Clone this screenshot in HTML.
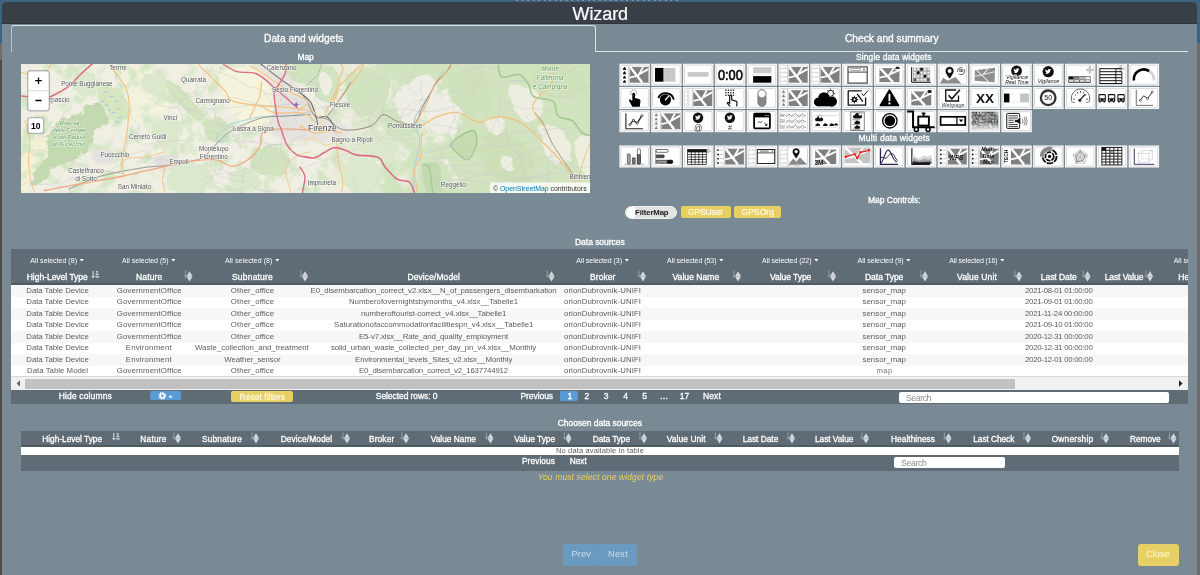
<!DOCTYPE html><html lang="en"><head><meta charset="utf-8"><title>Wizard</title><style>
html,body{margin:0;padding:0;}
body{width:1200px;height:575px;overflow:hidden;background:#4a4a4a;font-family:"Liberation Sans",sans-serif;}
#root{will-change:transform;position:absolute;left:0;top:0;width:1200px;height:575px;overflow:hidden;}
#root>div{position:absolute;}
#root>svg{position:absolute;}
span.t{position:absolute;white-space:nowrap;line-height:1;transform:translateY(-50%);}

</style></head><body>
<div id="root">
<div style="left:0px;top:0px;width:1200px;height:575px;background:#3c6482;"></div>
<div style="left:0px;top:43px;width:1200px;height:532px;background:#6d6d6d;"></div>
<div style="left:0px;top:60px;width:2px;height:515px;background:#4c4c4c;"></div>
<div style="left:2px;top:2px;width:1195px;height:580px;background:#798a94;border-radius:4px 4px 0 0;"></div>
<div style="left:2px;top:2px;width:1195px;height:22px;background:#393f47;border-radius:4px 4px 0 0;border-bottom:1px solid #2f343b;box-sizing:border-box;"></div>
<div style="left:516px;top:0px;width:164px;height:1.3px;background:repeating-linear-gradient(90deg,rgba(200,180,140,.55) 0 2px,transparent 2px 5.5px);"></div>
<div style="left:11px;top:25px;width:585px;height:27px;background:transparent;border:1px solid #dfe4e7;border-left-color:#b9c3c9;border-bottom:none;border-radius:3px 3px 0 0;box-sizing:border-box;"></div>
<div style="left:596px;top:51px;width:592px;height:1px;background:#dfe4e7;"></div>
<div style="left:625px;top:205.5px;width:52px;height:13.5px;background:#e2e2e2;border-radius:7px;border:1px solid #f2f2f2;box-sizing:border-box;"></div>
<div style="left:626.5px;top:206.8px;width:10.8px;height:10.8px;background:#fff;border-radius:50%;"></div>
<div style="left:680.5px;top:206px;width:50px;height:12px;background:#e8cf62;border-radius:2px;"></div>
<div style="left:734.3px;top:206px;width:47px;height:12px;background:#e8cf62;border-radius:2px;"></div>
<div style="left:11px;top:249px;width:1177px;height:36px;background:#5f6c75;border-bottom:2px solid #4f5b63;box-sizing:border-box;"></div>
<div style="left:11px;top:285px;width:1177px;height:92px;background:#fff;"></div>
<div style="left:11px;top:285.0px;width:1177px;height:11.5px;background:#f7f7f7;"></div>
<div style="left:11px;top:308.0px;width:1177px;height:11.5px;background:#f7f7f7;"></div>
<div style="left:11px;top:331.0px;width:1177px;height:11.5px;background:#f7f7f7;"></div>
<div style="left:11px;top:354.0px;width:1177px;height:11.5px;background:#f7f7f7;"></div>
<div style="left:11px;top:376px;width:1177px;height:1px;background:#d8d8d8;"></div>
<div style="left:11px;top:377px;width:1177px;height:13px;background:#f1f1f1;"></div>
<div style="left:25px;top:378.5px;width:990px;height:10.5px;background:#c1c1c1;"></div>
<div style="left:11px;top:390px;width:1177px;height:14px;background:#5f6c75;"></div>
<div style="left:150.3px;top:391.2px;width:31px;height:9.3px;background:#5b9bd5;border-radius:2px;"></div>
<div style="left:231.3px;top:391.3px;width:62px;height:11.2px;background:#e8cf62;border-radius:2px;"></div>
<div style="left:560px;top:391px;width:18px;height:10.3px;background:#5b9bd5;border-radius:2px;"></div>
<div style="left:898.7px;top:392px;width:270.6px;height:11.3px;background:#fff;border-radius:2px;"></div>
<div style="left:21px;top:430.8px;width:1157.7px;height:16px;background:#5f6c75;border-bottom:2px solid #4f5b63;box-sizing:border-box;"></div>
<div style="left:21px;top:446.8px;width:1157.7px;height:8.4px;background:#fff;"></div>
<div style="left:21px;top:455.2px;width:1157.7px;height:15.6px;background:#5f6c75;"></div>
<div style="left:894px;top:457.3px;width:111px;height:11px;background:#fff;border-radius:2px;"></div>
<div style="left:563px;top:543.5px;width:35.6px;height:22px;background:#6b9ac0;border-radius:3px;"></div>
<div style="left:598.5px;top:543.5px;width:38px;height:22px;background:#6b9ac0;border-radius:3px;"></div>
<div style="left:1138px;top:543.6px;width:41px;height:22.4px;background:#e8d066;border-radius:3px;"></div>
<svg style="left:11px;top:377px" width="1177" height="13" viewBox="0 0 1177 13"><path d="M9 3.2 L9 9.8 L5.6 6.5Z" fill="#666"/><path d="M1168 3.2 L1168 9.8 L1171.6 6.5Z" fill="#222"/></svg><svg style="left:0;top:0" width="1200" height="575" viewBox="0 0 1200 575"><path d="M79.7 259 h4.2 l-2.1 2.6z" fill="#fff"/><path d="M171.2 259 h4.2 l-2.1 2.6z" fill="#fff"/><path d="M275.2 259 h4.2 l-2.1 2.6z" fill="#fff"/><path d="M624.7 259 h4.2 l-2.1 2.6z" fill="#fff"/><path d="M719.2 259 h4.2 l-2.1 2.6z" fill="#fff"/><path d="M814.2 259 h4.2 l-2.1 2.6z" fill="#fff"/><path d="M906.2 259 h4.2 l-2.1 2.6z" fill="#fff"/><path d="M1000.2 259 h4.2 l-2.1 2.6z" fill="#fff"/><g fill="#c9d0d4"><rect x="92.5" y="271" width="1.2" height="6.5"/><path d="M91.3 276 h3.6 l-1.8 2.4z"/><rect x="95.89999999999999" y="271" width="2.2" height="1.6"/><rect x="95.7" y="273.4" width="2.8" height="1.6"/><rect x="95.5" y="275.8" width="3.4" height="1.8"/></g><g fill="#8f9aa1"><rect x="184.9" y="270.5" width="1.1" height="6"/><path d="M183.6 275.6 h3.7 l-1.85 2.2z"/></g><path d="M189.5 271.2 l3 5 h-6z M189.5 281.6 l3 -5 h-6z" fill="#d3d8dc"/><g fill="#8f9aa1"><rect x="300.4" y="270.5" width="1.1" height="6"/><path d="M299.1 275.6 h3.7 l-1.85 2.2z"/></g><path d="M305.0 271.2 l3 5 h-6z M305.0 281.6 l3 -5 h-6z" fill="#d3d8dc"/><g fill="#8f9aa1"><rect x="546.9" y="270.5" width="1.1" height="6"/><path d="M545.6 275.6 h3.7 l-1.85 2.2z"/></g><path d="M551.5 271.2 l3 5 h-6z M551.5 281.6 l3 -5 h-6z" fill="#d3d8dc"/><g fill="#8f9aa1"><rect x="638.4" y="270.5" width="1.1" height="6"/><path d="M637.1 275.6 h3.7 l-1.85 2.2z"/></g><path d="M643.0 271.2 l3 5 h-6z M643.0 281.6 l3 -5 h-6z" fill="#d3d8dc"/><g fill="#8f9aa1"><rect x="733.4" y="270.5" width="1.1" height="6"/><path d="M732.1 275.6 h3.7 l-1.85 2.2z"/></g><path d="M738.0 271.2 l3 5 h-6z M738.0 281.6 l3 -5 h-6z" fill="#d3d8dc"/><g fill="#8f9aa1"><rect x="828.4" y="270.5" width="1.1" height="6"/><path d="M827.1 275.6 h3.7 l-1.85 2.2z"/></g><path d="M833.0 271.2 l3 5 h-6z M833.0 281.6 l3 -5 h-6z" fill="#d3d8dc"/><g fill="#8f9aa1"><rect x="920.4" y="270.5" width="1.1" height="6"/><path d="M919.1 275.6 h3.7 l-1.85 2.2z"/></g><path d="M925.0 271.2 l3 5 h-6z M925.0 281.6 l3 -5 h-6z" fill="#d3d8dc"/><g fill="#8f9aa1"><rect x="1014.4" y="270.5" width="1.1" height="6"/><path d="M1013.1 275.6 h3.7 l-1.85 2.2z"/></g><path d="M1019.0 271.2 l3 5 h-6z M1019.0 281.6 l3 -5 h-6z" fill="#d3d8dc"/><g fill="#8f9aa1"><rect x="1082.9" y="270.5" width="1.1" height="6"/><path d="M1081.6 275.6 h3.7 l-1.85 2.2z"/></g><path d="M1087.5 271.2 l3 5 h-6z M1087.5 281.6 l3 -5 h-6z" fill="#d3d8dc"/><g fill="#8f9aa1"><rect x="1145.4" y="270.5" width="1.1" height="6"/><path d="M1144.1 275.6 h3.7 l-1.85 2.2z"/></g><path d="M1150.0 271.2 l3 5 h-6z M1150.0 281.6 l3 -5 h-6z" fill="#d3d8dc"/><g fill="#c9d0d4"><rect x="113.2" y="433" width="1.2" height="6.5"/><path d="M112 438 h3.6 l-1.8 2.4z"/><rect x="116.6" y="433" width="2.2" height="1.6"/><rect x="116.4" y="435.4" width="2.8" height="1.6"/><rect x="116.2" y="437.8" width="3.4" height="1.8"/></g><g fill="#8f9aa1"><rect x="173.4" y="432.5" width="1.1" height="6"/><path d="M172.1 437.6 h3.7 l-1.85 2.2z"/></g><path d="M178.0 433.2 l3 5 h-6z M178.0 443.6 l3 -5 h-6z" fill="#d3d8dc"/><g fill="#8f9aa1"><rect x="251.4" y="432.5" width="1.1" height="6"/><path d="M250.1 437.6 h3.7 l-1.85 2.2z"/></g><path d="M256.0 433.2 l3 5 h-6z M256.0 443.6 l3 -5 h-6z" fill="#d3d8dc"/><g fill="#8f9aa1"><rect x="342.4" y="432.5" width="1.1" height="6"/><path d="M341.1 437.6 h3.7 l-1.85 2.2z"/></g><path d="M347.0 433.2 l3 5 h-6z M347.0 443.6 l3 -5 h-6z" fill="#d3d8dc"/><g fill="#8f9aa1"><rect x="401.4" y="432.5" width="1.1" height="6"/><path d="M400.1 437.6 h3.7 l-1.85 2.2z"/></g><path d="M406.0 433.2 l3 5 h-6z M406.0 443.6 l3 -5 h-6z" fill="#d3d8dc"/><g fill="#8f9aa1"><rect x="485.9" y="432.5" width="1.1" height="6"/><path d="M484.6 437.6 h3.7 l-1.85 2.2z"/></g><path d="M490.5 433.2 l3 5 h-6z M490.5 443.6 l3 -5 h-6z" fill="#d3d8dc"/><g fill="#8f9aa1"><rect x="563.9" y="432.5" width="1.1" height="6"/><path d="M562.6 437.6 h3.7 l-1.85 2.2z"/></g><path d="M568.5 433.2 l3 5 h-6z M568.5 443.6 l3 -5 h-6z" fill="#d3d8dc"/><g fill="#8f9aa1"><rect x="639.4" y="432.5" width="1.1" height="6"/><path d="M638.1 437.6 h3.7 l-1.85 2.2z"/></g><path d="M644.0 433.2 l3 5 h-6z M644.0 443.6 l3 -5 h-6z" fill="#d3d8dc"/><g fill="#8f9aa1"><rect x="714.9" y="432.5" width="1.1" height="6"/><path d="M713.6 437.6 h3.7 l-1.85 2.2z"/></g><path d="M719.5 433.2 l3 5 h-6z M719.5 443.6 l3 -5 h-6z" fill="#d3d8dc"/><g fill="#8f9aa1"><rect x="787.4" y="432.5" width="1.1" height="6"/><path d="M786.1 437.6 h3.7 l-1.85 2.2z"/></g><path d="M792.0 433.2 l3 5 h-6z M792.0 443.6 l3 -5 h-6z" fill="#d3d8dc"/><g fill="#8f9aa1"><rect x="861.4" y="432.5" width="1.1" height="6"/><path d="M860.1 437.6 h3.7 l-1.85 2.2z"/></g><path d="M866.0 433.2 l3 5 h-6z M866.0 443.6 l3 -5 h-6z" fill="#d3d8dc"/><g fill="#8f9aa1"><rect x="943.9" y="432.5" width="1.1" height="6"/><path d="M942.6 437.6 h3.7 l-1.85 2.2z"/></g><path d="M948.5 433.2 l3 5 h-6z M948.5 443.6 l3 -5 h-6z" fill="#d3d8dc"/><g fill="#8f9aa1"><rect x="1023.4" y="432.5" width="1.1" height="6"/><path d="M1022.1 437.6 h3.7 l-1.85 2.2z"/></g><path d="M1028.0 433.2 l3 5 h-6z M1028.0 443.6 l3 -5 h-6z" fill="#d3d8dc"/><g fill="#8f9aa1"><rect x="1101.4" y="432.5" width="1.1" height="6"/><path d="M1100.1 437.6 h3.7 l-1.85 2.2z"/></g><path d="M1106.0 433.2 l3 5 h-6z M1106.0 443.6 l3 -5 h-6z" fill="#d3d8dc"/><g fill="#8f9aa1"><rect x="1168.9" y="432.5" width="1.1" height="6"/><path d="M1167.6 437.6 h3.7 l-1.85 2.2z"/></g><path d="M1173.5 433.2 l3 5 h-6z M1173.5 443.6 l3 -5 h-6z" fill="#d3d8dc"/><circle cx="162.3" cy="395.8" r="2.1" fill="none" stroke="#fff" stroke-width="1.5"/><circle cx="162.3" cy="395.8" r="3.3" fill="none" stroke="#fff" stroke-width="1.2" stroke-dasharray="1.3 1.29"/><path d="M168.6 397.4 h4 l-2 -2.4z" fill="#fff"/></svg><svg style="left:21px;top:64px" width="569" height="129" viewBox="0 0 569 129" font-family="Liberation Sans, sans-serif">
<filter id="bl"><feGaussianBlur stdDeviation="1.2"/></filter><filter id="bl2"><feGaussianBlur stdDeviation="0.5"/></filter>
<filter id="rg" x="-5%" y="-5%" width="110%" height="110%"><feTurbulence type="fractalNoise" baseFrequency="0.09" numOctaves="3" seed="4"/><feDisplacementMap in="SourceGraphic" scale="9"/><feGaussianBlur stdDeviation="0.6"/></filter>
<filter id="nz" color-interpolation-filters="sRGB" x="0" y="0" width="100%" height="100%"><feTurbulence type="fractalNoise" baseFrequency="0.075" numOctaves="4" seed="11"/><feColorMatrix values="0 0 0 0 0.83  0 0 0 0 0.90  0 0 0 0 0.77  0 0 4 0 -1.9"/></filter>
<filter id="nz2" color-interpolation-filters="sRGB" x="0" y="0" width="100%" height="100%"><feTurbulence type="fractalNoise" baseFrequency="0.05" numOctaves="4" seed="5"/><feColorMatrix values="0 0 0 0 0.82  0 0 0 0 0.89  0 0 0 0 0.75  0 0 5 0 -1.9"/></filter>
<linearGradient id="fade" x1="0" x2="1" y1="0" y2="0"><stop offset="0" stop-color="#fff" stop-opacity="0"/><stop offset="0.25" stop-color="#fff" stop-opacity="1"/></linearGradient><mask id="mk"><rect x="300" y="0" width="269" height="129" fill="url(#fade)"/></mask>
<rect width="569" height="129" fill="#f1efe4"/>
<path d="M-1.0 68.5 C1.4 60.0 8.3 75.7 13.5 75.7 C18.7 75.7 28.4 66.5 30.4 68.5 C32.4 70.5 27.6 82.2 25.6 87.8 C23.6 93.5 21.2 97.5 18.3 102.3 C15.5 107.2 11.9 112.8 8.7 116.8 C5.4 120.9 0.6 134.6 -1.0 126.5 C-2.6 118.4 -3.4 77.0 -1.0 68.5Z" fill="#f4f2d6" filter="url(#bl)"/>
<path d="M100.5 3.2 C105.3 -1.6 126.3 2.0 134.3 5.7 C142.4 9.3 147.2 17.7 148.8 25.0 C150.4 32.2 150.0 43.5 144.0 49.2 C138.0 54.8 119.0 61.2 112.6 58.8 C106.1 56.4 107.3 43.9 105.3 34.7 C103.3 25.4 95.7 8.1 100.5 3.2Z" fill="#f3f2dc" filter="url(#bl)"/>
<rect width="569" height="129" filter="url(#nz)"/>
<g mask="url(#mk)"><rect x="300" width="269" height="129" filter="url(#nz2)"/></g>
<path d="M64.2 41.9 C68.3 39.9 74.9 37.9 78.7 39.5 C82.6 41.1 86.6 48.2 87.2 51.6 C87.8 55.0 85.0 57.6 82.4 60.0 C79.8 62.5 73.5 62.3 71.5 66.1 C69.5 69.9 72.3 78.6 70.3 83.0 C68.3 87.4 64.0 89.8 59.4 92.7 C54.8 95.5 47.7 97.1 42.5 99.9 C37.3 102.7 32.8 106.0 28.0 109.6 C23.2 113.2 16.7 120.5 13.5 121.7 C10.3 122.9 7.9 120.1 8.7 116.8 C9.5 113.6 15.5 107.2 18.3 102.3 C21.2 97.5 23.6 93.5 25.6 87.8 C27.6 82.2 28.4 73.7 30.4 68.5 C32.4 63.3 33.6 59.2 37.7 56.4 C41.7 53.6 50.2 54.0 54.6 51.6 C59.0 49.2 60.2 43.9 64.2 41.9Z" fill="#c3d9b0" filter="url(#rg)"/>
<path d="M78.7 22.6 C82.1 21.1 91.2 21.1 95.7 23.1 C100.1 25.1 103.2 30.9 105.3 34.7 C107.4 38.4 108.8 40.9 108.2 45.5 C107.6 50.2 104.1 60.2 101.7 62.5 C99.3 64.8 95.9 61.5 93.7 59.3 C91.6 57.2 91.0 52.9 88.9 49.6 C86.8 46.4 83.3 42.9 81.2 40.0 C79.0 37.1 76.3 35.1 75.8 32.2 C75.4 29.3 75.4 24.1 78.7 22.6Z" fill="#d6e6c0" filter="url(#rg)"/>
<path d="M145.2 15.3 C146.8 14.5 152.1 16.9 156.1 20.2 C160.1 23.4 164.7 29.4 169.4 34.7 C174.0 39.9 182.3 47.8 183.9 51.6 C185.5 55.4 182.1 58.2 179.0 57.6 C176.0 57.0 170.0 51.8 165.7 48.0 C161.5 44.1 156.9 38.5 153.7 34.7 C150.4 30.8 147.8 28.2 146.4 25.0 C145.0 21.8 143.6 16.1 145.2 15.3Z" fill="#d2e3c0" filter="url(#rg)"/>
<path d="M124.7 10.5 C128.7 9.3 140.8 10.1 144.0 12.9 C147.2 15.7 146.4 24.6 144.0 27.4 C141.6 30.2 133.5 31.0 129.5 29.8 C125.5 28.6 120.6 23.4 119.8 20.2 C119.0 16.9 120.6 11.7 124.7 10.5Z" fill="#dbe8cc" filter="url(#rg)"/>
<path d="M134.3 56.4 C138.4 54.4 148.8 52.0 153.7 54.0 C158.5 56.0 163.3 63.7 163.3 68.5 C163.3 73.3 158.1 81.4 153.7 83.0 C149.2 84.6 140.8 81.0 136.7 78.2 C132.7 75.3 129.9 69.7 129.5 66.1 C129.1 62.5 130.3 58.4 134.3 56.4Z" fill="#dbe8cc" filter="url(#rg)"/>
<path d="M182.7 58.8 C184.7 55.2 195.1 52.8 199.6 54.0 C204.0 55.2 208.8 62.1 209.2 66.1 C209.6 70.1 205.6 76.6 202.0 78.2 C198.4 79.8 190.7 79.0 187.5 75.7 C184.3 72.5 180.6 62.5 182.7 58.8Z" fill="#d2e3c0" filter="url(#rg)"/>
<path d="M231.0 87.8 C235.4 85.0 248.7 81.4 255.2 83.0 C261.6 84.6 268.9 92.7 269.7 97.5 C270.5 102.3 265.2 110.0 260.0 112.0 C254.8 114.0 243.5 111.6 238.2 109.6 C233.0 107.6 229.8 103.5 228.6 99.9 C227.4 96.3 226.6 90.7 231.0 87.8Z" fill="#d2e3c0" filter="url(#rg)"/>
<path d="M153.7 99.9 C160.1 97.9 176.2 99.5 182.7 102.3 C189.1 105.2 192.3 112.6 192.3 116.8 C192.3 121.1 188.7 125.9 182.7 127.7 C176.6 129.5 162.5 129.9 156.1 127.7 C149.6 125.5 144.4 119.0 144.0 114.4 C143.6 109.8 147.2 101.9 153.7 99.9Z" fill="#dbe8cc" filter="url(#rg)"/>
<path d="M211.7 107.2 C214.9 103.3 226.2 102.3 231.0 104.7 C235.8 107.2 240.7 117.8 240.7 121.7 C240.7 125.5 235.8 126.7 231.0 127.7 C226.2 128.7 214.9 131.1 211.7 127.7 C208.4 124.3 208.4 111.0 211.7 107.2Z" fill="#dbe8cc" filter="url(#rg)"/>
<path d="M260.0 -1.6 C264.4 -3.2 284.2 -4.4 289.0 -1.6 C293.8 1.2 291.8 12.1 289.0 15.3 C286.2 18.6 276.5 19.0 272.1 17.7 C267.6 16.5 264.4 11.3 262.4 8.1 C260.4 4.9 255.6 0.0 260.0 -1.6Z" fill="#d2e3c0" filter="url(#rg)"/>
<path d="M54.6 10.5 C57.8 8.1 67.9 5.7 71.5 8.1 C75.1 10.5 77.9 21.0 76.3 25.0 C74.7 29.0 65.9 32.7 61.8 32.2 C57.8 31.8 53.4 26.2 52.2 22.6 C51.0 19.0 51.4 12.9 54.6 10.5Z" fill="#dbe8cc" filter="url(#rg)"/>
<path d="M202.0 0.8 C206.0 -0.4 219.7 0.4 223.7 3.2 C227.8 6.1 228.6 14.9 226.2 17.7 C223.7 20.6 213.7 21.4 209.2 20.2 C204.8 19.0 200.8 13.7 199.6 10.5 C198.4 7.3 198.0 2.0 202.0 0.8Z" fill="#dbe8cc" filter="url(#rg)"/>
<path d="M250.3 44.3 C252.3 41.5 262.0 39.9 264.8 41.9 C267.6 43.9 269.3 53.6 267.2 56.4 C265.2 59.2 255.6 60.8 252.7 58.8 C249.9 56.8 248.3 47.2 250.3 44.3Z" fill="#dbe8cc" filter="url(#rg)"/>
<path d="M13.5 54.0 C15.1 50.8 23.2 49.2 25.6 51.6 C28.0 54.0 29.6 65.3 28.0 68.5 C26.4 71.7 18.3 73.3 15.9 70.9 C13.5 68.5 11.9 57.2 13.5 54.0Z" fill="#dbe8cc" filter="url(#rg)"/>
<path d="M327.7 10.6 C332.9 5.3 352.0 4.1 359.3 5.7 C366.6 7.4 371.5 13.8 371.5 20.3 C371.5 26.8 364.6 39.4 359.3 44.7 C354.0 49.9 345.1 53.2 339.8 52.0 C334.6 50.7 329.7 44.3 327.7 37.4 C325.6 30.5 322.4 15.9 327.7 10.6Z" fill="#d2e3c0" filter="url(#rg)"/>
<path d="M371.5 -1.6 C379.6 -4.8 417.7 -4.8 425.0 -1.6 C432.3 1.7 420.5 13.0 415.3 17.9 C410.0 22.8 399.8 27.6 393.4 27.6 C386.9 27.6 380.0 22.8 376.3 17.9 C372.7 13.0 363.3 1.7 371.5 -1.6Z" fill="#d2e3c0" filter="url(#rg)"/>
<path d="M337.4 69.0 C341.4 66.6 352.8 64.5 359.3 66.6 C365.8 68.6 375.1 75.9 376.3 81.2 C377.5 86.4 371.5 96.2 366.6 98.2 C361.7 100.2 352.4 96.2 347.1 93.3 C341.9 90.5 336.6 85.2 335.0 81.2 C333.3 77.1 333.3 71.4 337.4 69.0Z" fill="#dbe8cc" filter="url(#rg)"/>
<path d="M427.4 -1.6 C451.7 -6.0 547.0 -23.3 571.0 -1.6 C594.9 20.1 591.2 106.9 571.0 128.6 C550.7 150.3 472.0 131.6 449.3 128.6 C426.6 125.6 438.8 117.0 434.7 110.4 C430.7 103.7 425.0 95.4 425.0 88.5 C425.0 81.6 430.7 74.3 434.7 69.0 C438.8 63.7 449.3 60.9 449.3 56.8 C449.3 52.8 438.8 49.9 434.7 44.7 C430.7 39.4 426.2 32.9 425.0 25.2 C423.8 17.5 403.1 2.9 427.4 -1.6Z" fill="#d2e3c0" filter="url(#rg)"/>
<path d="M429.9 10.6 C434.7 5.3 457.4 2.5 463.9 8.2 C470.4 13.8 471.2 37.4 468.8 44.7 C466.3 52.0 455.0 52.8 449.3 52.0 C443.6 51.2 438.0 46.7 434.7 39.8 C431.5 32.9 425.0 15.9 429.9 10.6Z" fill="#cfe1bb" filter="url(#rg)"/>
<path d="M512.6 0.9 C518.3 -3.6 542.6 -3.2 551.5 0.9 C560.4 4.9 566.9 19.5 566.1 25.2 C565.3 30.9 554.8 34.5 546.6 34.9 C538.5 35.3 523.1 33.3 517.4 27.6 C511.8 22.0 506.9 5.3 512.6 0.9Z" fill="#cfe1bb" filter="url(#rg)"/>
<path d="M400.7 98.2 C404.7 93.5 420.1 95.6 425.0 100.6 C429.9 105.7 433.9 123.9 429.9 128.6 C425.8 133.3 405.5 133.7 400.7 128.6 C395.8 123.5 396.6 102.9 400.7 98.2Z" fill="#d2e3c0" filter="url(#rg)"/>
<path d="M403.1 103.1 C405.1 98.4 414.8 96.4 417.7 100.6 C420.5 104.9 422.1 123.9 420.1 128.6 C418.1 133.3 408.4 132.9 405.5 128.6 C402.7 124.3 401.1 107.7 403.1 103.1Z" fill="#c3d9b0" filter="url(#rg)"/>
<path d="M468.8 69.0 C475.3 67.0 490.7 71.4 498.0 76.3 C505.3 81.2 512.6 91.3 512.6 98.2 C512.6 105.1 505.3 115.6 498.0 117.7 C490.7 119.7 475.3 115.2 468.8 110.4 C462.3 105.5 459.0 95.4 459.0 88.5 C459.0 81.6 462.3 71.0 468.8 69.0Z" fill="#cde0b8" filter="url(#rg)"/>
<path d="M322.8 98.2 C328.1 94.5 345.5 92.5 352.0 95.8 C358.5 99.0 363.3 112.2 361.7 117.7 C360.1 123.1 349.2 128.6 342.3 128.6 C335.4 128.6 323.6 122.7 320.4 117.7 C317.1 112.6 317.5 101.8 322.8 98.2Z" fill="#dbe8cc" filter="url(#rg)"/>
<path d="M488.2 22.8 C491.5 19.5 506.9 21.5 512.6 25.2 C518.3 28.8 523.1 39.0 522.3 44.7 C521.5 50.3 512.6 59.3 507.7 59.3 C502.8 59.3 496.4 50.7 493.1 44.7 C489.9 38.6 485.0 26.0 488.2 22.8Z" fill="#eeeee0" filter="url(#rg)"/>
<path d="M519.9 61.7 C523.1 59.3 536.9 61.3 541.8 66.6 C546.6 71.8 550.7 88.1 549.1 93.3 C547.5 98.6 536.5 100.2 532.0 98.2 C527.6 96.2 524.3 87.2 522.3 81.2 C520.3 75.1 516.6 64.1 519.9 61.7Z" fill="#eeeee0" filter="url(#rg)"/>
<path d="M553.9 76.3 C556.0 71.4 568.1 68.2 571.0 73.9 C573.8 79.5 573.0 105.5 571.0 110.4 C568.9 115.2 561.6 108.7 558.8 103.1 C556.0 97.4 551.9 81.2 553.9 76.3Z" fill="#eeeee0" filter="url(#rg)"/>
<path d="M463.9 56.8 C465.5 54.4 477.3 52.8 480.9 54.4 C484.6 56.0 487.4 64.1 485.8 66.6 C484.2 69.0 474.9 70.6 471.2 69.0 C467.6 67.4 462.3 59.3 463.9 56.8Z" fill="#eeeee0" filter="url(#rg)"/>
<path d="M480.9 93.3 C483.0 92.1 491.5 93.7 493.1 95.8 C494.7 97.8 492.7 104.3 490.7 105.5 C488.7 106.7 482.6 105.1 480.9 103.1 C479.3 101.0 478.9 94.5 480.9 93.3Z" fill="#eeeee0" filter="url(#rg)"/>
<path d="M378.8 25.2 C383.6 19.5 399.4 10.6 405.5 10.6 C411.6 10.6 415.3 19.5 415.3 25.2 C415.3 30.9 410.4 39.0 405.5 44.7 C400.7 50.3 390.9 59.3 386.1 59.3 C381.2 59.3 377.5 50.3 376.3 44.7 C375.1 39.0 373.9 30.9 378.8 25.2Z" fill="#efeee4" filter="url(#rg)"/>
<path d="M415.3 69.0 C420.1 71.0 430.7 70.6 434.7 66.6 C438.8 62.5 442.8 49.9 439.6 44.7 C436.3 39.4 420.9 33.3 415.3 34.9 C409.6 36.6 405.5 48.7 405.5 54.4 C405.5 60.1 410.4 67.0 415.3 69.0Z" fill="#efeee4" filter="url(#rg)"/>
<path d="M229.0 6.0 C231.5 0.7 253.0 4.0 262.0 8.0 C271.0 12.0 277.3 23.0 283.0 30.0 C288.7 37.0 288.2 44.3 296.0 50.0 C303.8 55.7 326.7 59.5 330.0 64.0 C333.3 68.5 324.5 74.8 316.0 77.0 C307.5 79.2 289.7 78.2 279.0 77.0 C268.3 75.8 257.3 76.2 252.0 70.0 C246.7 63.8 250.8 50.7 247.0 40.0 C243.2 29.3 226.5 11.3 229.0 6.0Z" fill="#e6e3de" filter="url(#bl)"/>
<path d="M200.0 8.0 C205.0 2.2 226.3 1.3 235.0 5.0 C243.7 8.7 249.8 21.2 252.0 30.0 C254.2 38.8 252.5 52.7 248.0 58.0 C243.5 63.3 232.2 65.0 225.0 62.0 C217.8 59.0 209.2 49.0 205.0 40.0 C200.8 31.0 195.0 13.8 200.0 8.0Z" fill="#f4f3dc" filter="url(#bl)"/>
<path d="M268.9 -0.8 C274.3 -3.0 294.0 -1.8 301.5 -0.8 C309.0 0.2 310.4 1.4 313.6 5.2 C316.8 9.1 322.0 16.7 320.8 22.2 C319.6 27.6 310.4 35.9 306.3 37.9 C302.3 39.9 299.9 36.9 296.7 34.2 C293.4 31.6 290.2 25.0 287.0 22.2 C283.8 19.3 280.4 18.9 277.3 17.3 C274.3 15.7 270.3 15.5 268.9 12.5 C267.5 9.5 263.4 1.4 268.9 -0.8Z" fill="#d2e3c0" filter="url(#rg)"/>
<path d="M296.7 12.5 C297.1 8.9 303.9 8.1 306.3 10.1 C308.7 12.1 311.6 21.0 311.2 24.6 C310.8 28.2 306.3 33.8 303.9 31.8 C301.5 29.8 296.3 16.1 296.7 12.5Z" fill="#eeeee2" filter="url(#rg)"/>
<path d="M134.3 92.7 C137.2 90.4 150.0 89.8 153.7 91.5 C157.3 93.1 158.9 100.1 156.1 102.3 C153.3 104.5 140.4 106.4 136.7 104.7 C133.1 103.1 131.5 94.9 134.3 92.7Z" fill="#e2e0dc" filter="url(#bl)"/>
<path d="M71.5 87.8 C73.9 85.4 86.8 83.8 90.8 85.4 C94.9 87.0 98.1 95.1 95.7 97.5 C93.2 99.9 80.4 101.5 76.3 99.9 C72.3 98.3 69.1 90.2 71.5 87.8Z" fill="#e4e2de" filter="url(#bl)"/>
<path d="M429.9 81.2 C430.3 78.1 435.7 73.8 439.6 71.4 C443.4 69.1 450.3 65.4 453.0 67.0 C455.6 68.7 456.4 76.4 455.4 81.2 C454.4 85.9 449.9 94.3 446.9 95.8 C443.8 97.2 440.0 92.1 437.2 89.7 C434.3 87.2 429.4 84.2 429.9 81.2Z" fill="#c6dbb0" stroke="#9cc388" stroke-width="1.2"/>
<path d="M477.3 0.9 C477.9 2.9 477.5 11.4 480.9 13.0 C484.4 14.7 493.5 9.4 498.0 10.6 C502.4 11.8 505.3 16.7 507.7 20.3 C510.1 24.0 508.5 29.7 512.6 32.5 C516.6 35.3 528.0 34.1 532.0 37.4 C536.1 40.6 533.7 48.7 536.9 52.0 C540.2 55.2 547.5 54.0 551.5 56.8 C555.6 59.7 558.0 66.5 561.2 69.0 C564.5 71.5 569.3 71.4 571.0 71.9" fill="none" stroke="#a3c88f" stroke-width="1.6"/>
<path d="M400.7 100.6 C401.9 101.0 406.1 98.4 408.0 103.1 C409.8 107.7 411.0 124.3 411.6 128.6" fill="none" stroke="#a3c88f" stroke-width="1.2"/>
<path d="M184.3 19.5 C184.0 17.7 182.3 11.7 182.7 9.0 C183.1 6.2 185.6 5.5 186.8 2.8 C188.0 0.1 189.3 -5.5 189.8 -7.2 M33.6 72.9 C35.7 72.4 42.0 71.4 46.1 69.9 C50.1 68.3 55.7 66.0 58.0 63.6 C60.3 61.1 59.7 56.7 60.0 55.3 M464.4 23.3 C462.1 23.0 454.6 21.0 450.6 21.2 C446.6 21.4 444.0 23.2 440.5 24.4 C437.1 25.6 433.2 26.9 429.6 28.4 C426.1 30.0 420.9 32.9 419.2 33.8 M397.7 31.5 C396.2 30.3 389.9 27.3 388.5 24.5 C387.2 21.8 388.6 18.3 389.4 15.2 C390.3 12.2 393.5 9.8 393.7 6.3 C393.9 2.9 391.4 -2.2 390.6 -5.6 C389.9 -9.0 388.8 -10.9 389.0 -14.0 C389.2 -17.2 391.3 -22.8 391.7 -24.5 M259.6 108.4 C261.0 108.2 264.5 108.3 268.3 107.5 C272.1 106.7 277.5 105.2 282.4 103.6 C287.3 102.1 292.5 100.1 297.6 98.3 C302.7 96.6 308.5 94.6 313.2 93.1 C317.8 91.6 321.5 91.2 325.5 89.6 C329.6 87.9 335.6 84.2 337.6 83.1 M521.7 64.0 C523.0 65.9 528.6 71.9 529.9 75.3 C531.1 78.7 528.9 80.8 529.3 84.6 C529.6 88.4 530.5 94.8 532.0 98.1 C533.4 101.5 535.0 102.5 538.0 104.5 C540.9 106.5 546.4 108.9 549.6 110.2 C552.9 111.5 556.2 112.0 557.5 112.3 M210.1 73.1 C213.0 72.3 222.1 69.2 227.4 68.3 C232.7 67.3 237.4 67.9 242.0 67.3 C246.7 66.8 253.1 65.4 255.4 65.0 M108.5 127.0 C107.3 127.6 103.2 128.5 101.3 130.4 C99.4 132.3 97.2 135.2 97.0 138.3 C96.9 141.4 99.8 147.2 100.3 149.0 M84.5 32.5 C83.7 33.9 82.4 39.0 79.4 40.9 C76.4 42.7 70.5 41.7 66.4 43.6 C62.3 45.5 58.6 49.6 54.9 52.3 C51.2 55.1 46.9 57.3 44.2 60.0 C41.4 62.7 39.3 67.1 38.4 68.5 M392.6 117.9 C394.7 116.5 401.9 111.8 404.7 109.2 C407.5 106.6 406.9 105.0 409.4 102.4 C411.8 99.8 416.8 96.9 419.3 93.6 C421.9 90.3 421.0 85.3 424.7 82.8 C428.4 80.2 438.9 79.1 441.7 78.3 M465.6 95.4 C466.1 96.4 466.9 98.8 468.5 101.3 C470.1 103.8 474.1 106.7 475.3 110.4 C476.5 114.2 477.5 120.5 475.5 123.9 C473.6 127.3 466.0 128.6 463.5 130.9 C461.0 133.3 460.8 134.8 460.6 138.2 C460.5 141.6 462.4 149.1 462.8 151.3 M478.2 61.9 C478.0 60.3 476.8 56.5 476.9 52.8 C476.9 49.2 478.0 43.2 478.4 39.9 C478.9 36.6 479.2 34.3 479.4 33.2 M538.4 93.1 C536.7 93.0 532.9 91.8 528.4 92.5 C523.8 93.3 515.8 94.8 511.0 97.5 C506.3 100.1 501.8 106.5 499.9 108.3 M374.0 45.2 C371.2 45.9 362.0 47.8 357.6 49.4 C353.1 51.1 350.7 53.6 347.3 55.1 C343.9 56.6 340.0 56.4 337.3 58.2 C334.5 60.0 331.8 64.7 330.7 66.1 M434.5 42.1 C431.9 42.8 424.2 45.5 418.6 46.4 C413.0 47.3 406.8 47.8 400.9 47.5 C395.1 47.3 388.7 45.2 383.5 45.1 C378.3 45.0 371.8 46.6 369.5 46.9 M441.8 78.5 C441.2 76.6 438.9 70.8 437.8 67.2 C436.7 63.7 436.1 60.1 435.2 57.3 C434.4 54.5 433.3 53.0 432.8 50.5 C432.3 48.0 432.3 43.7 432.2 42.3 M439.4 65.5 C437.0 65.0 429.8 63.5 424.8 62.5 C419.8 61.4 414.0 60.7 409.3 59.4 C404.6 58.1 398.6 55.3 396.5 54.5 M397.9 113.1 C400.9 113.4 410.9 114.3 416.1 114.8 C421.3 115.3 424.1 116.1 428.9 116.2 C433.7 116.2 440.6 115.9 444.9 115.2 C449.3 114.4 450.2 112.6 455.1 111.8 C460.0 111.0 471.0 110.7 474.2 110.4 M208.4 32.7 C211.2 33.3 219.8 35.2 225.7 36.8 C231.6 38.4 238.4 41.4 243.6 42.3 C248.7 43.2 252.9 42.5 256.7 42.1 C260.6 41.7 263.7 40.2 266.8 40.0 C269.8 39.8 272.3 40.6 275.0 40.7 C277.7 40.8 281.8 40.5 283.2 40.5 M355.0 66.1 C355.8 67.3 356.1 71.4 359.5 73.2 C362.9 74.9 370.5 76.2 375.4 76.5 C380.2 76.8 384.4 75.0 388.4 75.2 C392.3 75.4 397.1 77.2 398.8 77.6 M523.0 73.6 C521.3 72.6 514.6 69.6 512.7 67.5 C510.9 65.5 513.2 63.9 512.0 61.4 C510.7 59.0 506.4 54.2 505.3 52.7 M126.6 34.1 C128.6 35.3 135.5 39.5 139.1 41.0 C142.8 42.5 145.4 43.0 148.4 43.2 C151.5 43.3 156.1 42.2 157.7 42.1 M28.7 26.0 C27.9 27.5 26.2 31.6 24.3 34.7 C22.4 37.8 19.8 42.6 17.3 44.4 C14.7 46.3 13.6 45.1 9.0 45.7 C4.4 46.2 -5.2 46.4 -10.3 47.7 C-15.5 49.0 -19.8 52.6 -21.7 53.6 M369.9 84.7 C368.8 83.6 365.7 80.6 363.1 78.4 C360.5 76.2 356.8 74.4 354.3 71.4 C351.8 68.5 349.2 63.5 348.2 60.6 C347.1 57.8 347.5 57.1 348.0 54.5 C348.5 52.0 351.8 48.1 351.1 45.2 C350.4 42.3 345.2 38.4 344.1 37.1 M287.9 125.2 C286.2 125.3 280.9 124.4 277.7 125.4 C274.4 126.4 271.8 130.1 268.3 131.0 C264.8 132.0 260.0 131.8 256.4 131.3 C252.9 130.7 250.1 128.6 247.1 127.7 C244.1 126.7 239.9 125.8 238.4 125.5 M373.3 32.0 C373.0 30.5 373.0 25.4 371.8 22.9 C370.5 20.5 369.1 18.7 365.8 17.1 C362.5 15.5 354.2 13.9 351.9 13.3 M427.1 84.8 C427.5 83.2 429.6 77.8 429.6 75.0 C429.7 72.2 426.9 70.7 427.3 67.9 C427.8 65.1 430.9 61.5 432.3 58.3 C433.7 55.0 433.2 51.3 435.7 48.4 C438.3 45.6 444.4 42.9 447.7 41.0 C451.0 39.1 454.1 37.7 455.4 37.0 M454.0 91.7 C455.0 90.3 456.6 85.1 459.6 83.3 C462.6 81.6 468.9 82.9 471.8 81.3 C474.8 79.6 475.7 76.4 477.3 73.6 C478.9 70.8 480.6 66.1 481.3 64.6 M39.9 120.3 C41.2 119.5 45.5 117.2 47.9 115.4 C50.3 113.7 51.7 111.6 54.3 109.8 C56.9 108.0 62.2 105.5 63.7 104.6 M555.2 63.7 C553.3 63.9 547.5 64.6 543.9 64.8 C540.3 64.9 537.8 64.2 533.5 64.5 C529.2 64.9 522.2 66.5 518.1 67.0 C513.9 67.5 513.3 67.3 508.5 67.4 C503.6 67.6 494.2 66.9 488.8 67.9 C483.5 68.8 478.5 72.2 476.4 73.0 M162.5 60.1 C162.2 58.5 161.9 53.6 161.1 50.4 C160.2 47.3 157.0 44.4 157.2 41.4 C157.3 38.4 158.8 34.8 161.9 32.6 C165.0 30.3 173.6 28.8 175.9 28.1 M51.4 96.4 C52.7 97.9 58.0 102.7 59.0 105.5 C60.0 108.4 59.0 111.2 57.3 113.3 C55.7 115.5 50.2 115.8 48.9 118.3 C47.6 120.7 48.8 124.9 49.4 127.8 C50.0 130.8 51.9 134.8 52.4 136.2 M179.8 108.4 C181.2 109.4 184.6 112.6 188.2 114.7 C191.8 116.7 197.6 118.2 201.5 120.5 C205.5 122.8 208.7 126.1 212.0 128.5 C215.3 130.9 218.3 133.3 221.2 134.8 C224.0 136.3 227.7 137.1 229.0 137.5 M474.9 36.8 C477.1 37.2 483.3 37.7 487.7 39.0 C492.2 40.3 496.6 43.7 501.8 44.6 C507.0 45.4 513.9 43.7 518.9 44.3 C523.9 44.9 529.6 47.4 531.8 48.0 M45.8 120.4 C44.1 120.8 38.5 122.7 35.1 122.7 C31.8 122.7 29.4 120.8 25.9 120.4 C22.4 119.9 17.7 121.3 14.3 120.1 C11.0 118.9 7.1 114.2 5.7 113.0 M171.2 71.9 C169.8 72.6 167.0 75.6 163.2 76.4 C159.5 77.2 153.8 76.2 148.6 76.6 C143.4 77.1 136.6 78.4 132.1 79.1 C127.5 79.7 123.2 80.3 121.4 80.5 M316.3 41.2 C313.6 41.6 304.9 42.8 300.0 43.8 C295.1 44.8 290.2 46.0 286.9 47.4 C283.5 48.8 282.6 51.5 279.8 52.3 C277.1 53.0 271.9 52.1 270.3 52.0 M358.3 111.3 C357.6 113.1 355.2 118.1 354.0 121.8 C352.9 125.6 352.9 131.0 351.2 134.0 C349.5 137.0 347.8 138.2 343.7 139.8 C339.7 141.5 331.1 142.5 326.9 143.9 C322.6 145.3 319.8 147.4 318.4 148.0 M528.1 68.1 C526.8 68.7 523.9 70.1 520.2 71.9 C516.5 73.7 511.1 77.1 506.2 78.7 C501.3 80.2 495.7 80.5 490.8 81.2 C485.8 81.9 480.8 82.9 476.7 82.9 C472.6 82.9 469.6 81.9 466.0 81.3 C462.4 80.6 456.8 79.4 454.9 79.0 M143.3 82.1 C141.8 80.7 137.6 75.5 134.3 73.5 C131.0 71.6 127.5 69.9 123.5 70.4 C119.5 70.9 112.6 75.4 110.5 76.4 M158.5 40.8 C159.4 39.7 160.5 35.6 163.9 33.9 C167.4 32.2 175.4 32.8 179.1 30.6 C182.7 28.4 184.0 24.0 185.8 20.6 C187.6 17.2 189.3 11.9 190.0 10.1 M526.4 29.3 C528.2 30.0 533.5 33.4 537.1 33.8 C540.8 34.2 544.9 32.9 548.5 31.6 C552.0 30.4 555.2 27.8 558.4 26.3 C561.7 24.8 564.0 23.9 567.9 22.5 C571.8 21.1 579.5 18.7 581.8 17.9 M354.8 78.7 C356.7 77.1 363.8 72.0 366.3 69.2 C368.9 66.4 368.2 63.7 370.1 61.9 C372.1 60.1 376.1 60.9 378.1 58.3 C380.2 55.6 379.6 49.4 382.6 45.9 C385.5 42.4 391.5 38.7 395.6 37.1 C399.8 35.6 405.6 36.7 407.5 36.6 M532.5 96.3 C535.1 97.3 543.9 101.1 548.0 102.2 C552.0 103.4 552.3 102.9 556.9 103.1 C561.4 103.3 570.4 102.5 575.5 103.2 C580.5 104.0 582.3 106.9 587.1 107.7 C592.0 108.6 600.2 107.7 604.7 108.5 C609.2 109.3 612.6 111.8 614.2 112.5 M254.0 41.7 C252.5 40.2 247.2 35.0 245.3 32.5 C243.3 30.0 245.4 28.3 242.2 26.6 C239.1 24.9 230.9 24.0 226.4 22.1 C221.9 20.2 219.8 17.3 215.3 15.1 C210.8 12.9 204.7 10.2 199.4 8.7 C194.1 7.3 186.2 6.7 183.5 6.3 M156.8 0.5 C155.8 -0.8 151.5 -4.6 150.4 -7.4 C149.4 -10.2 151.3 -13.4 150.6 -16.5 C149.9 -19.6 146.9 -24.3 146.2 -25.9 M528.1 23.6 C530.1 22.3 537.2 18.4 540.2 15.9 C543.3 13.3 544.1 10.3 546.3 8.2 C548.5 6.2 550.5 4.8 553.5 3.7 C556.4 2.7 560.8 3.4 564.0 1.9 C567.2 0.5 571.3 -3.9 572.7 -5.0 M557.8 114.0 C559.5 114.1 564.1 113.8 568.2 114.9 C572.3 115.9 577.7 118.6 582.2 120.0 C586.7 121.5 590.7 123.1 595.3 123.5 C599.9 123.8 604.5 122.0 609.7 122.2 C614.9 122.3 623.6 124.0 626.4 124.3 M159.0 34.5 C159.7 35.8 160.1 39.5 163.2 41.9 C166.3 44.2 173.3 46.5 177.6 48.6 C181.9 50.8 185.6 52.7 189.1 54.6 C192.6 56.6 194.5 58.5 198.8 60.1 C203.0 61.8 211.7 63.7 214.3 64.4 M270.1 105.7 C270.0 104.5 271.0 101.4 269.3 98.7 C267.5 96.0 261.0 93.1 259.6 89.4 C258.2 85.7 260.5 80.7 260.7 76.6 C261.0 72.4 260.0 67.8 261.0 64.3 C261.9 60.9 265.6 57.2 266.5 55.7 M352.8 28.1 C352.4 29.1 352.3 31.4 350.6 34.3 C348.9 37.3 345.7 42.9 342.7 45.7 C339.7 48.6 335.7 50.0 332.8 51.4 C329.8 52.9 326.3 54.1 325.0 54.6 M282.0 62.4 C280.5 63.0 276.4 65.1 272.7 65.9 C269.1 66.6 264.5 67.6 260.1 67.0 C255.7 66.3 251.5 62.7 246.4 62.1 C241.3 61.5 233.7 62.6 229.5 63.1 C225.4 63.7 225.4 65.5 221.5 65.5 C217.6 65.6 208.7 63.8 206.1 63.5 M230.4 121.5 C227.9 122.3 219.8 125.4 215.0 126.1 C210.1 126.9 205.6 124.9 201.4 126.0 C197.3 127.2 193.3 131.6 189.9 132.9 C186.5 134.2 182.4 133.7 180.9 133.9 M211.0 65.1 C212.5 65.5 215.9 66.8 220.1 67.9 C224.3 68.9 232.3 69.3 236.5 71.3 C240.7 73.2 240.7 78.1 245.3 79.5 C249.9 81.0 258.5 79.8 264.2 80.1 C269.9 80.4 277.0 81.3 279.5 81.6 M405.3 88.8 C407.5 88.2 414.3 86.2 418.7 85.0 C423.0 83.9 427.5 82.2 431.2 81.7 C435.0 81.2 436.5 83.0 441.1 82.2 C445.7 81.4 456.0 77.8 458.9 77.0 M109.6 114.0 C111.0 113.0 114.7 110.3 118.2 107.8 C121.7 105.2 127.0 101.1 130.6 98.8 C134.3 96.6 138.6 95.0 140.2 94.2 M221.5 47.4 C219.4 48.4 212.7 50.6 209.1 53.4 C205.6 56.1 202.4 60.6 200.1 63.8 C197.8 67.0 196.0 69.4 195.3 72.4 C194.6 75.4 195.7 80.3 195.8 81.8 M52.2 57.0 C50.9 58.2 47.4 62.3 44.2 64.4 C41.0 66.4 37.7 67.6 33.1 69.3 C28.5 71.0 19.3 73.7 16.6 74.6 M446.2 3.3 C449.5 3.3 460.2 2.5 466.0 3.2 C471.9 3.9 477.2 5.9 481.4 7.5 C485.6 9.2 489.6 12.2 491.2 13.1 M199.7 97.5 C199.7 98.9 201.1 102.8 199.8 105.6 C198.4 108.4 194.2 111.7 191.5 114.2 C188.8 116.6 185.8 117.6 183.7 120.4 C181.6 123.1 179.8 127.5 178.9 130.7 C177.9 133.9 178.1 138.2 178.0 139.7 M450.7 34.1 C451.3 32.0 452.9 25.8 454.4 21.7 C455.9 17.6 459.6 13.4 460.0 9.6 C460.3 5.7 457.1 0.5 456.5 -1.3 M224.3 102.9 C223.9 104.9 222.5 110.8 221.9 114.8 C221.3 118.7 219.4 123.5 220.7 126.6 C221.9 129.8 226.9 130.8 229.4 133.6 C231.9 136.5 234.4 141.1 235.6 143.8 C236.8 146.5 236.5 148.8 236.7 149.8 M19.2 19.3 C17.5 18.7 12.9 16.8 9.1 15.6 C5.3 14.4 1.0 12.6 -3.6 12.0 C-8.2 11.5 -13.5 12.2 -18.4 12.3 C-23.3 12.3 -28.9 11.8 -32.8 12.2 C-36.8 12.6 -38.9 14.4 -42.1 14.6 C-45.2 14.9 -50.2 13.7 -51.8 13.5 M456.1 91.3 C453.0 91.5 442.6 92.2 437.7 92.7 C432.9 93.2 431.2 93.9 426.9 94.2 C422.7 94.6 414.6 94.6 412.2 94.7 M367.3 57.2 C369.6 56.5 377.2 54.5 381.1 52.9 C385.1 51.3 388.6 49.6 390.9 47.8 C393.3 45.9 393.5 44.0 395.2 41.9 C396.9 39.8 400.5 37.9 401.2 35.1 C401.9 32.3 399.6 28.0 399.6 25.1 C399.7 22.2 401.0 19.0 401.3 17.7 M176.0 38.7 C177.1 39.9 180.3 43.2 182.7 46.0 C185.1 48.8 188.1 53.2 190.6 55.7 C193.0 58.2 195.0 59.4 197.4 61.0 C199.8 62.6 201.8 62.9 204.8 65.2 C207.8 67.5 212.9 71.7 215.5 74.9 C218.0 78.1 219.3 82.8 220.0 84.4 M248.1 101.7 C245.0 102.0 234.1 102.4 229.2 103.6 C224.2 104.7 223.3 107.4 218.6 108.4 C213.8 109.4 206.2 108.7 200.7 109.6 C195.2 110.6 189.7 112.3 185.4 114.1 C181.1 115.9 176.5 119.4 174.7 120.5 M484.7 118.9 C487.1 118.7 494.4 119.1 498.9 117.9 C503.5 116.8 507.2 113.6 512.2 112.2 C517.2 110.8 523.8 110.3 529.0 109.7 C534.2 109.0 540.1 110.0 543.6 108.5 C547.1 106.9 548.0 103.7 550.0 100.5 C552.0 97.3 554.6 91.2 555.5 89.3 M17.6 17.9 C16.5 16.9 12.7 14.8 11.1 11.8 C9.5 8.8 7.8 2.8 7.8 -0.3 C7.8 -3.3 10.6 -5.6 11.1 -6.7 M493.8 118.0 C495.1 117.3 497.2 114.7 501.7 113.9 C506.2 113.0 515.2 114.2 520.6 112.9 C526.0 111.7 531.8 107.3 534.1 106.2 M271.5 17.1 C271.4 15.8 272.0 11.4 271.2 9.0 C270.4 6.6 267.0 5.9 266.7 2.8 C266.4 -0.2 268.1 -5.9 269.1 -9.2 C270.1 -12.6 272.2 -15.9 272.8 -17.2 M424.3 101.8 C427.0 101.8 435.2 102.1 440.7 101.6 C446.3 101.1 453.0 99.3 457.5 98.9 C462.0 98.5 465.9 99.1 467.6 99.1 M115.0 98.3 C116.4 97.7 118.9 94.8 123.5 94.3 C128.2 93.8 138.0 94.0 143.0 95.4 C148.0 96.7 151.8 101.3 153.5 102.5 M90.4 105.2 C91.8 104.5 96.0 103.2 99.0 100.9 C102.1 98.6 105.0 93.7 108.7 91.3 C112.5 88.9 118.0 88.7 121.8 86.5 C125.5 84.2 129.8 79.3 131.4 77.9 M49.0 114.6 C51.2 114.4 57.1 114.6 62.1 113.4 C67.0 112.2 74.3 108.3 78.7 107.4 C83.0 106.4 84.2 107.4 88.2 107.8 C92.2 108.2 100.3 109.4 102.7 109.7 M330.9 67.3 C333.2 66.6 340.3 64.9 344.8 63.1 C349.4 61.3 355.1 59.5 358.1 56.3 C361.1 53.2 362.1 47.5 362.9 44.1 C363.6 40.6 362.0 38.2 362.8 35.7 C363.6 33.1 367.2 31.3 367.7 28.7 C368.1 26.1 365.8 21.7 365.4 20.3 M297.1 20.8 C296.6 23.1 293.8 31.1 294.2 34.6 C294.5 38.1 297.1 39.6 299.1 41.7 C301.2 43.9 303.4 46.1 306.2 47.6 C309.1 49.1 314.5 50.2 316.2 50.7 M518.6 36.2 C519.0 34.2 519.6 27.8 521.1 24.1 C522.5 20.5 525.6 17.5 527.3 14.2 C529.0 10.9 529.8 8.1 531.2 4.3 C532.7 0.6 534.7 -4.3 535.9 -8.4 C537.2 -12.5 538.0 -16.3 538.6 -20.2 C539.2 -24.1 539.3 -30.0 539.4 -32.0 M500.8 99.9 C500.6 98.3 500.8 92.9 499.8 90.2 C498.8 87.6 496.8 86.7 494.8 83.8 C492.7 81.0 489.1 76.5 487.4 73.2 C485.7 69.9 485.1 65.7 484.6 64.1 M259.0 80.2 C257.0 80.2 251.9 80.8 247.1 80.3 C242.2 79.8 234.6 78.0 230.0 77.3 C225.4 76.7 222.5 77.4 219.5 76.2 C216.4 75.0 213.0 71.3 211.7 70.3 M482.0 58.9 C482.7 61.0 485.0 66.9 486.2 71.1 C487.4 75.3 487.1 80.9 489.2 84.3 C491.3 87.7 496.8 88.2 498.9 91.6 C500.9 95.1 500.4 101.6 501.5 105.0 C502.5 108.4 504.0 109.8 505.4 112.3 C506.9 114.8 509.4 118.6 510.2 119.9 M239.3 90.1 C239.1 91.6 240.6 96.0 238.2 99.2 C235.8 102.5 229.5 107.7 225.1 109.6 C220.7 111.6 215.4 111.7 211.8 111.1 C208.3 110.5 207.7 107.0 203.7 106.2 C199.7 105.4 190.6 106.5 188.0 106.5 M463.5 18.9 C462.5 17.4 461.0 12.3 457.3 10.1 C453.5 8.0 445.0 8.0 441.2 6.1 C437.5 4.2 437.7 0.7 434.8 -1.3 C432.0 -3.2 428.7 -5.0 424.1 -5.6 C419.6 -6.2 412.0 -5.7 407.5 -4.9 C403.0 -4.1 398.7 -1.5 397.0 -0.8 M243.8 82.2 C242.1 81.5 237.8 78.4 233.7 77.8 C229.5 77.1 223.4 79.0 218.9 78.3 C214.4 77.7 210.8 75.3 206.7 73.8 C202.6 72.2 198.2 69.9 194.2 69.0 C190.2 68.1 184.6 68.4 182.7 68.3 M329.2 110.2 C330.1 112.0 333.6 117.0 334.9 121.0 C336.2 124.9 336.4 129.8 337.0 133.8 C337.5 137.8 339.2 141.4 338.0 145.1 C336.8 148.9 331.3 152.8 329.8 156.3 C328.2 159.9 329.7 162.8 328.7 166.6 C327.6 170.3 324.3 176.5 323.4 178.5 M315.8 34.1 C316.2 35.8 318.7 41.1 317.8 43.9 C317.0 46.7 312.0 48.0 311.0 51.1 C310.0 54.3 310.5 59.4 311.6 63.0 C312.7 66.7 316.5 71.4 317.4 73.1 M283.1 38.3 C280.1 38.6 270.3 39.9 264.7 40.4 C259.0 40.9 254.5 41.2 249.2 41.3 C243.9 41.4 238.9 40.7 233.0 41.1 C227.1 41.4 220.0 42.7 213.7 43.3 C207.4 43.9 201.1 44.7 195.5 44.8 C189.9 45.0 182.6 44.4 180.0 44.3 M490.3 47.2 C488.5 47.8 482.2 48.9 479.5 50.8 C476.8 52.7 476.0 55.3 474.2 58.7 C472.4 62.0 471.3 68.3 468.7 71.0 C466.1 73.8 460.2 74.5 458.5 75.2 M280.1 15.2 C282.6 15.9 292.3 17.0 295.3 19.5 C298.2 21.9 296.5 26.5 297.7 29.7 C298.9 32.9 300.5 35.6 302.4 38.4 C304.3 41.2 305.6 44.5 308.9 46.5 C312.3 48.6 320.2 49.9 322.4 50.6 M285.0 70.1 C282.7 71.1 275.4 74.6 271.5 76.2 C267.6 77.9 265.9 79.0 261.6 80.1 C257.3 81.2 249.4 80.8 245.8 82.8 C242.3 84.8 241.2 90.5 240.3 92.0 M520.1 84.6 C517.9 85.1 510.6 86.4 506.7 87.9 C502.8 89.4 500.2 90.9 496.7 93.4 C493.2 95.9 487.9 100.4 485.7 103.1 C483.5 105.7 483.9 108.3 483.5 109.3 M67.6 104.5 C66.4 103.9 64.1 102.8 60.1 101.0 C56.1 99.3 48.1 95.8 43.4 94.1 C38.8 92.4 35.3 92.2 32.0 90.9 C28.8 89.6 26.6 87.1 23.9 86.3 C21.2 85.5 20.0 85.6 15.8 86.1 C11.7 86.6 1.6 88.8 -1.2 89.4 M494.8 16.6 C497.6 16.7 506.1 17.4 511.7 17.2 C517.3 17.0 523.4 16.6 528.5 15.5 C533.6 14.4 537.9 12.4 542.2 10.5 C546.4 8.7 552.0 5.5 554.0 4.5 M506.4 117.8 C507.7 117.2 511.3 114.5 514.1 114.0 C516.9 113.4 520.0 113.7 523.0 114.7 C526.0 115.7 530.6 119.0 532.2 119.9 M276.7 7.7 C275.7 9.5 271.9 15.3 270.3 18.3 C268.7 21.2 269.0 22.6 267.2 25.5 C265.5 28.4 261.9 32.2 259.7 35.7 C257.5 39.1 255.6 42.7 254.2 46.2 C252.7 49.7 252.9 53.4 251.0 56.7 C249.1 60.1 244.0 64.6 242.6 66.2 M494.8 93.6 C496.7 94.0 502.8 94.1 506.1 95.8 C509.5 97.6 511.7 100.9 515.0 103.9 C518.4 106.9 523.4 111.4 526.3 113.9 C529.3 116.3 531.8 117.8 532.8 118.6 M240.4 75.7 C240.6 73.5 240.2 66.4 241.5 62.6 C242.9 58.9 245.1 55.4 248.6 53.1 C252.0 50.8 260.0 49.6 262.3 48.9 M284.5 69.0 C283.1 67.7 278.2 64.5 276.3 61.5 C274.4 58.6 273.8 54.2 273.1 51.2 C272.5 48.2 273.6 46.7 272.4 43.5 C271.2 40.4 267.6 35.9 265.9 32.2 C264.1 28.4 262.7 24.6 261.9 20.9 C261.1 17.3 261.3 12.1 261.1 10.3 M510.4 114.2 C508.6 114.0 504.4 112.7 500.0 113.1 C495.6 113.5 488.6 115.3 484.0 116.5 C479.3 117.7 476.0 120.1 472.3 120.3 C468.5 120.6 466.3 118.6 461.5 117.9 C456.7 117.2 447.9 116.8 443.4 116.4 C438.9 115.9 435.9 115.5 434.4 115.3 M17.3 36.2 C14.0 36.2 3.2 36.0 -2.6 36.0 C-8.4 35.9 -12.9 36.8 -17.4 36.0 C-21.9 35.1 -27.5 31.7 -29.5 30.8 M436.6 105.6 C438.5 106.2 444.9 108.4 448.3 109.1 C451.6 109.7 452.5 109.6 456.6 109.6 C460.7 109.5 467.3 107.9 472.9 108.5 C478.6 109.1 484.8 111.4 490.3 113.3 C495.9 115.2 503.7 118.6 506.3 119.6 M51.2 41.1 C49.8 42.4 45.1 45.6 43.0 49.0 C40.9 52.4 41.0 58.8 38.6 61.3 C36.3 63.8 30.5 63.4 28.9 63.9 M145.6 45.4 C147.0 45.1 150.1 43.6 154.1 43.7 C158.1 43.7 165.6 46.3 169.6 45.8 C173.7 45.2 176.9 41.2 178.3 40.3 M534.5 87.3 C533.6 88.4 530.2 91.4 528.8 94.1 C527.3 96.8 526.0 100.7 525.7 103.4 C525.5 106.1 527.1 107.4 527.2 110.5 C527.3 113.6 526.0 118.1 526.3 122.1 C526.6 126.2 526.4 131.1 528.9 134.9 C531.5 138.7 539.3 143.1 541.4 144.7 M505.7 18.0 C503.6 17.8 498.6 16.2 493.5 16.4 C488.4 16.6 479.2 17.8 474.9 19.2 C470.6 20.6 468.9 24.0 467.7 25.0 M188.9 95.0 C189.5 97.0 190.4 104.1 192.4 107.1 C194.3 110.0 196.7 111.0 200.6 112.7 C204.5 114.3 211.1 116.4 215.9 117.3 C220.8 118.2 226.2 116.5 229.8 118.1 C233.3 119.6 232.8 125.0 237.2 126.5 C241.5 128.0 252.8 126.9 255.9 126.9 M120.1 61.6 C118.3 62.9 111.6 66.9 109.3 69.5 C107.1 72.1 107.3 74.7 106.6 77.1 C106.0 79.6 107.4 82.2 105.4 84.4 C103.4 86.6 98.2 88.2 94.9 90.5 C91.6 92.7 87.3 96.6 85.8 97.8 M290.6 57.1 C290.2 55.0 289.9 47.3 288.1 44.1 C286.3 40.9 283.7 40.2 279.8 38.2 C276.0 36.2 269.0 33.3 265.0 32.2 C261.1 31.1 259.8 32.0 256.1 31.5 C252.4 31.0 244.9 29.7 242.6 29.4 M117.2 79.0 C117.0 77.9 115.5 75.6 115.7 72.6 C115.8 69.5 118.8 64.2 117.9 61.0 C117.0 57.7 111.4 56.1 110.2 53.1 C109.0 50.2 110.7 44.9 110.8 43.2 M8.8 117.4 C6.6 118.5 -0.9 121.4 -4.2 124.1 C-7.4 126.8 -8.1 130.8 -10.9 133.8 C-13.6 136.7 -17.6 140.5 -20.7 141.9 C-23.8 143.2 -25.2 141.1 -29.5 141.8 C-33.8 142.6 -43.6 145.6 -46.4 146.4" fill="none" stroke="#cbc5cf" stroke-width="0.6" opacity="0.7"/>
<path d="M422.6 5.7 C420.7 9.0 415.3 19.1 411.6 25.2 C408.0 31.3 403.7 37.0 400.7 42.2 C397.6 47.5 393.7 51.2 393.4 56.8 C393.0 62.5 398.3 70.2 398.7 76.3 C399.1 82.4 396.9 88.1 395.8 93.3 C394.7 98.6 392.5 102.0 392.1 107.9 C391.7 113.8 393.2 125.2 393.4 128.6" fill="none" stroke="#aad3df" stroke-width="1.1"/>
<path d="M289.0 48.0 C285.8 48.6 277.7 50.8 269.7 51.6 C261.6 52.4 248.3 52.0 240.7 52.8 C233.0 53.6 228.6 55.3 223.7 56.4 C218.9 57.5 214.9 57.9 211.7 59.3 C208.4 60.7 206.4 63.3 204.4 64.9 C202.4 66.4 201.0 67.1 199.6 68.5 C198.2 69.9 196.2 71.7 196.0 73.3 C195.8 74.9 197.0 77.8 198.4 78.2 C199.8 78.6 202.6 77.4 204.4 75.7 C206.2 74.1 208.4 69.7 209.2 68.5" fill="none" stroke="#aad3df" stroke-width="1"/>
<path d="M92.0 0.8 C92.6 3.2 93.9 10.9 95.7 15.3 C97.5 19.8 102.1 24.2 102.9 27.4 C103.7 30.6 100.9 33.5 100.5 34.7" fill="none" stroke="#b5d9e4" stroke-width="0.7"/>
<path d="M175.4 15.3 C175.8 17.7 175.0 25.0 177.8 29.8 C180.6 34.7 189.5 40.3 192.3 44.3 C195.1 48.4 194.3 52.4 194.7 54.0" fill="none" stroke="#b5d9e4" stroke-width="0.6"/>
<rect x="82.4" y="27.4" width="4" height="0.9" fill="#9cc9e6"/>
<rect x="88.4" y="32.2" width="4" height="0.9" fill="#9cc9e6"/>
<rect x="93.2" y="37.1" width="4" height="0.9" fill="#9cc9e6"/>
<rect x="83.6" y="40.7" width="4" height="0.9" fill="#9cc9e6"/>
<rect x="95.7" y="44.3" width="4" height="0.9" fill="#9cc9e6"/>
<rect x="90.8" y="48.0" width="4" height="0.9" fill="#9cc9e6"/>
<rect x="96.9" y="52.8" width="4" height="0.9" fill="#9cc9e6"/>
<rect x="94.5" y="57.6" width="4" height="0.9" fill="#9cc9e6"/>
<rect x="78.7" y="37.1" width="4" height="0.9" fill="#9cc9e6"/>
<rect x="86.0" y="45.5" width="4" height="0.9" fill="#9cc9e6"/>
<path d="M289.0 50.4 C285.0 50.7 272.9 51.5 264.8 52.1 C256.8 52.7 249.5 51.7 240.7 54.0 C231.8 56.3 218.5 62.5 211.7 66.1 C204.8 69.7 204.4 71.3 199.6 75.7 C194.7 80.2 187.9 89.0 182.7 92.7 C177.4 96.3 174.6 96.0 168.2 97.5 C161.7 99.0 152.1 100.5 144.0 101.6 C135.9 102.7 130.7 102.2 119.8 104.0 C109.0 105.8 90.8 108.9 78.7 112.5 C66.7 116.0 52.6 123.2 47.3 125.3" fill="none" stroke="#8f8f8f" stroke-width="0.9"/>
<path d="M279.0 27.6 C280.2 29.3 283.9 33.3 286.3 37.4 C288.7 41.4 290.4 49.0 293.6 52.0 C296.8 54.9 300.9 52.6 305.8 54.9 C310.6 57.2 315.5 64.6 322.8 65.8 C330.1 67.0 343.1 64.7 349.6 62.2 C356.0 59.7 357.3 51.6 361.7 50.7 C366.2 49.9 371.1 55.8 376.3 57.3 C381.6 58.8 389.3 61.9 393.4 59.7 C397.4 57.6 397.8 50.0 400.7 44.7 C403.5 39.3 408.0 32.1 410.4 27.6 C412.8 23.2 412.4 21.5 415.3 17.9 C418.1 14.2 425.0 8.8 427.4 5.7 C429.9 2.7 429.4 0.7 429.9 -0.4" fill="none" stroke="#9a8a78" stroke-width="1"/>
<path d="M513.8 48.3 C515.2 50.2 519.7 55.1 522.3 59.7 C524.9 64.4 526.8 70.9 529.6 76.3 C532.4 81.7 536.3 87.4 539.3 92.1 C542.4 96.8 545.4 100.4 547.9 104.3 C550.3 108.1 552.9 113.4 553.9 115.2" fill="none" stroke="#a3907a" stroke-width="0.9"/>
<path d="M238.7 -0.8 C242.1 1.8 252.4 9.9 259.2 14.9 C266.1 20.0 274.7 25.6 279.7 29.4 C284.8 33.2 286.9 34.0 289.4 37.9 C291.9 41.7 293.6 48.5 294.9 52.4 C296.1 56.2 296.4 59.4 296.7 60.8" fill="none" stroke="#6e6e6e" stroke-width="1.1"/>
<path d="M296.7 53.6 C298.3 53.5 303.5 51.4 306.3 53.0 C309.2 54.6 312.4 61.5 313.6 63.2" fill="none" stroke="#6e6e6e" stroke-width="1.1"/>
<path d="M300.3 0.4 C299.7 2.0 299.1 6.5 296.7 10.1 C294.2 13.7 287.6 20.2 285.8 22.2" fill="none" stroke="#888" stroke-width="0.7" stroke-dasharray="2 1.2"/>
<path d="M92.0 5.7 C93.2 7.3 97.1 12.1 99.3 15.3 C101.5 18.6 103.8 21.0 105.3 25.0 C106.8 29.0 107.9 34.3 108.2 39.5 C108.6 44.7 107.7 50.8 107.3 56.4 C106.8 62.1 106.3 67.3 105.3 73.3 C104.4 79.4 102.5 87.4 101.7 92.7 C100.9 97.9 100.3 101.5 100.5 104.7 C100.7 108.0 102.5 110.8 102.9 112.0" fill="none" stroke="#f3c380" stroke-width="1.2" stroke-linecap="round"/>
<path d="M177.8 0.8 C180.2 3.2 187.9 10.9 192.3 15.3 C196.8 19.8 201.2 23.8 204.4 27.4 C207.6 31.0 205.6 34.7 211.7 37.1 C217.7 39.5 231.8 40.9 240.7 41.9 C249.5 42.9 256.8 42.3 264.8 43.1 C272.9 43.9 285.0 46.1 289.0 46.7" fill="none" stroke="#f3c380" stroke-width="1.2" stroke-linecap="round"/>
<path d="M240.7 17.7 C240.3 20.2 239.9 27.8 238.7 32.2 C237.5 36.7 235.1 40.7 233.4 44.3 C231.7 48.0 229.4 52.4 228.6 54.0" fill="none" stroke="#f3c380" stroke-width="1.2" stroke-linecap="round"/>
<path d="M289.0 66.1 C284.2 65.9 267.8 64.5 260.0 64.9 C252.1 65.3 245.3 65.9 241.9 68.5 C238.4 71.1 241.3 76.6 239.5 80.6 C237.6 84.6 235.6 89.0 231.0 92.7 C226.4 96.3 217.7 101.8 211.7 102.3 C205.6 102.8 202.0 96.4 194.7 95.6 C187.5 94.8 176.6 96.4 168.2 97.5 C159.7 98.6 154.9 99.9 144.0 102.3 C133.1 104.7 114.2 109.6 102.9 112.0 C91.6 114.4 85.6 115.1 76.3 116.8 C67.1 118.5 56.2 120.5 47.3 122.1 C38.5 123.8 27.2 125.8 23.2 126.5" fill="none" stroke="#f0a880" stroke-width="1.3" stroke-linecap="round"/>
<path d="M144.0 87.8 C140.8 88.6 131.1 91.5 124.7 92.7 C118.2 93.9 109.4 93.1 105.3 95.1 C101.3 97.1 101.3 103.1 100.5 104.7" fill="none" stroke="#f3c380" stroke-width="0.9" stroke-linecap="round"/>
<path d="M-1.0 8.1 C1.0 8.5 6.7 10.7 11.1 10.5 C15.5 10.3 22.4 8.7 25.6 6.9 C28.8 5.1 29.6 0.8 30.4 -0.4" fill="none" stroke="#f3c380" stroke-width="1" stroke-linecap="round"/>
<path d="M3.8 56.4 C4.6 59.6 8.1 68.9 8.7 75.7 C9.3 82.6 7.3 90.7 7.5 97.5 C7.7 104.3 8.9 111.8 9.9 116.8 C10.9 121.9 12.9 125.9 13.5 127.7" fill="none" stroke="#f3c380" stroke-width="1" stroke-linecap="round"/>
<path d="M144.0 102.3 C143.6 104.7 141.6 112.6 141.6 116.8 C141.6 121.1 143.6 125.9 144.0 127.7" fill="none" stroke="#f3c380" stroke-width="1" stroke-linecap="round"/>
<path d="M289.0 87.8 C286.6 88.6 278.5 89.8 274.5 92.7 C270.5 95.5 265.6 98.9 264.8 104.7 C264.0 110.6 268.9 123.9 269.7 127.7" fill="none" stroke="#f3c380" stroke-width="0.9" stroke-linecap="round"/>
<path d="M310.6 39.8 C311.4 37.4 313.1 29.3 315.5 25.2 C317.9 21.1 322.0 18.7 325.2 15.5 C328.5 12.2 332.1 8.4 335.0 5.7 C337.8 3.1 341.0 0.7 342.3 -0.4" fill="none" stroke="#f3c380" stroke-width="1.2" stroke-linecap="round"/>
<path d="M400.7 62.2 C403.1 60.7 409.6 55.5 415.3 53.2 C420.9 50.9 429.0 48.0 434.7 48.3 C440.4 48.6 445.3 53.2 449.3 54.9 C453.4 56.6 455.0 58.8 459.0 58.5 C463.1 58.2 468.0 53.7 473.6 53.2 C479.3 52.7 487.4 53.7 493.1 55.6 C498.8 57.5 502.8 60.8 507.7 64.6 C512.6 68.5 517.8 74.3 522.3 78.7 C526.8 83.1 530.4 86.4 534.5 90.9 C538.5 95.4 543.2 101.0 546.6 105.5 C550.1 109.9 553.7 115.6 555.2 117.7" fill="none" stroke="#f3c380" stroke-width="1.3" stroke-linecap="round"/>
<path d="M395.8 57.3 C397.4 54.4 402.7 45.6 405.5 39.8 C408.4 34.0 409.6 28.0 412.8 22.8 C416.1 17.5 422.1 12.0 425.0 8.2 C427.8 4.3 429.0 1.1 429.9 -0.4" fill="none" stroke="#e8b078" stroke-width="1.1" stroke-linecap="round"/>
<path d="M534.5 0.9 C533.7 4.1 533.1 14.2 529.6 20.3 C526.2 26.4 516.6 32.9 513.8 37.4 C511.0 41.8 511.2 43.0 512.6 47.1 C514.0 51.2 520.7 59.3 522.3 61.7" fill="none" stroke="#f3c380" stroke-width="1.1" stroke-linecap="round"/>
<path d="M400.7 69.0 C400.5 73.0 400.6 87.2 399.4 93.3 C398.3 99.4 394.4 99.6 393.8 105.5 C393.3 111.4 395.9 124.8 396.3 128.6" fill="none" stroke="#f3c380" stroke-width="1.1" stroke-linecap="round"/>
<path d="M571.0 73.9 C569.8 77.1 565.7 87.2 563.7 93.3 C561.6 99.4 559.6 104.5 558.8 110.4 C558.0 116.2 558.8 125.6 558.8 128.6" fill="none" stroke="#f3c380" stroke-width="1" stroke-linecap="round"/>
<path d="M315.5 78.7 C315.9 82.0 316.9 91.7 317.9 98.2 C318.9 104.7 321.2 112.6 321.6 117.7 C322.0 122.7 320.6 126.8 320.4 128.6" fill="none" stroke="#f3c380" stroke-width="1" stroke-linecap="round"/>
<path d="M279.0 61.7 C281.4 62.9 288.7 68.2 293.6 69.0 C298.5 69.8 303.7 66.6 308.2 66.6 C312.7 66.6 318.3 68.6 320.4 69.0" fill="none" stroke="#f3c380" stroke-width="1.3" stroke-linecap="round"/>
<path d="M283.9 76.3 C285.5 75.9 290.4 73.0 293.6 73.9 C296.8 74.7 300.1 80.3 303.3 81.2 C306.6 82.0 311.4 79.1 313.1 78.7" fill="none" stroke="#f5d58a" stroke-width="1" stroke-linecap="round"/>
<path d="M288.7 44.7 C290.4 46.3 296.0 50.3 298.5 54.4 C300.9 58.4 302.5 66.6 303.3 69.0" fill="none" stroke="#f5d58a" stroke-width="1" stroke-linecap="round"/>
<path d="M229.0 40.3 C231.0 40.7 237.1 41.3 241.1 42.7 C245.1 44.1 247.1 47.7 253.2 48.7 C259.2 49.8 271.7 48.3 277.3 48.7 C283.0 49.2 284.2 49.6 287.0 51.2 C289.8 52.8 293.0 57.2 294.2 58.4" fill="none" stroke="#f3c380" stroke-width="1.2" stroke-linecap="round"/>
<path d="M277.3 46.3 C278.9 45.1 286.2 41.1 287.0 39.1 C287.8 37.1 285.2 36.1 282.2 34.2 C279.1 32.4 273.1 30.6 268.9 28.2 C264.6 25.8 261.4 23.0 256.8 19.7 C252.2 16.5 245.7 11.9 241.1 8.9 C236.5 5.9 231.0 2.8 229.0 1.6" fill="none" stroke="#f3c380" stroke-width="1.1" stroke-linecap="round"/>
<path d="M319.6 0.4 C320.0 1.2 322.2 2.8 322.0 5.2 C321.8 7.7 319.4 11.5 318.4 14.9 C317.4 18.3 316.8 22.4 316.0 25.8 C315.2 29.2 315.2 32.2 313.6 35.5 C312.0 38.7 307.9 42.3 306.3 45.1 C304.7 47.9 304.3 51.2 303.9 52.4" fill="none" stroke="#f3c380" stroke-width="1.1" stroke-linecap="round"/>
<path d="M342.6 0.4 C342.2 1.4 341.8 3.8 340.2 6.5 C338.6 9.1 335.3 12.9 332.9 16.1 C330.5 19.3 328.5 22.4 325.7 25.8 C322.8 29.2 317.6 34.9 316.0 36.7" fill="none" stroke="#f3c380" stroke-width="1.1" stroke-linecap="round"/>
<path d="M329.3 18.5 C327.9 21.0 324.7 27.4 320.8 33.0 C317.0 38.7 308.7 49.2 306.3 52.4" fill="none" stroke="#8a8a8a" stroke-width="0.9" stroke-linecap="round"/>
<path d="M71.5 -0.4 C69.5 1.4 63.4 6.7 59.4 10.5 C55.4 14.3 51.4 19.4 47.3 22.6 C43.3 25.8 38.9 27.9 35.2 29.8 C31.6 31.8 29.2 33.6 25.6 34.2 C22.0 34.8 17.9 33.9 13.5 33.5 C9.1 33.1 1.4 32.0 -1.0 31.8" fill="none" stroke="#dd6d86" stroke-width="1.5" stroke-linecap="round"/>
<path d="M202.0 0.0 C204.3 1.3 210.3 6.0 216.0 7.7 C221.7 9.4 229.3 7.0 236.0 10.0 C242.7 13.0 249.3 20.4 256.0 26.0 C262.7 31.6 272.7 40.6 276.0 43.5" fill="none" stroke="#dd6d86" stroke-width="1.4" stroke-linecap="round"/>
<path d="M265.2 -0.8 C265.0 1.0 265.5 6.3 264.0 10.1 C262.6 13.9 258.6 18.9 256.8 22.2 C255.0 25.4 253.5 25.4 253.2 29.4 C252.9 33.4 254.2 41.1 255.0 46.3 C255.8 51.6 257.2 57.9 258.0 60.8 C258.8 63.8 258.5 60.6 259.8 64.0 C261.1 67.4 263.4 76.6 266.0 81.0 C268.6 85.4 272.5 88.6 275.5 90.6 C278.5 92.6 282.6 92.6 284.0 93.0" fill="none" stroke="#dd6d86" stroke-width="1.4" stroke-linecap="round"/>
<path d="M283.9 92.8 C285.5 93.0 290.4 94.5 293.6 93.8 C296.8 93.1 300.1 90.2 303.3 88.5 C306.6 86.8 309.4 83.9 313.1 83.6 C316.7 83.3 321.6 85.3 325.2 86.5 C328.9 87.7 329.7 89.8 335.0 90.9 C340.2 92.0 352.0 91.3 356.9 93.3 C361.7 95.4 360.9 99.4 364.2 103.1 C367.4 106.7 372.3 112.7 376.3 115.2 C380.4 117.7 385.7 115.9 388.5 118.1 C391.3 120.4 392.5 126.9 393.4 128.6" fill="none" stroke="#dd6d86" stroke-width="1.6" stroke-linecap="round"/>
<path d="M279.0 103.1 C279.8 104.7 283.5 108.5 283.9 112.8 C284.3 117.0 281.8 126.0 281.4 128.6" fill="none" stroke="#dd6d86" stroke-width="1.4" stroke-linecap="round"/>
<path d="M275.2203963267279 37.48260028999517 l0.7 2 l2.3 1.2 v0.6 l-2.3 -0.5 l0 1.5 l0.8 0.7 h-3 l0.8 -0.7 l0 -1.5 l-2.3 0.5 v-0.6 l2.3 -1.2z" fill="#8461c4"/>
<text x="96.9" y="6.1" font-size="6.3" fill="#555" text-anchor="middle" stroke="#fff" stroke-width="1.2" stroke-opacity="0.7" paint-order="stroke" >Terme</text>
<text x="65.9" y="21.9" font-size="6.3" fill="#555" text-anchor="middle" stroke="#fff" stroke-width="1.2" stroke-opacity="0.7" paint-order="stroke" >Ponte Buggianese</text>
<text x="37.7" y="38.3" font-size="6.3" fill="#555" text-anchor="middle" stroke="#fff" stroke-width="1.2" stroke-opacity="0.7" paint-order="stroke" >epascio</text>
<text x="172.5" y="17.7" font-size="6.3" fill="#555" text-anchor="middle" stroke="#fff" stroke-width="1.2" stroke-opacity="0.7" paint-order="stroke" >Quarrata</text>
<text x="260.5" y="6.1" font-size="6.3" fill="#555" text-anchor="middle" stroke="#fff" stroke-width="1.2" stroke-opacity="0.7" paint-order="stroke" >Calenzano</text>
<text x="274.0" y="27.7" font-size="6.3" fill="#555" text-anchor="middle" stroke="#fff" stroke-width="1.2" stroke-opacity="0.7" paint-order="stroke" >Sesto Fiorentino</text>
<text x="191.6" y="39.0" font-size="6.3" fill="#555" text-anchor="middle" stroke="#fff" stroke-width="1.2" stroke-opacity="0.7" paint-order="stroke" >Carmignano</text>
<text x="149.3" y="55.9" font-size="6.3" fill="#555" text-anchor="middle" stroke="#fff" stroke-width="1.2" stroke-opacity="0.7" paint-order="stroke" >Vinci</text>
<text x="232.4" y="66.8" font-size="6.3" fill="#555" text-anchor="middle" stroke="#fff" stroke-width="1.2" stroke-opacity="0.7" paint-order="stroke" >Lastra a Signa</text>
<text x="126.8" y="74.5" font-size="6.3" fill="#555" text-anchor="middle" stroke="#fff" stroke-width="1.2" stroke-opacity="0.7" paint-order="stroke" >Cerreto Guidi</text>
<text x="192.8" y="87.1" font-size="6.3" fill="#555" text-anchor="middle" stroke="#fff" stroke-width="1.2" stroke-opacity="0.7" paint-order="stroke" >Montelupo</text>
<text x="192.8" y="95.3" font-size="6.3" fill="#555" text-anchor="middle" stroke="#fff" stroke-width="1.2" stroke-opacity="0.7" paint-order="stroke" >Fiorentino</text>
<text x="94.0" y="93.1" font-size="6.3" fill="#555" text-anchor="middle" stroke="#fff" stroke-width="1.2" stroke-opacity="0.7" paint-order="stroke" >Fucecchio</text>
<text x="158.0" y="99.9" font-size="6.3" fill="#555" text-anchor="middle" stroke="#fff" stroke-width="1.2" stroke-opacity="0.7" paint-order="stroke" >Empoli</text>
<text x="65.0" y="108.9" font-size="6.3" fill="#555" text-anchor="middle" stroke="#fff" stroke-width="1.2" stroke-opacity="0.7" paint-order="stroke" >Castelfranco</text>
<text x="65.0" y="116.8" font-size="6.3" fill="#555" text-anchor="middle" stroke="#fff" stroke-width="1.2" stroke-opacity="0.7" paint-order="stroke" >di Sotto</text>
<text x="113.5" y="124.8" font-size="6.3" fill="#555" text-anchor="middle" stroke="#fff" stroke-width="1.2" stroke-opacity="0.7" paint-order="stroke" >San Miniato</text>
<text x="287.1" y="121.7" font-size="6.3" fill="#555" text-anchor="start" stroke="#fff" stroke-width="1.2" stroke-opacity="0.7" paint-order="stroke" >Im</text>
<text x="48.5" y="60.8" font-size="5.8" fill="#5f9a55" text-anchor="middle" stroke="#fff" stroke-width="1.2" stroke-opacity="0.7" paint-order="stroke" font-style="italic">Riserva</text>
<text x="48.5" y="67.8" font-size="5.8" fill="#5f9a55" text-anchor="middle" stroke="#fff" stroke-width="1.2" stroke-opacity="0.7" paint-order="stroke" font-style="italic">delle Cerbaie</text>
<text x="48.5" y="75.0" font-size="5.8" fill="#5f9a55" text-anchor="middle" stroke="#fff" stroke-width="1.2" stroke-opacity="0.7" paint-order="stroke" font-style="italic">e del Padule</text>
<text x="48.5" y="82.3" font-size="5.8" fill="#5f9a55" text-anchor="middle" stroke="#fff" stroke-width="1.2" stroke-opacity="0.7" paint-order="stroke" font-style="italic">di Fucecchio</text>
<text x="319.1" y="43.0" font-size="6.3" fill="#555" text-anchor="middle" stroke="#fff" stroke-width="1.2" stroke-opacity="0.7" paint-order="stroke" >Fiesole</text>
<text x="301.4" y="67.3" font-size="8.6" fill="#444" text-anchor="middle" stroke="#fff" stroke-width="1.2" stroke-opacity="0.7" paint-order="stroke" >Firenze</text>
<text x="331.1" y="78.0" font-size="6.3" fill="#555" text-anchor="middle" stroke="#fff" stroke-width="1.2" stroke-opacity="0.7" paint-order="stroke" >Bagno a Ripoli</text>
<text x="384.1" y="64.4" font-size="6.3" fill="#555" text-anchor="middle" stroke="#fff" stroke-width="1.2" stroke-opacity="0.7" paint-order="stroke" >Pontassieve</text>
<text x="300.9" y="121.3" font-size="6.3" fill="#555" text-anchor="middle" stroke="#fff" stroke-width="1.2" stroke-opacity="0.7" paint-order="stroke" >Impruneta</text>
<text x="432.3" y="122.8" font-size="6.3" fill="#555" text-anchor="middle" stroke="#fff" stroke-width="1.2" stroke-opacity="0.7" paint-order="stroke" >Reggello</text>
<text x="548.6" y="115.2" font-size="6.3" fill="#555" text-anchor="start" stroke="#fff" stroke-width="1.2" stroke-opacity="0.7" paint-order="stroke" >Bibbien</text>
<text x="529.1" y="7.2" font-size="6.4" fill="#5f9a55" text-anchor="middle" stroke="#fff" stroke-width="1.2" stroke-opacity="0.7" paint-order="stroke" font-style="italic">Monte</text>
<text x="529.1" y="16.0" font-size="6.4" fill="#5f9a55" text-anchor="middle" stroke="#fff" stroke-width="1.2" stroke-opacity="0.7" paint-order="stroke" font-style="italic">Falterona</text>
<text x="529.1" y="25.2" font-size="6.4" fill="#5f9a55" text-anchor="middle" stroke="#fff" stroke-width="1.2" stroke-opacity="0.7" paint-order="stroke" font-style="italic">e Campigna</text>
<rect x="469" y="118.5" width="100" height="10.5" fill="#fff" fill-opacity="0.8"/>
<text x="472" y="126.6" font-size="6.9" fill="#333">© <tspan fill="#0078a8">OpenStreetMap</tspan> contributors</text>
<rect x="6.7" y="6.7" width="21.6" height="40" rx="3" fill="#fff" stroke="#000" stroke-opacity="0.25" stroke-width="1.4"/>
<path d="M7.5 26.7 h20" stroke="#ccc" stroke-width="0.7"/>
<path d="M14.2 16.7 h6.6 M17.5 13.4 v6.6 M14.4 36.5 h6.2" stroke="#000" stroke-width="1.3"/>
<rect x="6.9" y="53.6" width="15.8" height="15.8" rx="2.5" fill="#fff" stroke="#000" stroke-opacity="0.25" stroke-width="1.4"/>
<text x="14.8" y="64.6" font-size="8.6" font-weight="700" fill="#000" text-anchor="middle">10</text>
</svg><svg style="left:0;top:0" width="1200" height="575" viewBox="0 0 1200 575" font-family="Liberation Sans, sans-serif">
<g transform="translate(619.40,63.7)"><rect x="0" y="0" width="30.4" height="22" fill="#fff"/><rect x="1.4" y="1.4" width="27.599999999999998" height="19.2" fill="none" stroke="#d2d2d2" stroke-width="0.9" rx="1"/><path d="M9.2 1.5 V20.5" stroke="#999" stroke-width="0.5"/><path d="M3.4 6.199999999999999 h3.4 l-0.6 -1.6 l-1.1 -1.5 l-1.1 1.5z" fill="#111"/><path d="M3.4 10.5 h3.4 l-0.6 -1.6 l-1.1 -1.5 l-1.1 1.5z" fill="#111"/><path d="M3.4 14.799999999999999 h3.4 l-0.6 -1.6 l-1.1 -1.5 l-1.1 1.5z" fill="#111"/><path d="M3.4 19.1 h3.4 l-0.6 -1.6 l-1.1 -1.5 l-1.1 1.5z" fill="#111"/><rect x="10.2" y="3.2" width="18.8" height="15.8" fill="#808080"/><path d="M10.76 3.20 L22.98 19.00" stroke="#fff" stroke-width="2.4"/><path d="M18.47 12.68 L23.74 3.20" stroke="#fff" stroke-width="1.8"/><path d="M20.35 10.15 L29.00 5.41" stroke="#fff" stroke-width="1.9"/><path d="M10.20 13.94 L18.10 12.05" stroke="#fff" stroke-width="1.7"/></g>
<g transform="translate(651.23,63.7)"><rect x="0" y="0" width="30.4" height="22" fill="#fff"/><rect x="1.4" y="1.4" width="27.599999999999998" height="19.2" fill="none" stroke="#d2d2d2" stroke-width="0.9" rx="1"/><rect x="3.8" y="4.2" width="8.6" height="13.8" fill="#000"/><rect x="12.4" y="4.2" width="11.8" height="13.8" fill="#c8c8c8"/><path d="M16.2 3 V19" stroke="#aaa" stroke-width="0.4" stroke-dasharray="0.8 0.6"/></g>
<g transform="translate(683.06,63.7)"><rect x="0" y="0" width="30.4" height="22" fill="#fff"/><rect x="1.4" y="1.4" width="27.599999999999998" height="19.2" fill="none" stroke="#d2d2d2" stroke-width="0.9" rx="1"/><rect x="4.6" y="8.4" width="21" height="4.6" fill="#c8c8c8"/></g>
<g transform="translate(714.89,63.7)"><rect x="0" y="0" width="30.4" height="22" fill="#fff"/><rect x="1.4" y="1.4" width="27.599999999999998" height="19.2" fill="none" stroke="#d2d2d2" stroke-width="0.9" rx="1"/><text x="15.5" y="16.4" font-size="14" font-weight="400" fill="#111" text-anchor="middle"  stroke="#000" stroke-width="0.6" textLength="25" lengthAdjust="spacingAndGlyphs">0:00</text></g>
<g transform="translate(746.72,63.7)"><rect x="0" y="0" width="30.4" height="22" fill="#fff"/><rect x="1.4" y="1.4" width="27.599999999999998" height="19.2" fill="none" stroke="#d2d2d2" stroke-width="0.9" rx="1"/><rect x="6.4" y="3.5" width="18.2" height="6" fill="#c8c8c8"/><rect x="6.4" y="12.4" width="18.2" height="6.6" fill="#000"/><path d="M4 10.8 H26.5" stroke="#aaa" stroke-width="0.3" stroke-dasharray="0.8 0.6"/></g>
<g transform="translate(778.55,63.7)"><rect x="0" y="0" width="30.4" height="22" fill="#fff"/><rect x="1.4" y="1.4" width="27.599999999999998" height="19.2" fill="none" stroke="#d2d2d2" stroke-width="0.9" rx="1"/><path d="M9.2 1.5 V20.5" stroke="#999" stroke-width="0.5"/><path d="M2.2 4.6 h1.6 M4.6 5.199999999999999 l1.2 -1 l1.2 0.8 l1.2 -0.9" stroke="#777" stroke-width="0.45" fill="none"/><path d="M2.2 8.9 h1.6 M4.6 9.5 l1.2 -1 l1.2 0.8 l1.2 -0.9" stroke="#777" stroke-width="0.45" fill="none"/><path d="M2.2 13.2 h1.6 M4.6 13.799999999999999 l1.2 -1 l1.2 0.8 l1.2 -0.9" stroke="#777" stroke-width="0.45" fill="none"/><path d="M2.2 17.5 h1.6 M4.6 18.1 l1.2 -1 l1.2 0.8 l1.2 -0.9" stroke="#777" stroke-width="0.45" fill="none"/><rect x="10.2" y="3.2" width="18.8" height="15.8" fill="#808080"/><path d="M10.76 3.20 L22.98 19.00" stroke="#fff" stroke-width="2.4"/><path d="M18.47 12.68 L23.74 3.20" stroke="#fff" stroke-width="1.8"/><path d="M20.35 10.15 L29.00 5.41" stroke="#fff" stroke-width="1.9"/><path d="M10.20 13.94 L18.10 12.05" stroke="#fff" stroke-width="1.7"/></g>
<g transform="translate(810.38,63.7)"><rect x="0" y="0" width="30.4" height="22" fill="#fff"/><rect x="1.4" y="1.4" width="27.599999999999998" height="19.2" fill="none" stroke="#d2d2d2" stroke-width="0.9" rx="1"/><path d="M9.2 1.5 V20.5" stroke="#999" stroke-width="0.5"/><path d="M2.2 4.6 h1.6 M4.6 5.199999999999999 l1.2 -1 l1.2 0.8 l1.2 -0.9" stroke="#777" stroke-width="0.45" fill="none"/><path d="M2.2 8.9 h1.6 M4.6 9.5 l1.2 -1 l1.2 0.8 l1.2 -0.9" stroke="#777" stroke-width="0.45" fill="none"/><path d="M2.2 13.2 h1.6 M4.6 13.799999999999999 l1.2 -1 l1.2 0.8 l1.2 -0.9" stroke="#777" stroke-width="0.45" fill="none"/><path d="M2.2 17.5 h1.6 M4.6 18.1 l1.2 -1 l1.2 0.8 l1.2 -0.9" stroke="#777" stroke-width="0.45" fill="none"/><rect x="10.2" y="3.2" width="18.8" height="15.8" fill="#808080"/><path d="M10.76 3.20 L22.98 19.00" stroke="#fff" stroke-width="2.4"/><path d="M18.47 12.68 L23.74 3.20" stroke="#fff" stroke-width="1.8"/><path d="M20.35 10.15 L29.00 5.41" stroke="#fff" stroke-width="1.9"/><path d="M10.20 13.94 L18.10 12.05" stroke="#fff" stroke-width="1.7"/></g>
<g transform="translate(842.21,63.7)"><rect x="0" y="0" width="30.4" height="22" fill="#fff"/><rect x="1.4" y="1.4" width="27.599999999999998" height="19.2" fill="none" stroke="#d2d2d2" stroke-width="0.9" rx="1"/><rect x="5.8" y="3.2" width="19.2" height="16.2" fill="#fff" stroke="#555" stroke-width="1.3"/><path d="M5.8 8.4 H25" stroke="#555" stroke-width="1.1"/><rect x="8.6" y="4.9" width="9.6" height="1.9" fill="#fff" stroke="#777" stroke-width="0.6"/><path d="M20.8 4.8 l2.2 2.2 m0 -2.2 l-2.2 2.2" stroke="#555" stroke-width="0.8"/></g>
<g transform="translate(874.04,63.7)"><rect x="0" y="0" width="30.4" height="22" fill="#fff"/><rect x="1.4" y="1.4" width="27.599999999999998" height="19.2" fill="none" stroke="#d2d2d2" stroke-width="0.9" rx="1"/><rect x="5.4" y="4.4" width="20" height="14" fill="#808080"/><path d="M6.00 4.40 L19.00 18.40" stroke="#fff" stroke-width="2.4"/><path d="M14.20 12.80 L19.80 4.40" stroke="#fff" stroke-width="1.8"/><path d="M16.20 10.56 L25.40 6.36" stroke="#fff" stroke-width="1.9"/><path d="M5.40 13.92 L13.80 12.24" stroke="#fff" stroke-width="1.7"/><rect x="20.8" y="2.6" width="6" height="3.6" rx="0.8" fill="#fff"/><path d="M21.4 5.4 v-1 l0.8 -1.3 h2.6 l0.8 1.3 v1z" fill="#222"/></g>
<g transform="translate(905.87,63.7)"><rect x="0" y="0" width="30.4" height="22" fill="#fff"/><rect x="1.4" y="1.4" width="27.599999999999998" height="19.2" fill="none" stroke="#d2d2d2" stroke-width="0.9" rx="1"/><path d="M5.8 3.4 V18.6 H25" fill="none" stroke="#111" stroke-width="1"/><rect x="7.6" y="4.2" width="2.6" height="2.7" fill="none" stroke="#111" stroke-width="0.5" stroke-dasharray="0.7 0.5"/><rect x="11.0" y="4.2" width="2.6" height="2.7" fill="none" stroke="#111" stroke-width="0.5" stroke-dasharray="0.7 0.5"/><rect x="14.399999999999999" y="4.2" width="2.6" height="2.7" fill="none" stroke="#111" stroke-width="0.5" stroke-dasharray="0.7 0.5"/><rect x="17.799999999999997" y="4.2" width="2.6" height="2.7" fill="none" stroke="#111" stroke-width="0.5" stroke-dasharray="0.7 0.5"/><rect x="21.2" y="4.2" width="2.6" height="2.7" fill="none" stroke="#111" stroke-width="0.5" stroke-dasharray="0.7 0.5"/><rect x="7.6" y="7.7" width="2.6" height="2.7" fill="none" stroke="#111" stroke-width="0.5" stroke-dasharray="0.7 0.5"/><rect x="11.0" y="7.7" width="2.6" height="2.7" fill="none" stroke="#111" stroke-width="0.5" stroke-dasharray="0.7 0.5"/><rect x="14.399999999999999" y="7.7" width="2.6" height="2.7" fill="none" stroke="#111" stroke-width="0.5" stroke-dasharray="0.7 0.5"/><rect x="17.799999999999997" y="7.7" width="2.6" height="2.7" fill="none" stroke="#111" stroke-width="0.5" stroke-dasharray="0.7 0.5"/><rect x="21.2" y="7.7" width="2.6" height="2.7" fill="none" stroke="#111" stroke-width="0.5" stroke-dasharray="0.7 0.5"/><rect x="7.6" y="11.2" width="2.6" height="2.7" fill="none" stroke="#111" stroke-width="0.5" stroke-dasharray="0.7 0.5"/><rect x="11.0" y="11.2" width="2.6" height="2.7" fill="none" stroke="#111" stroke-width="0.5" stroke-dasharray="0.7 0.5"/><rect x="14.399999999999999" y="11.2" width="2.6" height="2.7" fill="none" stroke="#111" stroke-width="0.5" stroke-dasharray="0.7 0.5"/><rect x="17.799999999999997" y="11.2" width="2.6" height="2.7" fill="none" stroke="#111" stroke-width="0.5" stroke-dasharray="0.7 0.5"/><rect x="21.2" y="11.2" width="2.6" height="2.7" fill="none" stroke="#111" stroke-width="0.5" stroke-dasharray="0.7 0.5"/><rect x="7.6" y="14.7" width="2.6" height="2.7" fill="none" stroke="#111" stroke-width="0.5" stroke-dasharray="0.7 0.5"/><rect x="11.0" y="14.7" width="2.6" height="2.7" fill="none" stroke="#111" stroke-width="0.5" stroke-dasharray="0.7 0.5"/><rect x="14.399999999999999" y="14.7" width="2.6" height="2.7" fill="none" stroke="#111" stroke-width="0.5" stroke-dasharray="0.7 0.5"/><rect x="17.799999999999997" y="14.7" width="2.6" height="2.7" fill="none" stroke="#111" stroke-width="0.5" stroke-dasharray="0.7 0.5"/><rect x="21.2" y="14.7" width="2.6" height="2.7" fill="none" stroke="#111" stroke-width="0.5" stroke-dasharray="0.7 0.5"/><rect x="11" y="7.7" width="2.6" height="2.7" fill="#111"/><rect x="17.8" y="11.2" width="2.6" height="2.7" fill="#111"/><rect x="14.4" y="4.2" width="2.6" height="2.7" fill="#111"/><rect x="21.2" y="14.7" width="2.6" height="2.7" fill="#555"/><rect x="7.6" y="14.7" width="2.6" height="2.7" fill="#555"/></g>
<g transform="translate(937.70,63.7)"><rect x="0" y="0" width="30.4" height="22" fill="#fff"/><rect x="1.4" y="1.4" width="27.599999999999998" height="19.2" fill="none" stroke="#d2d2d2" stroke-width="0.9" rx="1"/><path d="M2.2 19.8 l3.4 -5.8 l4.2 3 l2.2 -1 l5.8 -2.8 l5.8 6.6z" fill="#8c8c8c"/><path d="M11.9 2.8 a4.5 4.5 0 0 1 4.5 4.5 c0 3 -4.5 8 -4.5 8 c0 0 -4.5 -5 -4.5 -8 a4.500 4.500 0 0 1 4.5 -4.5z" fill="#111" stroke="#fff" stroke-width="0.8"/><circle cx="11.9" cy="7.2" r="2" fill="#fff"/><circle cx="23.4" cy="7.4" r="3.6" fill="#fff" stroke="#222" stroke-width="0.7" stroke-dasharray="8 2"/><text x="23.4" y="8.7" font-size="3.6" font-weight="700" fill="#111" text-anchor="middle"  >3D</text></g>
<g transform="translate(969.53,63.7)"><rect x="0" y="0" width="30.4" height="22" fill="#fff"/><rect x="1.4" y="1.4" width="27.599999999999998" height="19.2" fill="none" stroke="#d2d2d2" stroke-width="0.9" rx="1"/><path d="M5.5 6.5 L25.5 4 L25 18.5 L5 17z" fill="#8e8e8e"/><path d="M7 6.5 L19 18 M13 11.5 L18.5 5 M14.5 10.5 L25.3 8 M5.2 12.5 L12 11.3" stroke="#e8e8e8" stroke-width="1.1"/></g>
<g transform="translate(1001.36,63.7)"><rect x="0" y="0" width="30.4" height="22" fill="#fff"/><rect x="1.4" y="1.4" width="27.599999999999998" height="19.2" fill="none" stroke="#d2d2d2" stroke-width="0.9" rx="1"/><circle cx="15.2" cy="7.2" r="5.4" fill="#111"/><path transform="translate(15.2,7.2) scale(0.75)" d="M2.6 -1.4 c0.1 2.6 -1.9 4.2 -4.2 4.2 c-0.9 0 -1.7 -0.2 -2.4 -0.7 c0.9 0.1 1.7 -0.2 2.3 -0.7 c-0.7 0 -1.3 -0.5 -1.5 -1.1 c0.3 0.1 0.5 0 0.7 0 c-0.8 -0.2 -1.3 -0.9 -1.3 -1.6 c0.2 0.1 0.5 0.2 0.7 0.2 c-0.7 -0.5 -0.9 -1.4 -0.5 -2.1 c0.8 1 2 1.6 3.3 1.7 c-0.3 -1.1 0.6 -2 1.6 -2 c0.5 0 0.9 0.2 1.2 0.5 c0.4 -0.1 0.7 -0.2 1 -0.4 c-0.1 0.4 -0.4 0.7 -0.7 0.9 c0.3 0 0.6 -0.1 0.9 -0.2 c-0.2 0.3 -0.5 0.6 -0.8 0.8z" fill="#fff"/><text x="15.6" y="15" font-size="5.4" font-weight="400" fill="#111" text-anchor="middle" font-style="italic" textLength="22" lengthAdjust="spacingAndGlyphs" stroke="#fff" stroke-width="0.8" paint-order="stroke">Vigilance</text><text x="15.6" y="20.6" font-size="5.4" font-weight="400" fill="#111" text-anchor="middle" font-style="italic" textLength="23.4" lengthAdjust="spacingAndGlyphs">Real Time</text></g>
<g transform="translate(1033.19,63.7)"><rect x="0" y="0" width="30.4" height="22" fill="#fff"/><rect x="1.4" y="1.4" width="27.599999999999998" height="19.2" fill="none" stroke="#d2d2d2" stroke-width="0.9" rx="1"/><circle cx="15" cy="8" r="5.6" fill="#111"/><path transform="translate(15,8) scale(0.7777777777777777)" d="M2.6 -1.4 c0.1 2.6 -1.9 4.2 -4.2 4.2 c-0.9 0 -1.7 -0.2 -2.4 -0.7 c0.9 0.1 1.7 -0.2 2.3 -0.7 c-0.7 0 -1.3 -0.5 -1.5 -1.1 c0.3 0.1 0.5 0 0.7 0 c-0.8 -0.2 -1.3 -0.9 -1.3 -1.6 c0.2 0.1 0.5 0.2 0.7 0.2 c-0.7 -0.5 -0.9 -1.4 -0.5 -2.1 c0.8 1 2 1.6 3.3 1.7 c-0.3 -1.1 0.6 -2 1.6 -2 c0.5 0 0.9 0.2 1.2 0.5 c0.4 -0.1 0.7 -0.2 1 -0.4 c-0.1 0.4 -0.4 0.7 -0.7 0.9 c0.3 0 0.6 -0.1 0.9 -0.2 c-0.2 0.3 -0.5 0.6 -0.8 0.8z" fill="#fff"/><text x="15.3" y="19.4" font-size="5.4" font-weight="400" fill="#111" text-anchor="middle" font-style="italic" textLength="21.6" lengthAdjust="spacingAndGlyphs">Vigilance</text></g>
<g transform="translate(1065.02,63.7)"><rect x="0" y="0" width="30.4" height="22" fill="#fff"/><rect x="1.4" y="1.4" width="27.599999999999998" height="19.2" fill="none" stroke="#d2d2d2" stroke-width="0.9" rx="1"/><path d="M21.0 6.2 h7.6 M24.8 2.4000000000000004 v7.6" stroke="#c4c4c4" stroke-width="2.2"/><rect x="3.4" y="12.6" width="22.2" height="6.4" fill="#111"/><path d="M3.4 16 h22.2 M9 12.6 v6.4 M14.5 12.6 v6.4 M20 12.6 v6.4" stroke="#fff" stroke-width="0.6"/><rect x="9.3" y="13" width="4.9" height="2.6" fill="#888"/><rect x="14.8" y="13" width="4.9" height="2.6" fill="#bbb"/><rect x="20.3" y="13" width="5" height="2.6" fill="#eee"/><rect x="4" y="16.5" width="21" height="1.6" fill="#fff"/><path d="M9 16 v3 M14.5 16 v3 M20 16 v3" stroke="#111" stroke-width="0.6"/></g>
<g transform="translate(1096.85,63.7)"><rect x="0" y="0" width="30.4" height="22" fill="#fff"/><rect x="1.4" y="1.4" width="27.599999999999998" height="19.2" fill="none" stroke="#d2d2d2" stroke-width="0.9" rx="1"/><path d="M20.0 5 h7.6 M23.8 1.2000000000000002 v7.6" stroke="#c4c4c4" stroke-width="2.2"/><path d="M3 5 H25" stroke="#111" stroke-width="1"/><path d="M3 8 H25" stroke="#111" stroke-width="1"/><path d="M3 11 H25" stroke="#111" stroke-width="1"/><path d="M3 14 H25" stroke="#111" stroke-width="1"/><path d="M3 17 H25" stroke="#111" stroke-width="1"/><path d="M3 19.8 H25" stroke="#111" stroke-width="1"/><path d="M3 4.5 V20.3 M19 4.5 V20.3 M25 8 V20.3" stroke="#111" stroke-width="0.9"/></g>
<g transform="translate(1128.68,63.7)"><rect x="0" y="0" width="30.4" height="22" fill="#fff"/><rect x="1.4" y="1.4" width="27.599999999999998" height="19.2" fill="none" stroke="#d2d2d2" stroke-width="0.9" rx="1"/><path d="M5.2 16.8 A 10 10 0 0 1 20.6 7.4" fill="none" stroke="#000" stroke-width="2.6"/><path d="M20.6 7.4 A 10 10 0 0 1 25.2 16.8" fill="none" stroke="#d0d0d0" stroke-width="2.6"/></g>
<g transform="translate(619.40,87.0)"><rect x="0" y="0" width="30.4" height="22" fill="#fff"/><rect x="1.4" y="1.4" width="27.599999999999998" height="19.2" fill="none" stroke="#d2d2d2" stroke-width="0.9" rx="1"/><g transform="translate(14.6,11.6) scale(1.22) translate(-13.6,-12)"><path d="M12.2 18.6 l-2.6 -4.8 q-0.5 -1.2 0.7 -1.3 l1.9 1.5 v-5.6 q0 -1.1 1.1 -1.1 q1.1 0 1.1 1.1 v3.2 l3.3 0.7 q1.4 0.4 1.2 1.8 l-0.6 4.5z" fill="#000"/><circle cx="13.3" cy="7.3" r="2.4" fill="none" stroke="#555" stroke-width="0.6" stroke-dasharray="1 0.6"/></g></g>
<g transform="translate(651.23,87.0)"><rect x="0" y="0" width="30.4" height="22" fill="#fff"/><rect x="1.4" y="1.4" width="27.599999999999998" height="19.2" fill="none" stroke="#d2d2d2" stroke-width="0.9" rx="1"/><circle cx="14.2" cy="12.8" r="5.6" fill="#000"/><path d="M14.2 12.8 L18 8.6" stroke="#fff" stroke-width="1.3" stroke-linecap="round"/><path d="M7 11 A 8.3 8.3 0 0 1 22.6 12.6" fill="none" stroke="#000" stroke-width="1.8"/></g>
<g transform="translate(683.06,87.0)"><rect x="0" y="0" width="30.4" height="22" fill="#fff"/><rect x="1.4" y="1.4" width="27.599999999999998" height="19.2" fill="none" stroke="#d2d2d2" stroke-width="0.9" rx="1"/><path d="M9.2 1.5 V20.5" stroke="#999" stroke-width="0.5"/><path d="M5 2.8999999999999995 l1.5 1.7 l-1.5 1.7 l-1.5 -1.7z" fill="none" stroke="#999" stroke-width="0.5"/><path d="M5 7.2 l1.5 1.7 l-1.5 1.7 l-1.5 -1.7z" fill="none" stroke="#999" stroke-width="0.5"/><path d="M5 11.5 l1.5 1.7 l-1.5 1.7 l-1.5 -1.7z" fill="none" stroke="#999" stroke-width="0.5"/><path d="M5 15.8 l1.5 1.7 l-1.5 1.7 l-1.5 -1.7z" fill="none" stroke="#999" stroke-width="0.5"/><rect x="10.2" y="3.2" width="18.8" height="15.8" fill="#808080"/><path d="M10.76 3.20 L22.98 19.00" stroke="#fff" stroke-width="2.4"/><path d="M18.47 12.68 L23.74 3.20" stroke="#fff" stroke-width="1.8"/><path d="M20.35 10.15 L29.00 5.41" stroke="#fff" stroke-width="1.9"/><path d="M10.20 13.94 L18.10 12.05" stroke="#fff" stroke-width="1.7"/></g>
<g transform="translate(714.89,87.0)"><rect x="0" y="0" width="30.4" height="22" fill="#fff"/><rect x="1.4" y="1.4" width="27.599999999999998" height="19.2" fill="none" stroke="#d2d2d2" stroke-width="0.9" rx="1"/><rect x="10.4" y="2.6" width="1.3" height="1.3" fill="#111"/><rect x="12.9" y="2.6" width="1.3" height="1.3" fill="#111"/><rect x="15.4" y="2.6" width="1.3" height="1.3" fill="#111"/><rect x="17.9" y="2.6" width="1.3" height="1.3" fill="#111"/><rect x="10.4" y="5.1" width="1.3" height="1.3" fill="#111"/><rect x="12.9" y="5.1" width="1.3" height="1.3" fill="#111"/><rect x="15.4" y="5.1" width="1.3" height="1.3" fill="#111"/><rect x="17.9" y="5.1" width="1.3" height="1.3" fill="#111"/><rect x="10.4" y="7.6" width="1.3" height="1.3" fill="#111"/><rect x="12.9" y="7.6" width="1.3" height="1.3" fill="#111"/><rect x="15.4" y="7.6" width="1.3" height="1.3" fill="#111"/><rect x="17.9" y="7.6" width="1.3" height="1.3" fill="#111"/><path d="M15.2 19.4 l-2.6 -3 q-0.5 -1.2 0.7 -1.1 l1.5 1 v-7.2 q0 -1 1 -1 q1 0 1 1 v3.8 l4.2 1.2 q1.2 0.4 1.1 1.6 l-0.3 3.7" fill="#fff" stroke="#111" stroke-width="1.2"/></g>
<g transform="translate(746.72,87.0)"><rect x="0" y="0" width="30.4" height="22" fill="#fff"/><rect x="1.4" y="1.4" width="27.599999999999998" height="19.2" fill="none" stroke="#d2d2d2" stroke-width="0.9" rx="1"/><rect x="11" y="2.4" width="8.4" height="17.2" rx="4.2" fill="#858585" stroke="#666" stroke-width="0.5"/><circle cx="15.2" cy="6.8" r="3.8" fill="#fff" stroke="#888" stroke-width="0.5"/></g>
<g transform="translate(778.55,87.0)"><rect x="0" y="0" width="30.4" height="22" fill="#fff"/><rect x="1.4" y="1.4" width="27.599999999999998" height="19.2" fill="none" stroke="#d2d2d2" stroke-width="0.9" rx="1"/><path d="M9.2 1.5 V20.5" stroke="#999" stroke-width="0.5"/><path d="M3.2 5.8 h3.6 l-1.8 -2.6z" fill="#777"/><path d="M3 2.8 h4" stroke="#999" stroke-width="0.4"/><path d="M3.2 10.1 h3.6 l-1.8 -2.6z" fill="#777"/><path d="M3 7.1000000000000005 h4" stroke="#999" stroke-width="0.4"/><path d="M3.2 14.399999999999999 h3.6 l-1.8 -2.6z" fill="#777"/><path d="M3 11.399999999999999 h4" stroke="#999" stroke-width="0.4"/><path d="M3.2 18.7 h3.6 l-1.8 -2.6z" fill="#777"/><path d="M3 15.7 h4" stroke="#999" stroke-width="0.4"/><rect x="10.2" y="3.2" width="18.8" height="15.8" fill="#808080"/><path d="M10.76 3.20 L22.98 19.00" stroke="#fff" stroke-width="2.4"/><path d="M18.47 12.68 L23.74 3.20" stroke="#fff" stroke-width="1.8"/><path d="M20.35 10.15 L29.00 5.41" stroke="#fff" stroke-width="1.9"/><path d="M10.20 13.94 L18.10 12.05" stroke="#fff" stroke-width="1.7"/></g>
<g transform="translate(810.38,87.0)"><rect x="0" y="0" width="30.4" height="22" fill="#fff"/><rect x="1.4" y="1.4" width="27.599999999999998" height="19.2" fill="none" stroke="#d2d2d2" stroke-width="0.9" rx="1"/><circle cx="20.2" cy="6.4" r="3" fill="#fff" stroke="#111" stroke-width="1"/><g stroke="#111" stroke-width="0.8"><path d="M20.2 1.6 v1.2 M25 6.4 h-1.2 M23.6 3 l-0.8 0.8 M16.8 3 l0.8 0.8 M23.6 9.8 l-0.8 -0.8"/></g><g fill="#000" stroke="#fff" stroke-width="0.5" paint-order="stroke"><circle cx="8" cy="15" r="4.3"/><circle cx="13.6" cy="11" r="5.6"/><circle cx="21.6" cy="14.6" r="4.8"/></g><g fill="#000"><circle cx="8" cy="15" r="4.3"/><circle cx="13.6" cy="11" r="5.6"/><circle cx="21.6" cy="14.6" r="4.8"/><rect x="8" y="13" width="13.6" height="6.3"/></g></g>
<g transform="translate(842.21,87.0)"><rect x="0" y="0" width="30.4" height="22" fill="#fff"/><rect x="1.4" y="1.4" width="27.599999999999998" height="19.2" fill="none" stroke="#d2d2d2" stroke-width="0.9" rx="1"/><path d="M6 3.8 H19.4 M6 3.8 V18.2 H23.4 V10.6" fill="none" stroke="#111" stroke-width="1.3"/><circle cx="12.2" cy="12.6" r="2.6" fill="#111"/><circle cx="12.2" cy="12.6" r="0.9" fill="#fff"/><g stroke="#111" stroke-width="1"><path d="M12.2 8.8 v7.6 M8.4 12.6 h7.6 M9.5 9.9 l5.4 5.4 M14.9 9.9 l-5.4 5.4"/></g><circle cx="12.2" cy="12.6" r="1" fill="#fff"/><path d="M15 7 l5.6 7.6" stroke="#111" stroke-width="1.3"/><path d="M19.4 6.4 l2 2.4 l4.2 -5.2" fill="none" stroke="#111" stroke-width="1"/></g>
<g transform="translate(874.04,87.0)"><rect x="0" y="0" width="30.4" height="22" fill="#fff"/><rect x="1.4" y="1.4" width="27.599999999999998" height="19.2" fill="none" stroke="#d2d2d2" stroke-width="0.9" rx="1"/><path d="M15.4 3.2 L24.4 18.4 H6.4z" fill="#000" stroke="#000" stroke-width="1.8" stroke-linejoin="round"/><path d="M15.4 7.6 v5.8" stroke="#fff" stroke-width="1.9" stroke-linecap="round"/><circle cx="15.4" cy="16.4" r="1.15" fill="#fff"/></g>
<g transform="translate(905.87,87.0)"><rect x="0" y="0" width="30.4" height="22" fill="#fff"/><rect x="1.4" y="1.4" width="27.599999999999998" height="19.2" fill="none" stroke="#d2d2d2" stroke-width="0.9" rx="1"/><rect x="5.4" y="4.4" width="20" height="14" fill="#808080"/><path d="M6.00 4.40 L19.00 18.40" stroke="#fff" stroke-width="2.4"/><path d="M14.20 12.80 L19.80 4.40" stroke="#fff" stroke-width="1.8"/><path d="M16.20 10.56 L25.40 6.36" stroke="#fff" stroke-width="1.9"/><path d="M5.40 13.92 L13.80 12.24" stroke="#fff" stroke-width="1.7"/><rect x="21" y="2.4" width="5.4" height="4.2" fill="#fff"/><rect x="21.8" y="3" width="3.8" height="3" fill="#222"/></g>
<g transform="translate(937.70,87.0)"><rect x="0" y="0" width="30.4" height="22" fill="#fff"/><rect x="1.4" y="1.4" width="27.599999999999998" height="19.2" fill="none" stroke="#d2d2d2" stroke-width="0.9" rx="1"/><path d="M20.8 8.6 V14 H8 V3 H18.4" fill="none" stroke="#111" stroke-width="1.3"/><path d="M10.8 8.2 l3.4 3.6 l8 -9" fill="none" stroke="#111" stroke-width="1.6"/><text x="15.2" y="20.2" font-size="5.4" font-weight="400" fill="#444" text-anchor="middle" font-style="italic" textLength="23" lengthAdjust="spacingAndGlyphs">Webpage</text></g>
<g transform="translate(969.53,87.0)"><rect x="0" y="0" width="30.4" height="22" fill="#fff"/><rect x="1.4" y="1.4" width="27.599999999999998" height="19.2" fill="none" stroke="#d2d2d2" stroke-width="0.9" rx="1"/><text x="15.4" y="15.5" font-size="12.8" font-weight="700" fill="#111" text-anchor="middle"  textLength="18" lengthAdjust="spacingAndGlyphs">XX</text></g>
<g transform="translate(1001.36,87.0)"><rect x="0" y="0" width="30.4" height="22" fill="#fff"/><rect x="1.4" y="1.4" width="27.599999999999998" height="19.2" fill="none" stroke="#d2d2d2" stroke-width="0.9" rx="1"/><rect x="2.6" y="6.6" width="5.8" height="8.8" fill="#000"/><rect x="8.4" y="6.6" width="10.4" height="8.8" fill="#fff" stroke="#ddd" stroke-width="0.3"/><rect x="18.8" y="6.6" width="8.8" height="8.8" fill="#c4c4c4"/><path d="M12 6 V16.5" stroke="#bbb" stroke-width="0.3" stroke-dasharray="0.8 0.6"/></g>
<g transform="translate(1033.19,87.0)"><rect x="0" y="0" width="30.4" height="22" fill="#fff"/><rect x="1.4" y="1.4" width="27.599999999999998" height="19.2" fill="none" stroke="#d2d2d2" stroke-width="0.9" rx="1"/><circle cx="15" cy="10.8" r="7.3" fill="#fff" stroke="#333" stroke-width="2.3"/><text x="15" y="13.3" font-size="7" font-weight="400" fill="#111" text-anchor="middle"  >50</text></g>
<g transform="translate(1065.02,87.0)"><rect x="0" y="0" width="30.4" height="22" fill="#fff"/><rect x="1.4" y="1.4" width="27.599999999999998" height="19.2" fill="none" stroke="#d2d2d2" stroke-width="0.9" rx="1"/><path d="M7.4 15.6 A 9.2 9.2 0 1 1 23.6 15.6" fill="none" stroke="#444" stroke-width="0.8"/><g stroke="#333" stroke-width="0.8"><path d="M8 12 l1.8 0.4 M9.8 7.4 l1.4 1.3 M15.5 4 v1.9 M21.2 7.4 l-1.4 1.3 M23 12 l-1.8 0.4 M12.2 4.9 l0.7 1.7 M18.8 4.9 l-0.7 1.7 M8.4 15.4 h1.6 M22.6 15.4 h-1.6"/></g><path d="M14.6 13.4 L19.8 7.6" stroke="#222" stroke-width="1.4" stroke-linecap="round"/><circle cx="14.8" cy="13.2" r="1.5" fill="#222"/></g>
<g transform="translate(1096.85,87.0)"><rect x="0" y="0" width="30.4" height="22" fill="#fff"/><rect x="1.4" y="1.4" width="27.599999999999998" height="19.2" fill="none" stroke="#d2d2d2" stroke-width="0.9" rx="1"/><path d="M1.6 8.4 q0 -1.4 1.4 -1.4 h4.6 q1.4 0 1.4 1.4 v6 h-0.8 v1.2 h-1.6 v-1.2 h-2.6 v1.2 h-1.6 v-1.2 h-0.8z" fill="#111"/><rect x="2.6" y="8.3" width="5.4" height="3" rx="0.5" fill="#fff"/><circle cx="3.4000000000000004" cy="13" r="0.65" fill="#fff"/><circle cx="7.199999999999999" cy="13" r="0.65" fill="#fff"/><path d="M11 8.4 q0 -1.4 1.4 -1.4 h4.6 q1.4 0 1.4 1.4 v6 h-0.8 v1.2 h-1.6 v-1.2 h-2.6 v1.2 h-1.6 v-1.2 h-0.8z" fill="#111"/><rect x="12" y="8.3" width="5.4" height="3" rx="0.5" fill="#fff"/><circle cx="12.8" cy="13" r="0.65" fill="#fff"/><circle cx="16.6" cy="13" r="0.65" fill="#fff"/><path d="M20.5 8.4 q0 -1.4 1.4 -1.4 h4.6 q1.4 0 1.4 1.4 v6 h-0.8 v1.2 h-1.6 v-1.2 h-2.6 v1.2 h-1.6 v-1.2 h-0.8z" fill="#111"/><rect x="21.5" y="8.3" width="5.4" height="3" rx="0.5" fill="#fff"/><circle cx="22.3" cy="13" r="0.65" fill="#fff"/><circle cx="26.1" cy="13" r="0.65" fill="#fff"/></g>
<g transform="translate(1128.68,87.0)"><rect x="0" y="0" width="30.4" height="22" fill="#fff"/><rect x="1.4" y="1.4" width="27.599999999999998" height="19.2" fill="none" stroke="#d2d2d2" stroke-width="0.9" rx="1"/><path d="M7.6 2.8 V18.4 H24.4" fill="none" stroke="#333" stroke-width="0.7"/><path d="M11.6 13.4 L15 8.8 L19 11.6 L23.6 5" fill="none" stroke="#222" stroke-width="0.9"/><g fill="#fff" stroke="#222" stroke-width="0.6"><circle cx="11.6" cy="13.4" r="1"/><circle cx="19" cy="11.6" r="1"/><circle cx="23.6" cy="5" r="1"/></g></g>
<g transform="translate(619.40,110.2)"><rect x="0" y="0" width="30.4" height="22" fill="#fff"/><rect x="1.4" y="1.4" width="27.599999999999998" height="19.2" fill="none" stroke="#d2d2d2" stroke-width="0.9" rx="1"/><path d="M6.5 3 V18.5 H23.5" fill="none" stroke="#222" stroke-width="1.1"/><path d="M10.5 14.5 L14 10 L17.8 13 L22.5 5.5" fill="none" stroke="#222" stroke-width="1.3"/><g fill="#fff" stroke="#222" stroke-width="0.7"><circle cx="10.5" cy="14.5" r="1.1"/><circle cx="14" cy="10" r="1.1"/><circle cx="17.8" cy="13" r="1.1"/><circle cx="22.5" cy="5.5" r="1.1"/></g></g>
<g transform="translate(651.23,110.2)"><rect x="0" y="0" width="30.4" height="22" fill="#fff"/><rect x="1.4" y="1.4" width="27.599999999999998" height="19.2" fill="none" stroke="#d2d2d2" stroke-width="0.9" rx="1"/><path d="M9.2 1.5 V20.5" stroke="#999" stroke-width="0.5"/><path d="M3.2 5.8 h3.6 l-1.8 -2.6z" fill="#777"/><path d="M3 2.8 h4" stroke="#999" stroke-width="0.4"/><path d="M3.2 10.1 h3.6 l-1.8 -2.6z" fill="#777"/><path d="M3 7.1000000000000005 h4" stroke="#999" stroke-width="0.4"/><path d="M3.2 14.399999999999999 h3.6 l-1.8 -2.6z" fill="#777"/><path d="M3 11.399999999999999 h4" stroke="#999" stroke-width="0.4"/><path d="M3.2 18.7 h3.6 l-1.8 -2.6z" fill="#777"/><path d="M3 15.7 h4" stroke="#999" stroke-width="0.4"/><rect x="10.2" y="3.2" width="18.8" height="15.8" fill="#808080"/><path d="M10.76 3.20 L22.98 19.00" stroke="#fff" stroke-width="2.4"/><path d="M18.47 12.68 L23.74 3.20" stroke="#fff" stroke-width="1.8"/><path d="M20.35 10.15 L29.00 5.41" stroke="#fff" stroke-width="1.9"/><path d="M10.20 13.94 L18.10 12.05" stroke="#fff" stroke-width="1.7"/></g>
<g transform="translate(683.06,110.2)"><rect x="0" y="0" width="30.4" height="22" fill="#fff"/><rect x="1.4" y="1.4" width="27.599999999999998" height="19.2" fill="none" stroke="#d2d2d2" stroke-width="0.9" rx="1"/><circle cx="15" cy="7.6" r="5.2" fill="#111"/><path transform="translate(15,7.6) scale(0.7222222222222222)" d="M2.6 -1.4 c0.1 2.6 -1.9 4.2 -4.2 4.2 c-0.9 0 -1.7 -0.2 -2.4 -0.7 c0.9 0.1 1.7 -0.2 2.3 -0.7 c-0.7 0 -1.3 -0.5 -1.5 -1.1 c0.3 0.1 0.5 0 0.7 0 c-0.8 -0.2 -1.3 -0.9 -1.3 -1.6 c0.2 0.1 0.5 0.2 0.7 0.2 c-0.7 -0.5 -0.9 -1.4 -0.5 -2.1 c0.8 1 2 1.6 3.3 1.7 c-0.3 -1.1 0.6 -2 1.6 -2 c0.5 0 0.9 0.2 1.2 0.5 c0.4 -0.1 0.7 -0.2 1 -0.4 c-0.1 0.4 -0.4 0.7 -0.7 0.9 c0.3 0 0.6 -0.1 0.9 -0.2 c-0.2 0.3 -0.5 0.6 -0.8 0.8z" fill="#fff"/><text x="15" y="20.4" font-size="8.2" font-weight="400" fill="#333" text-anchor="middle"  >@</text></g>
<g transform="translate(714.89,110.2)"><rect x="0" y="0" width="30.4" height="22" fill="#fff"/><rect x="1.4" y="1.4" width="27.599999999999998" height="19.2" fill="none" stroke="#d2d2d2" stroke-width="0.9" rx="1"/><circle cx="15" cy="7.6" r="5.2" fill="#111"/><path transform="translate(15,7.6) scale(0.7222222222222222)" d="M2.6 -1.4 c0.1 2.6 -1.9 4.2 -4.2 4.2 c-0.9 0 -1.7 -0.2 -2.4 -0.7 c0.9 0.1 1.7 -0.2 2.3 -0.7 c-0.7 0 -1.3 -0.5 -1.5 -1.1 c0.3 0.1 0.5 0 0.7 0 c-0.8 -0.2 -1.3 -0.9 -1.3 -1.6 c0.2 0.1 0.5 0.2 0.7 0.2 c-0.7 -0.5 -0.9 -1.4 -0.5 -2.1 c0.8 1 2 1.6 3.3 1.7 c-0.3 -1.1 0.6 -2 1.6 -2 c0.5 0 0.9 0.2 1.2 0.5 c0.4 -0.1 0.7 -0.2 1 -0.4 c-0.1 0.4 -0.4 0.7 -0.7 0.9 c0.3 0 0.6 -0.1 0.9 -0.2 c-0.2 0.3 -0.5 0.6 -0.8 0.8z" fill="#fff"/><text x="15" y="20.2" font-size="7.2" font-weight="400" fill="#333" text-anchor="middle"  >#</text></g>
<g transform="translate(746.72,110.2)"><rect x="0" y="0" width="30.4" height="22" fill="#fff"/><rect x="1.4" y="1.4" width="27.599999999999998" height="19.2" fill="none" stroke="#d2d2d2" stroke-width="0.9" rx="1"/><rect x="7.4" y="3.4" width="15.8" height="14.8" rx="0.8" fill="#fff" stroke="#000" stroke-width="1.8"/><rect x="7.4" y="3.4" width="15.8" height="3.8" fill="#000"/><path d="M18.6 5.2 h1 M20.8 5.2 h1" stroke="#fff" stroke-width="1"/><path d="M11 12.6 l1.6 -1.2 l1.4 0.9 l1.8 -1.1" fill="none" stroke="#111" stroke-width="0.7"/><path d="M17.6 12.8 l2.6 2.4 m0 -1.8 v1.8 h-1.8" fill="none" stroke="#111" stroke-width="0.9"/></g>
<g transform="translate(778.55,110.2)"><rect x="0" y="0" width="30.4" height="22" fill="#fff"/><rect x="1.4" y="1.4" width="27.599999999999998" height="19.2" fill="none" stroke="#d2d2d2" stroke-width="0.9" rx="1"/><rect x="2.2" y="3.8000000000000003" width="3.6" height="2.8" fill="#fff" stroke="#888" stroke-width="0.4"/><path d="M3 5.2 h2" stroke="#444" stroke-width="0.8"/><path d="M7.4 6.800000000000001 l3 -3 l3 2.6 l3.4 -3 l3.6 3.2 l3.4 -2.8 l3.4 2" fill="none" stroke="#555" stroke-width="0.6"/><path d="M7.4 4.0 l3.4 2.6 l3 -2.2 l3.4 2.8 l3.4 -3 l3.4 2.6 l3.2 -1.6" fill="none" stroke="#999" stroke-width="0.5"/><path d="M6.8 8.0 H28" stroke="#bbb" stroke-width="0.3"/><rect x="2.2" y="9.6" width="3.6" height="2.8" fill="#fff" stroke="#888" stroke-width="0.4"/><path d="M3 11 h2" stroke="#444" stroke-width="0.8"/><path d="M7.4 12.6 l3 -3 l3 2.6 l3.4 -3 l3.6 3.2 l3.4 -2.8 l3.4 2" fill="none" stroke="#555" stroke-width="0.6"/><path d="M7.4 9.8 l3.4 2.6 l3 -2.2 l3.4 2.8 l3.4 -3 l3.4 2.6 l3.2 -1.6" fill="none" stroke="#999" stroke-width="0.5"/><path d="M6.8 13.8 H28" stroke="#bbb" stroke-width="0.3"/><rect x="2.2" y="15.4" width="3.6" height="2.8" fill="#fff" stroke="#888" stroke-width="0.4"/><path d="M3 16.8 h2" stroke="#444" stroke-width="0.8"/><path d="M7.4 18.400000000000002 l3 -3 l3 2.6 l3.4 -3 l3.6 3.2 l3.4 -2.8 l3.4 2" fill="none" stroke="#555" stroke-width="0.6"/><path d="M7.4 15.600000000000001 l3.4 2.6 l3 -2.2 l3.4 2.8 l3.4 -3 l3.4 2.6 l3.2 -1.6" fill="none" stroke="#999" stroke-width="0.5"/><path d="M6.8 19.6 H28" stroke="#bbb" stroke-width="0.3"/></g>
<g transform="translate(810.38,110.2)"><rect x="0" y="0" width="30.4" height="22" fill="#fff"/><rect x="1.4" y="1.4" width="27.599999999999998" height="19.2" fill="none" stroke="#d2d2d2" stroke-width="0.9" rx="1"/><path d="M3 5.4 H27.4 M3 17 H27.4" stroke="#aaa" stroke-width="0.4"/><path transform="translate(4.6,6) scale(0.62)" d="M2.5 8 a2.5 2.5 0 0 1 0.3 -5 a3.6 3.6 0 0 1 6.8 -0.9 a3 3 0 0 1 1.2 5.9z" fill="#111"/><circle cx="9.8" cy="6.6" r="1.5" fill="#fff" stroke="#333" stroke-width="0.4"/><path transform="translate(5,13) scale(0.36)" d="M2.5 8 a2.5 2.5 0 0 1 0.3 -5 a3.6 3.6 0 0 1 6.8 -0.9 a3 3 0 0 1 1.2 5.9z" fill="#111"/><path transform="translate(12.6,13) scale(0.36)" d="M2.5 8 a2.5 2.5 0 0 1 0.3 -5 a3.6 3.6 0 0 1 6.8 -0.9 a3 3 0 0 1 1.2 5.9z" fill="#111"/><path transform="translate(19,13) scale(0.36)" d="M2.5 8 a2.5 2.5 0 0 1 0.3 -5 a3.6 3.6 0 0 1 6.8 -0.9 a3 3 0 0 1 1.2 5.9z" fill="#111"/><path transform="translate(23.6,13) scale(0.3)" d="M2.5 8 a2.5 2.5 0 0 1 0.3 -5 a3.6 3.6 0 0 1 6.8 -0.9 a3 3 0 0 1 1.2 5.9z" fill="#111"/></g>
<g transform="translate(842.21,110.2)"><rect x="0" y="0" width="30.4" height="22" fill="#fff"/><rect x="1.4" y="1.4" width="27.599999999999998" height="19.2" fill="none" stroke="#d2d2d2" stroke-width="0.9" rx="1"/><rect x="8.6" y="1.8" width="13.4" height="18.4" fill="#fff" stroke="#555" stroke-width="0.7"/><path transform="translate(10.6,2.8) scale(0.7)" d="M2.5 8 a2.5 2.5 0 0 1 0.3 -5 a3.6 3.6 0 0 1 6.8 -0.9 a3 3 0 0 1 1.2 5.9z" fill="#111"/><circle cx="18" cy="4" r="1.6" fill="#fff" stroke="#333" stroke-width="0.4"/><path transform="translate(12,10.2) scale(0.45)" d="M2.5 8 a2.5 2.5 0 0 1 0.3 -5 a3.6 3.6 0 0 1 6.8 -0.9 a3 3 0 0 1 1.2 5.9z" fill="#111"/><path transform="translate(12,15) scale(0.45)" d="M2.5 8 a2.5 2.5 0 0 1 0.3 -5 a3.6 3.6 0 0 1 6.8 -0.9 a3 3 0 0 1 1.2 5.9z" fill="#111"/><path d="M10 9.6 h8 M10 14.4 h8 M10 19 h8" stroke="#333" stroke-width="0.5"/></g>
<g transform="translate(874.04,110.2)"><rect x="0" y="0" width="30.4" height="22" fill="#fff"/><rect x="1.4" y="1.4" width="27.599999999999998" height="19.2" fill="none" stroke="#d2d2d2" stroke-width="0.9" rx="1"/><circle cx="15.8" cy="10.6" r="7.2" fill="#fff" stroke="#000" stroke-width="1.3"/><circle cx="15.8" cy="10.6" r="5.3" fill="#000"/></g>
<g transform="translate(905.87,110.2)"><rect x="0" y="0" width="30.4" height="22" fill="#fff"/><rect x="1.4" y="1.4" width="27.599999999999998" height="19.2" fill="none" stroke="#d2d2d2" stroke-width="0.9" rx="1"/><path d="M1.2 1.4 H7.2 V17 H28.8" fill="none" stroke="#000" stroke-width="2"/><rect x="12.4" y="6.4" width="10.6" height="9" fill="#fff" stroke="#000" stroke-width="1.9"/><path d="M17.7 6.4 V3.4 M15.9 3.2 h3.6" stroke="#000" stroke-width="1.8"/><circle cx="10.5" cy="19.4" r="2" fill="#fff" stroke="#000" stroke-width="1.5"/><circle cx="22.2" cy="19.4" r="2" fill="#fff" stroke="#000" stroke-width="1.5"/></g>
<g transform="translate(937.70,110.2)"><rect x="0" y="0" width="30.4" height="22" fill="#fff"/><rect x="1.4" y="1.4" width="27.599999999999998" height="19.2" fill="none" stroke="#d2d2d2" stroke-width="0.9" rx="1"/><rect x="2.9" y="6.6" width="24.6" height="8.2" fill="#fff" stroke="#000" stroke-width="1.7"/><path d="M19.2 6.6 V14.8" stroke="#000" stroke-width="1.2"/><path d="M21.2 9.2 h4.4 l-2.2 2.8z" fill="#000"/></g>
<g transform="translate(969.53,110.2)"><rect x="0" y="0" width="30.4" height="22" fill="#fff"/><rect x="1.4" y="1.4" width="27.599999999999998" height="19.2" fill="none" stroke="#d2d2d2" stroke-width="0.9" rx="1"/><rect x="2" y="1.6" width="26.4" height="18.8" fill="#fff"/><rect x="2.00" y="1.60" width="1.5" height="1.5" fill="#505050"/><rect x="3.47" y="1.60" width="1.5" height="1.5" fill="#606060"/><rect x="4.94" y="1.60" width="1.5" height="1.5" fill="#606060"/><rect x="6.41" y="1.60" width="1.5" height="1.5" fill="#333333"/><rect x="7.88" y="1.60" width="1.5" height="1.5" fill="#aaaaaa"/><rect x="9.35" y="1.60" width="1.5" height="1.5" fill="#666666"/><rect x="10.82" y="1.60" width="1.5" height="1.5" fill="#c0c0c0"/><rect x="12.29" y="1.60" width="1.5" height="1.5" fill="#505050"/><rect x="13.76" y="1.60" width="1.5" height="1.5" fill="#707070"/><rect x="15.23" y="1.60" width="1.5" height="1.5" fill="#666666"/><rect x="16.70" y="1.60" width="1.5" height="1.5" fill="#505050"/><rect x="18.17" y="1.60" width="1.5" height="1.5" fill="#333333"/><rect x="19.64" y="1.60" width="1.5" height="1.5" fill="#444444"/><rect x="21.11" y="1.60" width="1.5" height="1.5" fill="#606060"/><rect x="22.58" y="1.60" width="1.5" height="1.5" fill="#333333"/><rect x="24.05" y="1.60" width="1.5" height="1.5" fill="#777777"/><rect x="25.52" y="1.60" width="1.5" height="1.5" fill="#c0c0c0"/><rect x="26.99" y="1.60" width="1.5" height="1.5" fill="#999999"/><rect x="2.00" y="3.05" width="1.5" height="1.5" fill="#999999"/><rect x="3.47" y="3.05" width="1.5" height="1.5" fill="#606060"/><rect x="4.94" y="3.05" width="1.5" height="1.5" fill="#555555"/><rect x="6.41" y="3.05" width="1.5" height="1.5" fill="#444444"/><rect x="7.88" y="3.05" width="1.5" height="1.5" fill="#aaaaaa"/><rect x="9.35" y="3.05" width="1.5" height="1.5" fill="#707070"/><rect x="10.82" y="3.05" width="1.5" height="1.5" fill="#707070"/><rect x="12.29" y="3.05" width="1.5" height="1.5" fill="#999999"/><rect x="13.76" y="3.05" width="1.5" height="1.5" fill="#999999"/><rect x="15.23" y="3.05" width="1.5" height="1.5" fill="#505050"/><rect x="16.70" y="3.05" width="1.5" height="1.5" fill="#606060"/><rect x="18.17" y="3.05" width="1.5" height="1.5" fill="#888888"/><rect x="19.64" y="3.05" width="1.5" height="1.5" fill="#333333"/><rect x="21.11" y="3.05" width="1.5" height="1.5" fill="#606060"/><rect x="22.58" y="3.05" width="1.5" height="1.5" fill="#555555"/><rect x="24.05" y="3.05" width="1.5" height="1.5" fill="#888888"/><rect x="25.52" y="3.05" width="1.5" height="1.5" fill="#606060"/><rect x="26.99" y="3.05" width="1.5" height="1.5" fill="#c0c0c0"/><rect x="2.00" y="4.50" width="1.5" height="1.5" fill="#707070"/><rect x="3.47" y="4.50" width="1.5" height="1.5" fill="#606060"/><rect x="4.94" y="4.50" width="1.5" height="1.5" fill="#444444"/><rect x="6.41" y="4.50" width="1.5" height="1.5" fill="#707070"/><rect x="7.88" y="4.50" width="1.5" height="1.5" fill="#444444"/><rect x="9.35" y="4.50" width="1.5" height="1.5" fill="#444444"/><rect x="10.82" y="4.50" width="1.5" height="1.5" fill="#555555"/><rect x="12.29" y="4.50" width="1.5" height="1.5" fill="#999999"/><rect x="13.76" y="4.50" width="1.5" height="1.5" fill="#444444"/><rect x="15.23" y="4.50" width="1.5" height="1.5" fill="#606060"/><rect x="16.70" y="4.50" width="1.5" height="1.5" fill="#999999"/><rect x="18.17" y="4.50" width="1.5" height="1.5" fill="#888888"/><rect x="19.64" y="4.50" width="1.5" height="1.5" fill="#777777"/><rect x="21.11" y="4.50" width="1.5" height="1.5" fill="#333333"/><rect x="22.58" y="4.50" width="1.5" height="1.5" fill="#444444"/><rect x="24.05" y="4.50" width="1.5" height="1.5" fill="#505050"/><rect x="25.52" y="4.50" width="1.5" height="1.5" fill="#666666"/><rect x="26.99" y="4.50" width="1.5" height="1.5" fill="#777777"/><rect x="2.00" y="5.95" width="1.5" height="1.5" fill="#555555"/><rect x="3.47" y="5.95" width="1.5" height="1.5" fill="#888888"/><rect x="4.94" y="5.95" width="1.5" height="1.5" fill="#555555"/><rect x="6.41" y="5.95" width="1.5" height="1.5" fill="#999999"/><rect x="7.88" y="5.95" width="1.5" height="1.5" fill="#505050"/><rect x="9.35" y="5.95" width="1.5" height="1.5" fill="#606060"/><rect x="10.82" y="5.95" width="1.5" height="1.5" fill="#444444"/><rect x="12.29" y="5.95" width="1.5" height="1.5" fill="#505050"/><rect x="13.76" y="5.95" width="1.5" height="1.5" fill="#707070"/><rect x="15.23" y="5.95" width="1.5" height="1.5" fill="#666666"/><rect x="16.70" y="5.95" width="1.5" height="1.5" fill="#999999"/><rect x="18.17" y="5.95" width="1.5" height="1.5" fill="#505050"/><rect x="19.64" y="5.95" width="1.5" height="1.5" fill="#888888"/><rect x="21.11" y="5.95" width="1.5" height="1.5" fill="#999999"/><rect x="22.58" y="5.95" width="1.5" height="1.5" fill="#888888"/><rect x="24.05" y="5.95" width="1.5" height="1.5" fill="#606060"/><rect x="25.52" y="5.95" width="1.5" height="1.5" fill="#555555"/><rect x="26.99" y="5.95" width="1.5" height="1.5" fill="#707070"/><rect x="2.00" y="7.40" width="1.5" height="1.5" fill="#888888"/><rect x="3.47" y="7.40" width="1.5" height="1.5" fill="#888888"/><rect x="4.94" y="7.40" width="1.5" height="1.5" fill="#777777"/><rect x="6.41" y="7.40" width="1.5" height="1.5" fill="#333333"/><rect x="7.88" y="7.40" width="1.5" height="1.5" fill="#707070"/><rect x="9.35" y="7.40" width="1.5" height="1.5" fill="#888888"/><rect x="10.82" y="7.40" width="1.5" height="1.5" fill="#aaaaaa"/><rect x="12.29" y="7.40" width="1.5" height="1.5" fill="#606060"/><rect x="13.76" y="7.40" width="1.5" height="1.5" fill="#888888"/><rect x="15.23" y="7.40" width="1.5" height="1.5" fill="#888888"/><rect x="16.70" y="7.40" width="1.5" height="1.5" fill="#777777"/><rect x="18.17" y="7.40" width="1.5" height="1.5" fill="#999999"/><rect x="19.64" y="7.40" width="1.5" height="1.5" fill="#333333"/><rect x="21.11" y="7.40" width="1.5" height="1.5" fill="#707070"/><rect x="22.58" y="7.40" width="1.5" height="1.5" fill="#777777"/><rect x="24.05" y="7.40" width="1.5" height="1.5" fill="#707070"/><rect x="25.52" y="7.40" width="1.5" height="1.5" fill="#666666"/><rect x="26.99" y="7.40" width="1.5" height="1.5" fill="#707070"/><rect x="2.00" y="8.85" width="1.5" height="1.5" fill="#c0c0c0"/><rect x="3.47" y="8.85" width="1.5" height="1.5" fill="#606060"/><rect x="4.94" y="8.85" width="1.5" height="1.5" fill="#888888"/><rect x="6.41" y="8.85" width="1.5" height="1.5" fill="#666666"/><rect x="7.88" y="8.85" width="1.5" height="1.5" fill="#555555"/><rect x="9.35" y="8.85" width="1.5" height="1.5" fill="#c0c0c0"/><rect x="10.82" y="8.85" width="1.5" height="1.5" fill="#606060"/><rect x="12.29" y="8.85" width="1.5" height="1.5" fill="#666666"/><rect x="13.76" y="8.85" width="1.5" height="1.5" fill="#333333"/><rect x="15.23" y="8.85" width="1.5" height="1.5" fill="#666666"/><rect x="16.70" y="8.85" width="1.5" height="1.5" fill="#606060"/><rect x="18.17" y="8.85" width="1.5" height="1.5" fill="#777777"/><rect x="19.64" y="8.85" width="1.5" height="1.5" fill="#707070"/><rect x="21.11" y="8.85" width="1.5" height="1.5" fill="#606060"/><rect x="22.58" y="8.85" width="1.5" height="1.5" fill="#555555"/><rect x="24.05" y="8.85" width="1.5" height="1.5" fill="#505050"/><rect x="25.52" y="8.85" width="1.5" height="1.5" fill="#777777"/><rect x="26.99" y="8.85" width="1.5" height="1.5" fill="#707070"/><rect x="2.00" y="10.30" width="1.5" height="1.5" fill="#999999"/><rect x="3.47" y="10.30" width="1.5" height="1.5" fill="#333333"/><rect x="4.94" y="10.30" width="1.5" height="1.5" fill="#555555"/><rect x="6.41" y="10.30" width="1.5" height="1.5" fill="#aaaaaa"/><rect x="7.88" y="10.30" width="1.5" height="1.5" fill="#606060"/><rect x="9.35" y="10.30" width="1.5" height="1.5" fill="#999999"/><rect x="10.82" y="10.30" width="1.5" height="1.5" fill="#c0c0c0"/><rect x="12.29" y="10.30" width="1.5" height="1.5" fill="#c0c0c0"/><rect x="13.76" y="10.30" width="1.5" height="1.5" fill="#707070"/><rect x="15.23" y="10.30" width="1.5" height="1.5" fill="#777777"/><rect x="16.70" y="10.30" width="1.5" height="1.5" fill="#666666"/><rect x="18.17" y="10.30" width="1.5" height="1.5" fill="#606060"/><rect x="19.64" y="10.30" width="1.5" height="1.5" fill="#444444"/><rect x="21.11" y="10.30" width="1.5" height="1.5" fill="#333333"/><rect x="22.58" y="10.30" width="1.5" height="1.5" fill="#c0c0c0"/><rect x="24.05" y="10.30" width="1.5" height="1.5" fill="#666666"/><rect x="25.52" y="10.30" width="1.5" height="1.5" fill="#999999"/><rect x="26.99" y="10.30" width="1.5" height="1.5" fill="#333333"/><rect x="2.00" y="11.75" width="1.5" height="1.5" fill="#5c5c5c"/><rect x="3.47" y="11.75" width="1.5" height="1.5" fill="#898989"/><rect x="4.94" y="11.75" width="1.5" height="1.5" fill="#4e4e4e"/><rect x="6.41" y="11.75" width="1.5" height="1.5" fill="#a6a6a6"/><rect x="7.88" y="11.75" width="1.5" height="1.5" fill="#757575"/><rect x="9.35" y="11.75" width="1.5" height="1.5" fill="#6b6b6b"/><rect x="10.82" y="11.75" width="1.5" height="1.5" fill="#676767"/><rect x="12.29" y="11.75" width="1.5" height="1.5" fill="#4e4e4e"/><rect x="13.76" y="11.75" width="1.5" height="1.5" fill="#7a7a7a"/><rect x="15.23" y="11.75" width="1.5" height="1.5" fill="#5c5c5c"/><rect x="16.70" y="11.75" width="1.5" height="1.5" fill="#898989"/><rect x="18.17" y="11.75" width="1.5" height="1.5" fill="#6b6b6b"/><rect x="19.64" y="11.75" width="1.5" height="1.5" fill="#4e4e4e"/><rect x="21.11" y="11.75" width="1.5" height="1.5" fill="#757575"/><rect x="22.58" y="11.75" width="1.5" height="1.5" fill="#4e4e4e"/><rect x="24.05" y="11.75" width="1.5" height="1.5" fill="#7a7a7a"/><rect x="25.52" y="11.75" width="1.5" height="1.5" fill="#676767"/><rect x="26.99" y="11.75" width="1.5" height="1.5" fill="#4e4e4e"/><rect x="2.00" y="13.20" width="1.5" height="1.5" fill="#696969"/><rect x="3.47" y="13.20" width="1.5" height="1.5" fill="#828282"/><rect x="4.94" y="13.20" width="1.5" height="1.5" fill="#696969"/><rect x="6.41" y="13.20" width="1.5" height="1.5" fill="#696969"/><rect x="7.88" y="13.20" width="1.5" height="1.5" fill="#757575"/><rect x="9.35" y="13.20" width="1.5" height="1.5" fill="#c0c0c0"/><rect x="10.82" y="13.20" width="1.5" height="1.5" fill="#a7a7a7"/><rect x="12.29" y="13.20" width="1.5" height="1.5" fill="#b4b4b4"/><rect x="13.76" y="13.20" width="1.5" height="1.5" fill="#8a8a8a"/><rect x="15.23" y="13.20" width="1.5" height="1.5" fill="#9b9b9b"/><rect x="16.70" y="13.20" width="1.5" height="1.5" fill="#a7a7a7"/><rect x="18.17" y="13.20" width="1.5" height="1.5" fill="#828282"/><rect x="19.64" y="13.20" width="1.5" height="1.5" fill="#d0d0d0"/><rect x="21.11" y="13.20" width="1.5" height="1.5" fill="#757575"/><rect x="22.58" y="13.20" width="1.5" height="1.5" fill="#696969"/><rect x="24.05" y="13.20" width="1.5" height="1.5" fill="#8a8a8a"/><rect x="25.52" y="13.20" width="1.5" height="1.5" fill="#7e7e7e"/><rect x="26.99" y="13.20" width="1.5" height="1.5" fill="#696969"/><rect x="2.00" y="14.65" width="1.5" height="1.5" fill="#c1c1c1"/><rect x="3.47" y="14.65" width="1.5" height="1.5" fill="#a9a9a9"/><rect x="4.94" y="14.65" width="1.5" height="1.5" fill="#d9d9d9"/><rect x="6.41" y="14.65" width="1.5" height="1.5" fill="#d9d9d9"/><rect x="7.88" y="14.65" width="1.5" height="1.5" fill="#848484"/><rect x="9.35" y="14.65" width="1.5" height="1.5" fill="#969696"/><rect x="10.82" y="14.65" width="1.5" height="1.5" fill="#9f9f9f"/><rect x="12.29" y="14.65" width="1.5" height="1.5" fill="#c1c1c1"/><rect x="13.76" y="14.65" width="1.5" height="1.5" fill="#999999"/><rect x="15.23" y="14.65" width="1.5" height="1.5" fill="#b7b7b7"/><rect x="16.70" y="14.65" width="1.5" height="1.5" fill="#969696"/><rect x="18.17" y="14.65" width="1.5" height="1.5" fill="#adadad"/><rect x="19.64" y="14.65" width="1.5" height="1.5" fill="#d9d9d9"/><rect x="21.11" y="14.65" width="1.5" height="1.5" fill="#d9d9d9"/><rect x="22.58" y="14.65" width="1.5" height="1.5" fill="#969696"/><rect x="24.05" y="14.65" width="1.5" height="1.5" fill="#a9a9a9"/><rect x="25.52" y="14.65" width="1.5" height="1.5" fill="#b7b7b7"/><rect x="26.99" y="14.65" width="1.5" height="1.5" fill="#8e8e8e"/><rect x="2.00" y="16.10" width="1.5" height="1.5" fill="#e1e1e1"/><rect x="3.47" y="16.10" width="1.5" height="1.5" fill="#afafaf"/><rect x="4.94" y="16.10" width="1.5" height="1.5" fill="#cfcfcf"/><rect x="6.41" y="16.10" width="1.5" height="1.5" fill="#a7a7a7"/><rect x="7.88" y="16.10" width="1.5" height="1.5" fill="#bcbcbc"/><rect x="9.35" y="16.10" width="1.5" height="1.5" fill="#afafaf"/><rect x="10.82" y="16.10" width="1.5" height="1.5" fill="#c7c7c7"/><rect x="12.29" y="16.10" width="1.5" height="1.5" fill="#a7a7a7"/><rect x="13.76" y="16.10" width="1.5" height="1.5" fill="#a7a7a7"/><rect x="15.23" y="16.10" width="1.5" height="1.5" fill="#e1e1e1"/><rect x="16.70" y="16.10" width="1.5" height="1.5" fill="#b4b4b4"/><rect x="18.17" y="16.10" width="1.5" height="1.5" fill="#a7a7a7"/><rect x="19.64" y="16.10" width="1.5" height="1.5" fill="#b4b4b4"/><rect x="21.11" y="16.10" width="1.5" height="1.5" fill="#e1e1e1"/><rect x="22.58" y="16.10" width="1.5" height="1.5" fill="#adadad"/><rect x="24.05" y="16.10" width="1.5" height="1.5" fill="#adadad"/><rect x="25.52" y="16.10" width="1.5" height="1.5" fill="#c7c7c7"/><rect x="26.99" y="16.10" width="1.5" height="1.5" fill="#afafaf"/><rect x="2.00" y="17.55" width="1.5" height="1.5" fill="#cccccc"/><rect x="3.47" y="17.55" width="1.5" height="1.5" fill="#cfcfcf"/><rect x="4.94" y="17.55" width="1.5" height="1.5" fill="#cacaca"/><rect x="6.41" y="17.55" width="1.5" height="1.5" fill="#dddddd"/><rect x="7.88" y="17.55" width="1.5" height="1.5" fill="#cacaca"/><rect x="9.35" y="17.55" width="1.5" height="1.5" fill="#d7d7d7"/><rect x="10.82" y="17.55" width="1.5" height="1.5" fill="#c0c0c0"/><rect x="12.29" y="17.55" width="1.5" height="1.5" fill="#cccccc"/><rect x="13.76" y="17.55" width="1.5" height="1.5" fill="#dddddd"/><rect x="15.23" y="17.55" width="1.5" height="1.5" fill="#c6c6c6"/><rect x="16.70" y="17.55" width="1.5" height="1.5" fill="#cacaca"/><rect x="18.17" y="17.55" width="1.5" height="1.5" fill="#cfcfcf"/><rect x="19.64" y="17.55" width="1.5" height="1.5" fill="#cfcfcf"/><rect x="21.11" y="17.55" width="1.5" height="1.5" fill="#cfcfcf"/><rect x="22.58" y="17.55" width="1.5" height="1.5" fill="#c6c6c6"/><rect x="24.05" y="17.55" width="1.5" height="1.5" fill="#e2e2e2"/><rect x="25.52" y="17.55" width="1.5" height="1.5" fill="#eaeaea"/><rect x="26.99" y="17.55" width="1.5" height="1.5" fill="#e2e2e2"/><rect x="2.00" y="19.00" width="1.5" height="1.5" fill="#dddddd"/><rect x="3.47" y="19.00" width="1.5" height="1.5" fill="#e0e0e0"/><rect x="4.94" y="19.00" width="1.5" height="1.5" fill="#dcdcdc"/><rect x="6.41" y="19.00" width="1.5" height="1.5" fill="#e0e0e0"/><rect x="7.88" y="19.00" width="1.5" height="1.5" fill="#dcdcdc"/><rect x="9.35" y="19.00" width="1.5" height="1.5" fill="#e3e3e3"/><rect x="10.82" y="19.00" width="1.5" height="1.5" fill="#eaeaea"/><rect x="12.29" y="19.00" width="1.5" height="1.5" fill="#dfdfdf"/><rect x="13.76" y="19.00" width="1.5" height="1.5" fill="#e3e3e3"/><rect x="15.23" y="19.00" width="1.5" height="1.5" fill="#e3e3e3"/><rect x="16.70" y="19.00" width="1.5" height="1.5" fill="#eeeeee"/><rect x="18.17" y="19.00" width="1.5" height="1.5" fill="#e0e0e0"/><rect x="19.64" y="19.00" width="1.5" height="1.5" fill="#e7e7e7"/><rect x="21.11" y="19.00" width="1.5" height="1.5" fill="#eeeeee"/><rect x="22.58" y="19.00" width="1.5" height="1.5" fill="#dddddd"/><rect x="24.05" y="19.00" width="1.5" height="1.5" fill="#f2f2f2"/><rect x="25.52" y="19.00" width="1.5" height="1.5" fill="#dfdfdf"/><rect x="26.99" y="19.00" width="1.5" height="1.5" fill="#dfdfdf"/></g>
<g transform="translate(1001.36,110.2)"><rect x="0" y="0" width="30.4" height="22" fill="#fff"/><rect x="1.4" y="1.4" width="27.599999999999998" height="19.2" fill="none" stroke="#d2d2d2" stroke-width="0.9" rx="1"/><rect x="5.4" y="3.2" width="12.8" height="15" rx="0.8" fill="#fff" stroke="#111" stroke-width="1"/><path d="M7 5.6 h9.6 M7 7.8 h9.6 M7 10 h5.4 M7 12.2 h5.4 M7 14.4 h9.6 M7 16.4 h9.6" stroke="#111" stroke-width="0.8"/><path d="M13.2 9.4 h2.8 l3.4 -3 v9 l-3.4 -3 h-2.8z" fill="#111" stroke="#fff" stroke-width="0.7"/><path d="M21 8.6 q1.4 2.3 0 4.6 M22.8 7.2 q2.2 3.7 0 7.4 M24.4 6.2 q2.8 4.7 0 9.4" fill="none" stroke="#333" stroke-width="0.6"/></g>
<g transform="translate(619.40,145.5)"><rect x="0" y="0" width="30.4" height="22" fill="#fff"/><rect x="1.4" y="1.4" width="27.599999999999998" height="19.2" fill="none" stroke="#d2d2d2" stroke-width="0.9" rx="1"/><path d="M5 18.8 H25" stroke="#777" stroke-width="0.6"/><g stroke="#222" stroke-width="0.6"><rect x="8" y="8.4" width="2.8" height="10" rx="0.8" fill="#aaa"/><rect x="13" y="12.2" width="2.8" height="6.2" rx="0.8" fill="#777"/><rect x="18" y="3.4" width="3" height="15" rx="1" fill="#fff"/><rect x="18" y="9" width="3" height="9.4" rx="0.8" fill="#666"/></g></g>
<g transform="translate(651.23,145.5)"><rect x="0" y="0" width="30.4" height="22" fill="#fff"/><rect x="1.4" y="1.4" width="27.599999999999998" height="19.2" fill="none" stroke="#d2d2d2" stroke-width="0.9" rx="1"/><path d="M4.6 3 V19" stroke="#555" stroke-width="0.7"/><g stroke="#111" stroke-width="0.6"><rect x="5" y="4" width="11.8" height="2.8" rx="1" fill="#fff"/><rect x="5" y="9.4" width="8" height="2.8" rx="1" fill="#555"/><rect x="5" y="14.8" width="16.4" height="3" rx="1" fill="#999"/><rect x="16" y="14.8" width="5.4" height="3" rx="1" fill="#111"/></g></g>
<g transform="translate(683.06,145.5)"><rect x="0" y="0" width="30.4" height="22" fill="#fff"/><rect x="1.4" y="1.4" width="27.599999999999998" height="19.2" fill="none" stroke="#d2d2d2" stroke-width="0.9" rx="1"/><path d="M22.4 5.4 h5.2 M25 2.8000000000000003 v5.2" stroke="#c4c4c4" stroke-width="2.2"/><rect x="4.6" y="4" width="18.6" height="15" fill="#fff" stroke="#111" stroke-width="0.7"/><path d="M4.6 6.50 h18.6" stroke="#111" stroke-width="0.7"/><path d="M4.6 9.00 h18.6" stroke="#111" stroke-width="0.7"/><path d="M4.6 11.50 h18.6" stroke="#111" stroke-width="0.7"/><path d="M4.6 14.00 h18.6" stroke="#111" stroke-width="0.7"/><path d="M4.6 16.50 h18.6" stroke="#111" stroke-width="0.7"/><path d="M8.32 4 v15" stroke="#111" stroke-width="0.7"/><path d="M12.04 4 v15" stroke="#111" stroke-width="0.7"/><path d="M15.76 4 v15" stroke="#111" stroke-width="0.7"/><path d="M19.48 4 v15" stroke="#111" stroke-width="0.7"/><rect x="4.6" y="4" width="18.6" height="2.50" fill="#111"/></g>
<g transform="translate(714.89,145.5)"><rect x="0" y="0" width="30.4" height="22" fill="#fff"/><rect x="1.4" y="1.4" width="27.599999999999998" height="19.2" fill="none" stroke="#d2d2d2" stroke-width="0.9" rx="1"/><path d="M9.2 1.5 V20.5" stroke="#999" stroke-width="0.5"/><circle cx="3.2" cy="4.6" r="0.9" fill="#111"/><path d="M5 4.6 h3" stroke="#888" stroke-width="0.5"/><circle cx="3.2" cy="8.9" r="0.9" fill="#111"/><path d="M5 8.9 h3" stroke="#888" stroke-width="0.5"/><circle cx="3.2" cy="13.2" r="0.9" fill="#111"/><path d="M5 13.2 h3" stroke="#888" stroke-width="0.5"/><circle cx="3.2" cy="17.5" r="0.9" fill="#111"/><path d="M5 17.5 h3" stroke="#888" stroke-width="0.5"/><rect x="10.2" y="3.2" width="18.8" height="15.8" fill="#808080"/><path d="M10.76 3.20 L22.98 19.00" stroke="#fff" stroke-width="2.4"/><path d="M18.47 12.68 L23.74 3.20" stroke="#fff" stroke-width="1.8"/><path d="M20.35 10.15 L29.00 5.41" stroke="#fff" stroke-width="1.9"/><path d="M10.20 13.94 L18.10 12.05" stroke="#fff" stroke-width="1.7"/></g>
<g transform="translate(746.72,145.5)"><rect x="0" y="0" width="30.4" height="22" fill="#fff"/><rect x="1.4" y="1.4" width="27.599999999999998" height="19.2" fill="none" stroke="#d2d2d2" stroke-width="0.9" rx="1"/><path d="M9.2 1.5 V20.5" stroke="#999" stroke-width="0.5"/><path d="M2.2 4.6 h1.6 M4.6 5.199999999999999 l1.2 -1 l1.2 0.8 l1.2 -0.9" stroke="#777" stroke-width="0.45" fill="none"/><path d="M2.2 8.9 h1.6 M4.6 9.5 l1.2 -1 l1.2 0.8 l1.2 -0.9" stroke="#777" stroke-width="0.45" fill="none"/><path d="M2.2 13.2 h1.6 M4.6 13.799999999999999 l1.2 -1 l1.2 0.8 l1.2 -0.9" stroke="#777" stroke-width="0.45" fill="none"/><path d="M2.2 17.5 h1.6 M4.6 18.1 l1.2 -1 l1.2 0.8 l1.2 -0.9" stroke="#777" stroke-width="0.45" fill="none"/><rect x="10.6" y="4" width="17.4" height="14" fill="#fff" stroke="#222" stroke-width="1"/><path d="M10.6 7.4 H28" stroke="#222" stroke-width="0.8"/><rect x="13" y="5" width="9" height="1.2" fill="#888"/><path d="M25 4.9 l1.4 1.4 m0 -1.4 l-1.4 1.4" stroke="#222" stroke-width="0.5"/></g>
<g transform="translate(778.55,145.5)"><rect x="0" y="0" width="30.4" height="22" fill="#fff"/><rect x="1.4" y="1.4" width="27.599999999999998" height="19.2" fill="none" stroke="#d2d2d2" stroke-width="0.9" rx="1"/><path d="M9.2 1.5 V20.5" stroke="#999" stroke-width="0.5"/><path d="M2.2 4.6 h1.6 M4.6 5.199999999999999 l1.2 -1 l1.2 0.8 l1.2 -0.9" stroke="#777" stroke-width="0.45" fill="none"/><path d="M2.2 8.9 h1.6 M4.6 9.5 l1.2 -1 l1.2 0.8 l1.2 -0.9" stroke="#777" stroke-width="0.45" fill="none"/><path d="M2.2 13.2 h1.6 M4.6 13.799999999999999 l1.2 -1 l1.2 0.8 l1.2 -0.9" stroke="#777" stroke-width="0.45" fill="none"/><path d="M2.2 17.5 h1.6 M4.6 18.1 l1.2 -1 l1.2 0.8 l1.2 -0.9" stroke="#777" stroke-width="0.45" fill="none"/><path d="M9.8 19 l5 -6 l3 3.2 l3.6 -4.4 l7 7.2z" fill="#8a8a8a"/><path d="M17.6 2.4 a3.8 3.8 0 0 1 3.8 3.8 c0 2.4 -3.8 7 -3.8 7 c0 0 -3.8 -4.6 -3.8 -7 a3.8 3.8 0 0 1 3.8 -3.8z" fill="#111" stroke="#fff" stroke-width="0.6"/><circle cx="17.6" cy="6.1" r="1.6" fill="#fff"/><path d="M10 20 q3 -2 6 -0.6 t6 -0.4 t6 -0.4" fill="none" stroke="#666" stroke-width="0.4"/></g>
<g transform="translate(810.38,145.5)"><rect x="0" y="0" width="30.4" height="22" fill="#fff"/><rect x="1.4" y="1.4" width="27.599999999999998" height="19.2" fill="none" stroke="#d2d2d2" stroke-width="0.9" rx="1"/><rect x="4.8" y="4" width="21" height="14.6" fill="#808080"/><path d="M5.43 4.00 L19.08 18.60" stroke="#fff" stroke-width="2.4"/><path d="M14.04 12.76 L19.92 4.00" stroke="#fff" stroke-width="1.8"/><path d="M16.14 10.42 L25.80 6.04" stroke="#fff" stroke-width="1.9"/><path d="M4.80 13.93 L13.62 12.18" stroke="#fff" stroke-width="1.7"/><rect x="4.2" y="13.6" width="8.8" height="5.6" fill="#fff" fill-opacity="0.55"/><text x="8.6" y="19" font-size="6.6" font-weight="700" fill="#111" text-anchor="middle"  >3M</text></g>
<g transform="translate(842.21,145.5)"><rect x="0" y="0" width="30.4" height="22" fill="#fff"/><rect x="1.4" y="1.4" width="27.599999999999998" height="19.2" fill="none" stroke="#d2d2d2" stroke-width="0.9" rx="1"/><rect x="2.4" y="2.2" width="25.6" height="15.6" fill="#c4c4c4"/><path d="M3.17 2.20 L19.81 17.80" stroke="#fff" stroke-width="2.4"/><path d="M13.66 11.56 L20.83 2.20" stroke="#fff" stroke-width="1.8"/><path d="M16.22 9.06 L28.00 4.38" stroke="#fff" stroke-width="1.9"/><path d="M2.40 12.81 L13.15 10.94" stroke="#fff" stroke-width="1.7"/><path d="M3.4 11.4 L12.4 8.6 L15 12.6 L18.4 6.8 L27 4.8" fill="none" stroke="#e8281e" stroke-width="1.2"/><g fill="#e8281e"><circle cx="3.6" cy="11.4" r="1.3"/><circle cx="12.4" cy="8.6" r="1.2"/><circle cx="15" cy="12.6" r="1.3"/><circle cx="18.4" cy="6.8" r="1.3"/><circle cx="26.8" cy="4.8" r="1.3"/></g><path d="M3 18.4 H27.4" stroke="#fff" stroke-width="0.6" stroke-dasharray="1 0.6"/></g>
<g transform="translate(874.04,145.5)"><rect x="0" y="0" width="30.4" height="22" fill="#fff"/><rect x="1.4" y="1.4" width="27.599999999999998" height="19.2" fill="none" stroke="#d2d2d2" stroke-width="0.9" rx="1"/><path d="M6.4 2.8 V18.8 H24" fill="none" stroke="#2a2350" stroke-width="1.3"/><path d="M7 17.6 C10 15 11 4.6 14 4.6 C17.6 4.6 18 15 23 16.6" fill="none" stroke="#2a2350" stroke-width="1.1"/><path d="M7 12 C10 11 11 14 13 12 C15 9 17 7.4 19 8.6 C21 10 21 14 23.6 15" fill="none" stroke="#2a2350" stroke-width="1"/></g>
<g transform="translate(905.87,145.5)"><rect x="0" y="0" width="30.4" height="22" fill="#fff"/><rect x="1.4" y="1.4" width="27.599999999999998" height="19.2" fill="none" stroke="#d2d2d2" stroke-width="0.9" rx="1"/><path d="M6 2.8 V18.8 H24" fill="none" stroke="#2a2350" stroke-width="1.3"/><path d="M6.6 9.6 C9 9 10 13 13 12.6 S18 9 20 10.6 S24 10 25.6 9 V18.2 H6.6z" fill="#d6d6d6"/><path d="M6.6 13 C9 12 11 15.4 14 14.8 S19 13 21 14 S24 13.4 25.6 13 V18.2 H6.6z" fill="#a6a6a6"/><path d="M6.6 15.8 C10 15 12 17 15 16.6 S21 16 25.6 16.2 V18.2 H6.6z" fill="#555"/><rect x="6.6" y="17" width="17.4" height="1.9" fill="#111"/></g>
<g transform="translate(937.70,145.5)"><rect x="0" y="0" width="30.4" height="22" fill="#fff"/><rect x="1.4" y="1.4" width="27.599999999999998" height="19.2" fill="none" stroke="#d2d2d2" stroke-width="0.9" rx="1"/><path d="M9.2 1.5 V20.5" stroke="#999" stroke-width="0.5"/><circle cx="3.2" cy="4.6" r="0.9" fill="#111"/><path d="M5 4.6 h3" stroke="#888" stroke-width="0.5"/><circle cx="3.2" cy="8.9" r="0.9" fill="#111"/><path d="M5 8.9 h3" stroke="#888" stroke-width="0.5"/><circle cx="3.2" cy="13.2" r="0.9" fill="#111"/><path d="M5 13.2 h3" stroke="#888" stroke-width="0.5"/><circle cx="3.2" cy="17.5" r="0.9" fill="#111"/><path d="M5 17.5 h3" stroke="#888" stroke-width="0.5"/><rect x="10.2" y="3.2" width="18.8" height="15.8" fill="#808080"/><path d="M10.76 3.20 L22.98 19.00" stroke="#fff" stroke-width="2.4"/><path d="M18.47 12.68 L23.74 3.20" stroke="#fff" stroke-width="1.8"/><path d="M20.35 10.15 L29.00 5.41" stroke="#fff" stroke-width="1.9"/><path d="M10.20 13.94 L18.10 12.05" stroke="#fff" stroke-width="1.7"/><text x="18.4" y="14.8" font-size="6.4" font-weight="700" fill="#111" text-anchor="middle" font-style="italic" >WFS</text></g>
<g transform="translate(969.53,145.5)"><rect x="0" y="0" width="30.4" height="22" fill="#fff"/><rect x="1.4" y="1.4" width="27.599999999999998" height="19.2" fill="none" stroke="#d2d2d2" stroke-width="0.9" rx="1"/><path d="M9.2 1.5 V20.5" stroke="#999" stroke-width="0.5"/><circle cx="3.2" cy="4.6" r="0.9" fill="#111"/><path d="M5 4.6 h3" stroke="#888" stroke-width="0.5"/><circle cx="3.2" cy="8.9" r="0.9" fill="#111"/><path d="M5 8.9 h3" stroke="#888" stroke-width="0.5"/><circle cx="3.2" cy="13.2" r="0.9" fill="#111"/><path d="M5 13.2 h3" stroke="#888" stroke-width="0.5"/><circle cx="3.2" cy="17.5" r="0.9" fill="#111"/><path d="M5 17.5 h3" stroke="#888" stroke-width="0.5"/><rect x="10.2" y="3.2" width="18.8" height="15.8" fill="#808080"/><path d="M10.76 3.20 L22.98 19.00" stroke="#fff" stroke-width="2.4"/><path d="M18.47 12.68 L23.74 3.20" stroke="#fff" stroke-width="1.8"/><path d="M20.35 10.15 L29.00 5.41" stroke="#fff" stroke-width="1.9"/><path d="M10.20 13.94 L18.10 12.05" stroke="#fff" stroke-width="1.7"/><text x="18.8" y="5.6" font-size="5.4" font-weight="700" fill="#111" text-anchor="middle" font-style="italic" >Multi-</text><text x="18.8" y="12" font-size="5.4" font-weight="700" fill="#111" text-anchor="middle" font-style="italic" >Data</text><text x="18.8" y="18.6" font-size="5.4" font-weight="700" fill="#111" text-anchor="middle" font-style="italic" >Map</text></g>
<g transform="translate(1001.36,145.5)"><rect x="0" y="0" width="30.4" height="22" fill="#fff"/><rect x="1.4" y="1.4" width="27.599999999999998" height="19.2" fill="none" stroke="#d2d2d2" stroke-width="0.9" rx="1"/><text transform="translate(6.8,17.6) rotate(-90)" font-size="5.2" font-weight="700" fill="#111" textLength="13.4" lengthAdjust="spacingAndGlyphs">TECH</text><rect x="9.6" y="3.2" width="19.2" height="15.8" fill="#808080"/><path d="M10.18 3.20 L22.66 19.00" stroke="#fff" stroke-width="2.4"/><path d="M18.05 12.68 L23.42 3.20" stroke="#fff" stroke-width="1.8"/><path d="M19.97 10.15 L28.80 5.41" stroke="#fff" stroke-width="1.9"/><path d="M9.60 13.94 L17.66 12.05" stroke="#fff" stroke-width="1.7"/></g>
<g transform="translate(1033.19,145.5)"><rect x="0" y="0" width="30.4" height="22" fill="#fff"/><rect x="1.4" y="1.4" width="27.599999999999998" height="19.2" fill="none" stroke="#d2d2d2" stroke-width="0.9" rx="1"/><path d="M16.4 10.9 L6.61 11.24 A9.8 9.8 0 0 1 19.43 1.58z" fill="#8a8a8a"/><circle cx="16.4" cy="10.9" r="5.7" fill="#fff"/><path d="M16.4 10.9 L8.20 11.19 A8.2 8.2 0 0 1 18.93 3.10z" fill="#8a8a8a" fill-opacity="0.0"/><circle cx="16.4" cy="10.9" r="0" fill="none"/><path d="M19.25 4.51 A7 7 0 1 1 9.47 11.87" fill="none" stroke="#111" stroke-width="1.8" stroke-dasharray="6.5 1.1"/><circle cx="16.4" cy="10.9" r="4.2" fill="none" stroke="#111" stroke-width="1.7" stroke-dasharray="4.6 0.9"/><circle cx="16.4" cy="10.9" r="1.7" fill="#111"/></g>
<g transform="translate(1065.02,145.5)"><rect x="0" y="0" width="30.4" height="22" fill="#fff"/><rect x="1.4" y="1.4" width="27.599999999999998" height="19.2" fill="none" stroke="#d2d2d2" stroke-width="0.9" rx="1"/><g fill="none" stroke="#888" stroke-width="0.45"><path d="M15.2 4 L22.4 9.2 L19.6 17.8 H10.8 L8 9.2z"/><path d="M15.2 6.6 L19.8 10 L18 15.6 H12.4 L10.6 10z"/><path d="M15.2 4 V11.6 L22.4 9.2 M15.2 11.6 L19.6 17.8 M15.2 11.6 L10.8 17.8 M15.2 11.6 L8 9.2"/></g><path d="M15.2 5.6 L20.6 10.4 L17.4 15.2 L11.6 16.6 L10.8 9.8z" fill="#bbb" fill-opacity="0.5" stroke="#555" stroke-width="0.6"/></g>
<g transform="translate(1096.85,145.5)"><rect x="0" y="0" width="30.4" height="22" fill="#fff"/><rect x="1.4" y="1.4" width="27.599999999999998" height="19.2" fill="none" stroke="#d2d2d2" stroke-width="0.9" rx="1"/><rect x="5" y="2" width="20" height="17.4" fill="#fff" stroke="#111" stroke-width="0.9"/><path d="M5 4.90 h20" stroke="#111" stroke-width="0.9"/><path d="M5 7.80 h20" stroke="#111" stroke-width="0.9"/><path d="M5 10.70 h20" stroke="#111" stroke-width="0.9"/><path d="M5 13.60 h20" stroke="#111" stroke-width="0.9"/><path d="M5 16.50 h20" stroke="#111" stroke-width="0.9"/><path d="M9.00 2 v17.4" stroke="#111" stroke-width="0.9"/><path d="M13.00 2 v17.4" stroke="#111" stroke-width="0.9"/><path d="M17.00 2 v17.4" stroke="#111" stroke-width="0.9"/><path d="M21.00 2 v17.4" stroke="#111" stroke-width="0.9"/><rect x="5" y="2" width="4" height="2.9" fill="#111"/><rect x="13.4" y="5.2" width="3.2" height="2.3" fill="#888"/></g>
<g transform="translate(1128.68,145.5)"><rect x="0" y="0" width="30.4" height="22" fill="#fff"/><rect x="1.4" y="1.4" width="27.599999999999998" height="19.2" fill="none" stroke="#d2d2d2" stroke-width="0.9" rx="1"/><path d="M5.6 3 V18.8 H25.6" fill="none" stroke="#3a3060" stroke-width="1"/><g fill="none" stroke="#bbb" stroke-width="0.5"><rect x="9.6" y="8" width="10.6" height="8.6"/><path d="M9.6 8 l3.6 -3 h10.6 l-3.6 3 M23.8 5 v8.6 l-3.6 3"/><path d="M13.2 5 v8.6 h10.6 M13.2 13.6 l-3.6 3" stroke-dasharray="0.8 0.6"/></g></g>
</svg>
<span class="t" id="t0" style="left:572.5px;top:13.5px;font-size:18px;color:#fff;-webkit-text-stroke:0.2px currentColor;letter-spacing:-0.086px;">Wizard</span>
<span class="t" id="t1" style="left:264px;top:38.5px;font-size:10.2px;color:#fff;-webkit-text-stroke:0.3px currentColor;letter-spacing:0.048px;">Data and widgets</span>
<span class="t" id="t2" style="left:845px;top:38.5px;font-size:10.2px;color:#fff;-webkit-text-stroke:0.3px currentColor;letter-spacing:0.005px;">Check and summary</span>
<span class="t" id="t3" style="left:297.5px;top:57px;font-size:8.5px;color:#fff;-webkit-text-stroke:0.3px currentColor;letter-spacing:-0.182px;">Map</span>
<span class="t" id="t4" style="left:856px;top:57px;font-size:8.5px;color:#fff;-webkit-text-stroke:0.3px currentColor;letter-spacing:0.094px;">Single data widgets</span>
<span class="t" id="t5" style="left:858.5px;top:138px;font-size:8.5px;color:#fff;-webkit-text-stroke:0.3px currentColor;letter-spacing:0.192px;">Multi data widgets</span>
<span class="t" id="t6" style="left:868px;top:199.5px;font-size:8.5px;color:#fff;-webkit-text-stroke:0.3px currentColor;letter-spacing:-0.032px;">Map Controls:</span>
<span class="t" id="t7" style="left:575px;top:242px;font-size:8.5px;color:#fff;-webkit-text-stroke:0.3px currentColor;letter-spacing:-0.033px;">Data sources</span>
<span class="t" id="t8" style="left:557.7px;top:422.8px;font-size:8.5px;color:#fff;-webkit-text-stroke:0.3px currentColor;letter-spacing:-0.038px;">Choosen data sources</span>
<span class="t" id="t9" style="left:635px;top:212.5px;font-size:7.8px;color:#1a1a1a;font-weight:700;letter-spacing:-0.128px;">FilterMap</span>
<span class="t" id="t10" style="left:688px;top:212.3px;font-size:8.5px;color:#fffbe8;-webkit-text-stroke:0.2px currentColor;letter-spacing:-0.129px;">GPSUser</span>
<span class="t" id="t11" style="left:741.5px;top:212.3px;font-size:8.5px;color:#fffbe8;-webkit-text-stroke:0.2px currentColor;letter-spacing:0.062px;">GPSOrg</span>
<span class="t" id="t12" style="left:30.3px;top:260px;font-size:7px;color:#fff;letter-spacing:0.025px;">All selected (8)</span>
<span class="t" id="t13" style="left:122px;top:260px;font-size:7px;color:#fff;letter-spacing:0.013px;">All selected (5)</span>
<span class="t" id="t14" style="left:225px;top:260px;font-size:7px;color:#fff;letter-spacing:0.075px;">All selected (8)</span>
<span class="t" id="t15" style="left:576.3px;top:260px;font-size:7px;color:#fff;letter-spacing:-0.037px;">All selected (3)</span>
<span class="t" id="t16" style="left:667px;top:260px;font-size:7px;color:#fff;letter-spacing:-0.041px;">All selected (53)</span>
<span class="t" id="t17" style="left:762px;top:260px;font-size:7px;color:#fff;letter-spacing:-0.041px;">All selected (22)</span>
<span class="t" id="t18" style="left:857.5px;top:260px;font-size:7px;color:#fff;letter-spacing:-0.019px;">All selected (9)</span>
<span class="t" id="t19" style="left:949.3px;top:260px;font-size:7px;color:#fff;letter-spacing:-0.118px;">All selected (16)</span>
<span class="t" id="t20" style="left:1173.7px;top:260px;font-size:7px;color:#fff;letter-spacing:0.000px;letter-spacing:0px;width:14.3px;overflow:hidden;">All se</span>
<span class="t" id="t21" style="left:26.7px;top:277.2px;font-size:8.5px;color:#fff;-webkit-text-stroke:0.3px currentColor;letter-spacing:-0.012px;">High-Level Type</span>
<span class="t" id="t22" style="left:136px;top:277.2px;font-size:8.5px;color:#fff;-webkit-text-stroke:0.3px currentColor;letter-spacing:0.164px;">Nature</span>
<span class="t" id="t23" style="left:232px;top:277.2px;font-size:8.5px;color:#fff;-webkit-text-stroke:0.3px currentColor;letter-spacing:0.196px;">Subnature</span>
<span class="t" id="t24" style="left:407.5px;top:277.2px;font-size:8.5px;color:#fff;-webkit-text-stroke:0.3px currentColor;letter-spacing:0.083px;">Device/Model</span>
<span class="t" id="t25" style="left:590px;top:277.2px;font-size:8.5px;color:#fff;-webkit-text-stroke:0.3px currentColor;letter-spacing:0.076px;">Broker</span>
<span class="t" id="t26" style="left:672.5px;top:277.2px;font-size:8.5px;color:#fff;-webkit-text-stroke:0.3px currentColor;letter-spacing:0.064px;">Value Name</span>
<span class="t" id="t27" style="left:770px;top:277.2px;font-size:8.5px;color:#fff;-webkit-text-stroke:0.3px currentColor;letter-spacing:-0.045px;">Value Type</span>
<span class="t" id="t28" style="left:865px;top:277.2px;font-size:8.5px;color:#fff;-webkit-text-stroke:0.3px currentColor;letter-spacing:-0.033px;">Data Type</span>
<span class="t" id="t29" style="left:957px;top:277.2px;font-size:8.5px;color:#fff;-webkit-text-stroke:0.3px currentColor;letter-spacing:0.141px;">Value Unit</span>
<span class="t" id="t30" style="left:1040.8px;top:277.2px;font-size:8.5px;color:#fff;-webkit-text-stroke:0.3px currentColor;letter-spacing:-0.055px;">Last Date</span>
<span class="t" id="t31" style="left:1104.7px;top:277.2px;font-size:8.5px;color:#fff;-webkit-text-stroke:0.3px currentColor;letter-spacing:-0.095px;">Last Value</span>
<span class="t" id="t32" style="left:1178.3px;top:277.2px;font-size:8.5px;color:#fff;-webkit-text-stroke:0.3px currentColor;letter-spacing:0.000px;letter-spacing:0.1px;width:9.7px;overflow:hidden;">He</span>
<span class="t" id="t33" style="left:26.3px;top:290.7px;font-size:7.8px;color:#5c5c5c;letter-spacing:-0.038px;">Data Table Device</span>
<span class="t" id="t34" style="left:116.8px;top:290.7px;font-size:7.8px;color:#5c5c5c;letter-spacing:0.116px;">GovernmentOffice</span>
<span class="t" id="t35" style="left:230.8px;top:290.7px;font-size:7.8px;color:#5c5c5c;letter-spacing:0.096px;">Other_office</span>
<span class="t" id="t36" style="left:310.5px;top:290.7px;font-size:7.8px;color:#5c5c5c;letter-spacing:-0.063px;">E0_disembarcation_correct_v2.xlsx__N_of_passengers_disembarkation</span>
<span class="t" id="t37" style="left:564px;top:290.7px;font-size:7.8px;color:#5c5c5c;letter-spacing:0.080px;">orionDubrovnik-UNIFI</span>
<span class="t" id="t38" style="left:862.5px;top:290.7px;font-size:7.8px;color:#5c5c5c;letter-spacing:0.059px;">sensor_map</span>
<span class="t" id="t39" style="left:1025px;top:290.7px;font-size:7.8px;color:#5c5c5c;letter-spacing:-0.258px;">2021-08-01 01:00:00</span>
<span class="t" id="t40" style="left:26.3px;top:302.2px;font-size:7.8px;color:#5c5c5c;letter-spacing:-0.038px;">Data Table Device</span>
<span class="t" id="t41" style="left:116.8px;top:302.2px;font-size:7.8px;color:#5c5c5c;letter-spacing:0.116px;">GovernmentOffice</span>
<span class="t" id="t42" style="left:230.8px;top:302.2px;font-size:7.8px;color:#5c5c5c;letter-spacing:0.096px;">Other_office</span>
<span class="t" id="t43" style="left:349px;top:302.2px;font-size:7.8px;color:#5c5c5c;letter-spacing:-0.020px;">Numberofovernightsbymonths_v4.xlsx__Tabelle1</span>
<span class="t" id="t44" style="left:564px;top:302.2px;font-size:7.8px;color:#5c5c5c;letter-spacing:0.080px;">orionDubrovnik-UNIFI</span>
<span class="t" id="t45" style="left:862.5px;top:302.2px;font-size:7.8px;color:#5c5c5c;letter-spacing:0.059px;">sensor_map</span>
<span class="t" id="t46" style="left:1025px;top:302.2px;font-size:7.8px;color:#5c5c5c;letter-spacing:-0.258px;">2021-09-01 01:00:00</span>
<span class="t" id="t47" style="left:26.3px;top:313.7px;font-size:7.8px;color:#5c5c5c;letter-spacing:-0.038px;">Data Table Device</span>
<span class="t" id="t48" style="left:116.8px;top:313.7px;font-size:7.8px;color:#5c5c5c;letter-spacing:0.116px;">GovernmentOffice</span>
<span class="t" id="t49" style="left:230.8px;top:313.7px;font-size:7.8px;color:#5c5c5c;letter-spacing:0.096px;">Other_office</span>
<span class="t" id="t50" style="left:361px;top:313.7px;font-size:7.8px;color:#5c5c5c;letter-spacing:-0.026px;">numberoftourist-correct_v4.xlsx__Tabelle1</span>
<span class="t" id="t51" style="left:564px;top:313.7px;font-size:7.8px;color:#5c5c5c;letter-spacing:0.080px;">orionDubrovnik-UNIFI</span>
<span class="t" id="t52" style="left:862.5px;top:313.7px;font-size:7.8px;color:#5c5c5c;letter-spacing:0.059px;">sensor_map</span>
<span class="t" id="t53" style="left:1025px;top:313.7px;font-size:7.8px;color:#5c5c5c;letter-spacing:-0.228px;">2021-11-24 00:00:00</span>
<span class="t" id="t54" style="left:26.3px;top:325.2px;font-size:7.8px;color:#5c5c5c;letter-spacing:-0.038px;">Data Table Device</span>
<span class="t" id="t55" style="left:116.8px;top:325.2px;font-size:7.8px;color:#5c5c5c;letter-spacing:0.116px;">GovernmentOffice</span>
<span class="t" id="t56" style="left:230.8px;top:325.2px;font-size:7.8px;color:#5c5c5c;letter-spacing:0.096px;">Other_office</span>
<span class="t" id="t57" style="left:334px;top:325.2px;font-size:7.8px;color:#5c5c5c;letter-spacing:0.000px;">Saturationofaccommodationfacilitiespn_v4.xlsx__Tabelle1</span>
<span class="t" id="t58" style="left:564px;top:325.2px;font-size:7.8px;color:#5c5c5c;letter-spacing:0.080px;">orionDubrovnik-UNIFI</span>
<span class="t" id="t59" style="left:862.5px;top:325.2px;font-size:7.8px;color:#5c5c5c;letter-spacing:0.059px;">sensor_map</span>
<span class="t" id="t60" style="left:1025px;top:325.2px;font-size:7.8px;color:#5c5c5c;letter-spacing:-0.258px;">2021-09-10 01:00:00</span>
<span class="t" id="t61" style="left:26.3px;top:336.7px;font-size:7.8px;color:#5c5c5c;letter-spacing:-0.038px;">Data Table Device</span>
<span class="t" id="t62" style="left:116.8px;top:336.7px;font-size:7.8px;color:#5c5c5c;letter-spacing:0.116px;">GovernmentOffice</span>
<span class="t" id="t63" style="left:230.8px;top:336.7px;font-size:7.8px;color:#5c5c5c;letter-spacing:0.096px;">Other_office</span>
<span class="t" id="t64" style="left:359px;top:336.7px;font-size:7.8px;color:#5c5c5c;letter-spacing:-0.081px;">E5-v7.xlsx__Rate_and_quality_employment</span>
<span class="t" id="t65" style="left:564px;top:336.7px;font-size:7.8px;color:#5c5c5c;letter-spacing:0.080px;">orionDubrovnik-UNIFI</span>
<span class="t" id="t66" style="left:862.5px;top:336.7px;font-size:7.8px;color:#5c5c5c;letter-spacing:0.059px;">sensor_map</span>
<span class="t" id="t67" style="left:1025px;top:336.7px;font-size:7.8px;color:#5c5c5c;letter-spacing:-0.258px;">2020-12-31 00:00:00</span>
<span class="t" id="t68" style="left:26.3px;top:348.2px;font-size:7.8px;color:#5c5c5c;letter-spacing:-0.038px;">Data Table Device</span>
<span class="t" id="t69" style="left:125.8px;top:348.2px;font-size:7.8px;color:#5c5c5c;letter-spacing:0.202px;">Environment</span>
<span class="t" id="t70" style="left:195px;top:348.2px;font-size:7.8px;color:#5c5c5c;letter-spacing:0.018px;">Waste_collection_and_treatment</span>
<span class="t" id="t71" style="left:331px;top:348.2px;font-size:7.8px;color:#5c5c5c;letter-spacing:-0.087px;">solid_urban_waste_collected_per_day_pn_v4.xlsx__Monthly</span>
<span class="t" id="t72" style="left:564px;top:348.2px;font-size:7.8px;color:#5c5c5c;letter-spacing:0.080px;">orionDubrovnik-UNIFI</span>
<span class="t" id="t73" style="left:862.5px;top:348.2px;font-size:7.8px;color:#5c5c5c;letter-spacing:0.059px;">sensor_map</span>
<span class="t" id="t74" style="left:1025px;top:348.2px;font-size:7.8px;color:#5c5c5c;letter-spacing:-0.258px;">2020-12-31 00:00:00</span>
<span class="t" id="t75" style="left:26.3px;top:359.7px;font-size:7.8px;color:#5c5c5c;letter-spacing:-0.038px;">Data Table Device</span>
<span class="t" id="t76" style="left:125.8px;top:359.7px;font-size:7.8px;color:#5c5c5c;letter-spacing:0.202px;">Environment</span>
<span class="t" id="t77" style="left:224.3px;top:359.7px;font-size:7.8px;color:#5c5c5c;letter-spacing:-0.063px;">Weather_sensor</span>
<span class="t" id="t78" style="left:355px;top:359.7px;font-size:7.8px;color:#5c5c5c;letter-spacing:-0.059px;">Environmental_levels_Sites_v2.xlsx__Monthly</span>
<span class="t" id="t79" style="left:564px;top:359.7px;font-size:7.8px;color:#5c5c5c;letter-spacing:0.080px;">orionDubrovnik-UNIFI</span>
<span class="t" id="t80" style="left:862.5px;top:359.7px;font-size:7.8px;color:#5c5c5c;letter-spacing:0.059px;">sensor_map</span>
<span class="t" id="t81" style="left:1025px;top:359.7px;font-size:7.8px;color:#5c5c5c;letter-spacing:-0.258px;">2020-12-01 00:00:00</span>
<span class="t" id="t82" style="left:27px;top:371.2px;font-size:7.8px;color:#5c5c5c;letter-spacing:0.028px;">Data Table Model</span>
<span class="t" id="t83" style="left:116.8px;top:371.2px;font-size:7.8px;color:#5c5c5c;letter-spacing:0.116px;">GovernmentOffice</span>
<span class="t" id="t84" style="left:230.8px;top:371.2px;font-size:7.8px;color:#5c5c5c;letter-spacing:0.096px;">Other_office</span>
<span class="t" id="t85" style="left:359px;top:371.2px;font-size:7.8px;color:#5c5c5c;letter-spacing:-0.159px;">E0_disembarcation_correct_v2_1637744912</span>
<span class="t" id="t86" style="left:564px;top:371.2px;font-size:7.8px;color:#5c5c5c;letter-spacing:0.080px;">orionDubrovnik-UNIFI</span>
<span class="t" id="t87" style="left:876.5px;top:371.2px;font-size:7.8px;color:#777;letter-spacing:0.276px;">map</span>
<span class="t" id="t88" style="left:58.7px;top:396.3px;font-size:8.5px;color:#fff;-webkit-text-stroke:0.3px currentColor;letter-spacing:0.150px;">Hide columns</span>
<span class="t" id="t89" style="left:239.5px;top:397px;font-size:8.5px;color:#fff8e0;-webkit-text-stroke:0.3px currentColor;letter-spacing:0.048px;">Reset filters</span>
<span class="t" id="t90" style="left:375.8px;top:396.3px;font-size:8.5px;color:#fff;-webkit-text-stroke:0.3px currentColor;letter-spacing:-0.071px;">Selected rows: 0</span>
<span class="t" id="t91" style="left:520.5px;top:396.3px;font-size:8.5px;color:#fff;-webkit-text-stroke:0.3px currentColor;letter-spacing:-0.072px;">Previous</span>
<span class="t" id="t92" style="left:567.5px;top:396.3px;font-size:8.5px;color:#fff;-webkit-text-stroke:0.3px currentColor;letter-spacing:0.000px;">1</span>
<span class="t" id="t93" style="left:586.8px;top:396.3px;font-size:8.5px;color:#fff;-webkit-text-stroke:0.3px currentColor;letter-spacing:0.000px;transform:translate(-50%,-50%);">2</span>
<span class="t" id="t94" style="left:606px;top:396.3px;font-size:8.5px;color:#fff;-webkit-text-stroke:0.3px currentColor;letter-spacing:0.000px;transform:translate(-50%,-50%);">3</span>
<span class="t" id="t95" style="left:625.5px;top:396.3px;font-size:8.5px;color:#fff;-webkit-text-stroke:0.3px currentColor;letter-spacing:0.000px;transform:translate(-50%,-50%);">4</span>
<span class="t" id="t96" style="left:644.5px;top:396.3px;font-size:8.5px;color:#fff;-webkit-text-stroke:0.3px currentColor;letter-spacing:0.000px;transform:translate(-50%,-50%);">5</span>
<span class="t" id="t97" style="left:664px;top:396.3px;font-size:8.5px;color:#fff;-webkit-text-stroke:0.3px currentColor;letter-spacing:0.000px;transform:translate(-50%,-50%);">…</span>
<span class="t" id="t98" style="left:684.5px;top:396.3px;font-size:8.5px;color:#fff;-webkit-text-stroke:0.3px currentColor;letter-spacing:0.000px;transform:translate(-50%,-50%);">17</span>
<span class="t" id="t99" style="left:703px;top:396.3px;font-size:8.5px;color:#fff;-webkit-text-stroke:0.3px currentColor;letter-spacing:0.129px;">Next</span>
<span class="t" id="t100" style="left:906px;top:397.8px;font-size:8.6px;color:#8a8a8a;letter-spacing:-0.372px;">Search</span>
<span class="t" id="t101" style="left:42.3px;top:438.5px;font-size:8.3px;color:#fff;-webkit-text-stroke:0.3px currentColor;letter-spacing:-0.007px;">High-Level Type</span>
<span class="t" id="t102" style="left:140.3px;top:438.5px;font-size:8.3px;color:#fff;-webkit-text-stroke:0.3px currentColor;letter-spacing:0.249px;">Nature</span>
<span class="t" id="t103" style="left:202px;top:438.5px;font-size:8.3px;color:#fff;-webkit-text-stroke:0.3px currentColor;letter-spacing:0.189px;">Subnature</span>
<span class="t" id="t104" style="left:280.7px;top:438.5px;font-size:8.3px;color:#fff;-webkit-text-stroke:0.3px currentColor;letter-spacing:0.111px;">Device/Model</span>
<span class="t" id="t105" style="left:369px;top:438.5px;font-size:8.3px;color:#fff;-webkit-text-stroke:0.3px currentColor;letter-spacing:0.144px;">Broker</span>
<span class="t" id="t106" style="left:430.7px;top:438.5px;font-size:8.3px;color:#fff;-webkit-text-stroke:0.3px currentColor;letter-spacing:0.025px;">Value Name</span>
<span class="t" id="t107" style="left:514.3px;top:438.5px;font-size:8.3px;color:#fff;-webkit-text-stroke:0.3px currentColor;letter-spacing:-0.005px;">Value Type</span>
<span class="t" id="t108" style="left:592.7px;top:438.5px;font-size:8.3px;color:#fff;-webkit-text-stroke:0.3px currentColor;letter-spacing:-0.041px;">Data Type</span>
<span class="t" id="t109" style="left:666.7px;top:438.5px;font-size:8.3px;color:#fff;-webkit-text-stroke:0.3px currentColor;letter-spacing:0.133px;">Value Unit</span>
<span class="t" id="t110" style="left:742.7px;top:438.5px;font-size:8.3px;color:#fff;-webkit-text-stroke:0.3px currentColor;letter-spacing:0.009px;">Last Date</span>
<span class="t" id="t111" style="left:815px;top:438.5px;font-size:8.3px;color:#fff;-webkit-text-stroke:0.3px currentColor;letter-spacing:-0.029px;">Last Value</span>
<span class="t" id="t112" style="left:891px;top:438.5px;font-size:8.3px;color:#fff;-webkit-text-stroke:0.3px currentColor;letter-spacing:0.058px;">Healthiness</span>
<span class="t" id="t113" style="left:973.3px;top:438.5px;font-size:8.3px;color:#fff;-webkit-text-stroke:0.3px currentColor;letter-spacing:-0.052px;">Last Check</span>
<span class="t" id="t114" style="left:1051.7px;top:438.5px;font-size:8.3px;color:#fff;-webkit-text-stroke:0.3px currentColor;letter-spacing:0.214px;">Ownership</span>
<span class="t" id="t115" style="left:1130px;top:438.5px;font-size:8.3px;color:#fff;-webkit-text-stroke:0.3px currentColor;letter-spacing:-0.034px;">Remove</span>
<span class="t" id="t116" style="left:556px;top:450.8px;font-size:7.5px;color:#5c5c5c;letter-spacing:0.145px;">No data available in table</span>
<span class="t" id="t117" style="left:522px;top:461.2px;font-size:8.3px;color:#fff;-webkit-text-stroke:0.3px currentColor;letter-spacing:0.090px;">Previous</span>
<span class="t" id="t118" style="left:569.7px;top:461.2px;font-size:8.3px;color:#fff;-webkit-text-stroke:0.3px currentColor;letter-spacing:-0.016px;">Next</span>
<span class="t" id="t119" style="left:901px;top:463px;font-size:8.6px;color:#8a8a8a;letter-spacing:-0.289px;">Search</span>
<span class="t" id="t120" style="left:537.7px;top:477px;font-size:8.5px;color:#e8cf62;font-style:italic;letter-spacing:0.119px;">You must select one widget type</span>
<span class="t" id="t121" style="left:571.5px;top:554.8px;font-size:9.3px;color:#cfdde9;letter-spacing:0.094px;">Prev</span>
<span class="t" id="t122" style="left:608px;top:554.8px;font-size:9.3px;color:#cfdde9;letter-spacing:0.219px;">Next</span>
<span class="t" id="t123" style="left:1146px;top:555px;font-size:9.3px;color:#fff8e0;letter-spacing:0.044px;">Close</span>
</div></body></html>
